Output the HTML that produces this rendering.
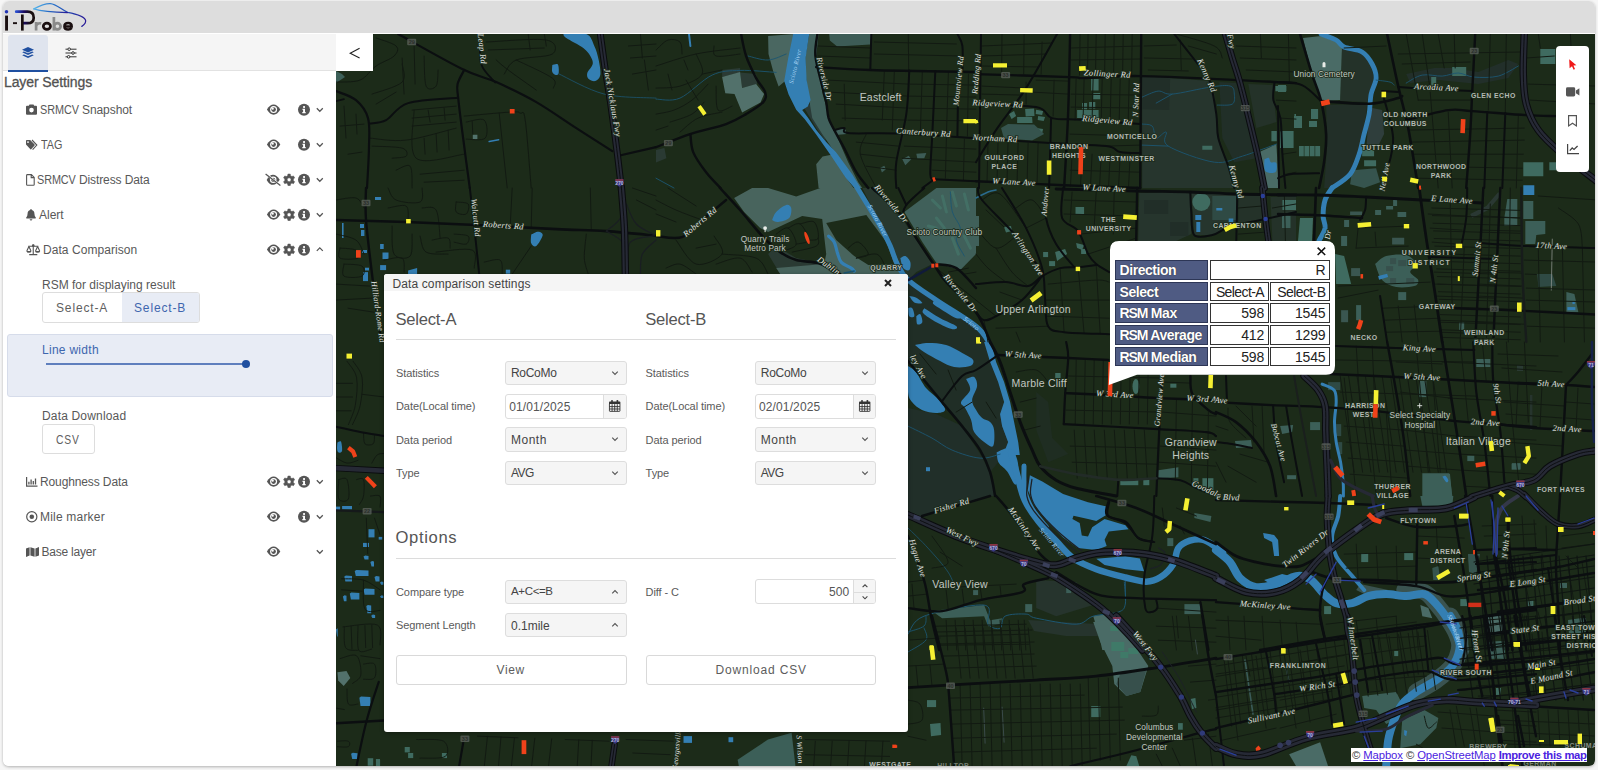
<!DOCTYPE html>
<html lang="en">
<head>
<meta charset="utf-8">
<title>i-Probe</title>
<style>
*{box-sizing:border-box;}
html,body{margin:0;padding:0;}
body{width:1598px;height:770px;overflow:hidden;background:#f6f6f6;font-family:"Liberation Sans",sans-serif;color:#555;position:relative;}
#card{position:absolute;left:3px;top:1px;width:1592px;height:765px;border-radius:6px;background:#fff;box-shadow:0 1px 3px rgba(0,0,0,.28);overflow:hidden;}
#in{position:absolute;left:-3px;top:-1px;width:1598px;height:770px;}
.abs{position:absolute;}
#hdr{left:0;top:0;width:1598px;height:33px;background:#dddddd;}
#tabs{left:3px;top:34px;width:333px;height:37px;background:#f5f5f5;border-bottom:1px solid #e2e2e2;}
#tabact{left:8px;top:35px;width:40px;height:37px;background:#dfe4ee;border-bottom:2px solid #1f4fa0;border-radius:3px 3px 0 0;}
#collapse{left:336px;top:34px;width:37px;height:37px;background:#fff;}
.t{position:absolute;white-space:nowrap;line-height:1;}
.row{font-size:12px;color:#585858;}
.cap{display:inline-block;transform:scaleX(.905);transform-origin:0 50%;}
svg{position:absolute;overflow:visible;}
.ic{fill:#555;}
</style>
</head>
<body>
<div id="card"><div id="in">

<!-- MAP -->
<div class="abs" id="map" style="left:336px;top:34px;width:1259px;height:733px;background:#1c2b19;overflow:hidden;">
<!--MAPSVG-START-->
<svg width="1259" height="733" viewBox="0 0 1259 733" style="left:0;top:0">
<g id="L-land">
<polygon points="386.1,36.0 404.1,34.0 404.1,38.4 386.1,43.1" fill="#2b3b35"/>
<polygon points="404.1,38.4 420.1,40.1 421.1,50.1 406.1,54.1" fill="#2b3b35"/>
<polygon points="320.0,116.1 328.4,114.1 330.4,124.2 320.0,128.6" fill="#2a3a33"/>
<polygon points="468.2,74.1 474.2,70.1 486.2,94.1 490.2,108.1 480.2,94.1" fill="#2a3b38"/>
<polygon points="806.2,42.1 874.3,47.1 878.3,60.1 882.3,104.1 892.3,132.2 898.3,154.0 806.2,154.0" fill="#26352d"/>
<polygon points="806.2,42.1 834.2,43.3 833.2,76.1 806.2,75.3" fill="#212e28"/>
<polygon points="883.3,48.1 900.3,49.1 912.3,90.1 920.4,124.2 898.3,128.2 886.3,104.1" fill="#212f28"/>
<polygon points="912.3,50.1 936.4,51.1 940.4,88.1 920.4,94.1" fill="#243229"/>
<polygon points="1006.1,12.0 1026.1,19.0 1035.1,30.0 1038.1,44.1 1033.1,60.1 1031.1,68.1 1004.1,67.1" fill="#243229"/>
<polygon points="990.1,71.1 1031.1,70.1 1028.1,100.1 1023.1,120.2 1014.1,140.2 996.1,154.0 988.1,154.0 991.1,112.1" fill="#222f28"/>
<polygon points="1036.1,74.1 1046.1,76.1 1048.1,100.1 1042.1,112.1 1030.1,116.1 1033.1,80.1" fill="#2f3e3c"/>
<polygon points="1070.2,40.1 1098.2,34.0 1116.2,34.0 1142.3,38.0 1172.3,26.0 1182.3,30.0 1172.3,44.1 1142.3,50.1 1102.2,46.1 1074.2,49.1" fill="#222f2a"/>
<polygon points="440.2,212.1 460.2,224.1 488.2,230.1 444.2,240.1 432.1,220.1" fill="#2a3a33"/>
<polygon points="526.3,154.0 538.3,154.0 568.3,188.0 596.3,230.1 580.3,238.1 572.3,246.1 562.3,230.1 552.3,206.1 540.3,182.0" fill="#28382f"/>
<polygon points="572.3,248.1 600.4,266.1 640.0,294.2 652.4,308.0 572.3,308.0" fill="#202e26"/>
<polygon points="803.2,159.0 854.3,158.0 855.3,200.1 840.3,207.1 802.2,207.1" fill="#26352d"/>
<polygon points="855.3,159.0 900.3,160.0 900.3,191.0 888.3,195.1 876.3,201.1 858.3,201.1" fill="#26352d"/>
<polygon points="902.3,161.0 924.4,161.6 928.4,186.0 902.3,191.0" fill="#243229"/>
<polygon points="934.4,163.0 960.0,162.0 960.0,207.1 936.4,207.1" fill="#243229"/>
<polygon points="808.2,166.0 832.2,166.0 832.2,180.0 808.2,180.0" fill="#212e28"/>
<polygon points="834.2,188.0 852.3,188.0 852.3,202.1 834.2,202.1" fill="#212e28"/>
<polygon points="1134.2,180.0 1150.3,172.0 1162.3,158.0 1164.3,162.0 1152.3,176.0 1136.2,184.0" fill="#2a3833"/>
<polygon points="572.0,374.1 600.1,380.1 626.1,392.1 644.1,420.1 654.1,438.2 660.1,462.0 572.0,462.0" fill="#212f29"/>
<polygon points="572.0,308.0 648.1,308.0 654.1,328.0 662.1,348.1 668.1,368.1 664.1,380.1 666.1,392.1 672.1,408.1 668.1,420.1 662.1,428.2 654.1,438.2 644.1,416.1 626.1,392.1 606.1,368.1 588.0,346.0 572.0,327.0" fill="#202e26"/>
<polygon points="664.1,380.1 669.1,377.1 672.1,392.1 675.1,408.1 672.1,408.1 666.1,392.1" fill="#2a4a60"/>
<polygon points="700.2,358.1 712.2,368.1 716.2,404.1 732.2,420.1 712.2,428.2 700.2,396.1" fill="#1f2d22"/>
<polygon points="1194.0,361.0 1196.4,361.0 1196.4,396.0 1194.0,396.0" fill="#26342d"/>
<polygon points="700.2,546.1 740.2,548.1 760.3,570.1 720.2,582.2 700.2,574.1" fill="#26342d"/>
<polygon points="572.0,462.0 654.1,462.0 620.1,472.0 586.0,482.0 572.0,481.0" fill="#212f29"/>
<polygon points="789.4,528.6 803.9,526.5 806.0,530.6 793.6,531.7" fill="#1f2f22"/>
<polygon points="692.2,586.0 760.3,590.0 762.3,602.0 730.2,602.0 698.2,597.0" fill="#26342d"/>
</g>
<g id="L-park">
<polygon points="136.8,100.7 141.4,100.7 141.4,105.3 136.8,105.3" fill="#52736c"/>
<polygon points="0.0,37.0 6.0,40.1 9.0,43.1 0.0,49.1" fill="#3c5f58"/>
<polygon points="473.2,0.0 482.6,0.0 480.2,22.0 486.6,60.1 494.6,88.1 512.2,128.2 522.3,148.2 526.3,154.0 518.2,154.0 500.2,120.2 486.2,100.1 476.2,84.1 473.2,66.1 470.2,46.1 469.2,24.0" fill="#41615c"/>
<polygon points="432.1,2.0 458.2,0.0 453.2,24.0 449.2,47.1 442.6,52.5 437.1,37.0 432.5,20.0" fill="#4a6761"/>
<polygon points="493.2,0.0 535.3,0.0 534.3,10.4 501.2,12.4 493.8,6.4" fill="#3d5c56"/>
<polygon points="386.1,43.1 404.1,38.0 406.1,54.1 420.1,50.1 428.1,60.1 424.5,68.5 406.1,78.5 398.5,60.1 389.3,59.3" fill="#52716b"/>
<polygon points="482.6,154.0 480.2,130.2 486.6,122.6 496.6,120.6 510.6,144.6 517.6,154.0" fill="#48645d"/>
<polygon points="566.3,125.2 572.7,121.8 575.3,125.2 569.3,131.2" fill="#3d5c56"/>
<polygon points="580.3,119.7 590.3,119.1 588.3,124.2 581.3,124.6" fill="#3d5c56"/>
<polygon points="544.3,133.8 548.3,131.8 549.9,135.2 545.9,138.6" fill="#3d5c56"/>
<polygon points="499.2,96.1 509.2,94.5 510.6,100.1 500.2,101.1" fill="#41615c"/>
<polygon points="755.1,45.1 762.6,45.1 762.6,56.5 755.1,56.5" fill="#3f6b60"/>
<polygon points="757.1,59.1 764.2,59.1 764.2,65.3 757.1,65.3" fill="#3f6b60"/>
<polygon points="746.1,69.1 751.1,69.1 751.1,75.3 746.1,75.3" fill="#3f6b60"/>
<polygon points="753.1,68.1 759.3,68.1 759.3,74.5 753.1,74.5" fill="#3f6b60"/>
<polygon points="741.1,76.1 762.6,76.1 762.6,84.1 741.1,84.1" fill="#3f6b60"/>
<polygon points="939.4,52.1 950.4,52.1 950.4,57.3 939.4,57.3" fill="#3f6b60"/>
<polygon points="935.4,97.1 940.8,97.1 940.8,107.3 935.4,107.3" fill="#3f6b60"/>
<polygon points="944.4,97.1 957.6,97.1 957.6,114.1 944.4,114.1" fill="#3f6b60"/>
<polygon points="866.3,111.7 876.3,111.7 876.3,115.7 866.3,115.7" fill="#3f6b60"/>
<polygon points="958.4,80.1 960.0,80.1 960.0,94.1 958.4,94.1" fill="#3f6b60"/>
<polygon points="673.0,80.1 678.0,77.1 680.1,82.1 675.6,85.1" fill="#3f6b60"/>
<polygon points="681.1,83.1 696.1,83.1 696.5,89.1 681.1,89.1" fill="#3f6b60"/>
<polygon points="689.1,75.1 698.1,74.5 698.5,82.1 689.7,82.5" fill="#3f6b60"/>
<polygon points="700.1,75.7 707.1,77.1 706.1,81.1 699.7,80.1" fill="#3f6b60"/>
<polygon points="702.1,82.1 709.1,83.1 707.7,87.1 701.7,86.1" fill="#3f6b60"/>
<polygon points="700.1,94.1 707.1,95.1 706.1,99.1 701.1,98.5" fill="#3f6b60"/>
<polygon points="665.0,94.1 672.0,90.1 698.1,90.5 708.1,100.1 696.1,106.5 668.0,104.5" fill="#36544e"/>
<polygon points="923.4,118.1 940.4,110.1 942.8,154.0 928.8,154.0" fill="#4a6b66"/>
<polygon points="967.0,4.0 985.1,2.0 1006.1,10.0 1004.1,66.1 985.1,67.1 976.0,40.1" fill="#4a6b66"/>
<polygon points="1016.1,136.2 1040.1,134.2 1044.1,148.2 1028.1,154.0 1014.1,150.2" fill="#36544e"/>
<polygon points="1116.2,33.0 1130.2,33.0 1130.2,42.1 1116.2,42.1" fill="#3f6b60"/>
<polygon points="1095.2,43.1 1100.2,43.1 1100.2,53.1 1095.2,53.1" fill="#3f6b60"/>
<polygon points="1204.3,15.0 1219.3,15.0 1219.3,30.0 1204.3,30.0" fill="#3f6b60"/>
<polygon points="1187.3,128.2 1207.3,128.2 1207.3,142.2 1187.3,142.2" fill="#3f6b60"/>
<polygon points="1213.3,128.2 1220.3,128.2 1220.3,136.2 1213.3,136.2" fill="#3f6b60"/>
<polygon points="958.0,82.1 966.0,82.1 966.0,94.1 958.0,94.1" fill="#3f6b60"/>
<polygon points="975.0,75.1 982.1,75.1 982.1,85.1 975.0,85.1" fill="#3f6b60"/>
<polygon points="973.0,87.1 981.0,87.1 981.0,93.1 973.0,93.1" fill="#3f6b60"/>
<polygon points="944.0,98.1 957.0,98.1 957.0,114.1 944.0,114.1" fill="#3f6b60"/>
<polygon points="942.0,51.1 950.0,51.1 950.0,58.1 942.0,58.1" fill="#3f6b60"/>
<polygon points="1026.1,116.1 1038.1,116.1 1038.1,122.2 1026.1,122.2" fill="#3f6b60"/>
<polygon points="1028.1,126.2 1040.1,126.2 1040.1,132.2 1028.1,132.2" fill="#3f6b60"/>
<polygon points="963.0,112.1 967.8,112.1 967.8,122.2 963.0,122.2" fill="#3f6b60"/>
<polygon points="968.4,112.1 973.2,112.1 973.2,122.2 968.4,122.2" fill="#3f6b60"/>
<polygon points="973.8,112.1 978.6,112.1 978.6,122.2 973.8,122.2" fill="#3f6b60"/>
<polygon points="979.2,112.1 984.1,112.1 984.1,122.2 979.2,122.2" fill="#3f6b60"/>
<polygon points="1.4,638.3 10.5,637.0 14.3,643.9 7.7,652.1 2.2,646.6" fill="#52716b"/>
<polygon points="31.7,724.2 37.2,724.2 37.2,731.7 31.7,731.7" fill="#3f6b60"/>
<polygon points="39.9,725.0 44.0,725.0 44.0,731.7 39.9,731.7" fill="#3f6b60"/>
<polygon points="401.6,725.8 432.0,705.5 455.6,698.8 459.7,734.2 403.3,734.2" fill="#3c5f58"/>
<polygon points="68.7,713.0 73.8,713.0 73.8,718.4 68.7,718.4" fill="#3f6b60"/>
<polygon points="72.1,719.0 77.2,719.0 77.2,724.1 72.1,724.1" fill="#3f6b60"/>
<polygon points="105.9,719.0 111.0,719.0 111.0,724.1 105.9,724.1" fill="#3f6b60"/>
<polygon points="40.0,725.8 44.1,725.8 44.1,731.9 40.0,731.9" fill="#3f6b60"/>
<polygon points="398.1,164.0 416.1,154.0 520.3,154.0 532.3,176.0 550.3,206.1 560.3,222.1 567.3,240.1 444.2,240.1 440.2,234.1 488.2,230.1 490.2,220.1 486.2,185.0 466.2,182.0 432.1,198.1 424.1,194.1 408.1,178.0" fill="#48645d"/>
<polygon points="568.3,178.0 600.4,154.0 640.0,154.0 640.0,220.1 624.4,236.1 600.4,229.1 586.3,208.1" fill="#40605a"/>
<path d="M596.3 166.0 L604.4 174.0" fill="none" stroke="#44766a" stroke-width="3" stroke-linecap="round" stroke-linejoin="round" opacity="0.7"/>
<path d="M606.4 162.0 L610.4 178.0" fill="none" stroke="#44766a" stroke-width="3" stroke-linecap="round" stroke-linejoin="round" opacity="0.7"/>
<path d="M616.4 158.0 L620.4 172.0" fill="none" stroke="#44766a" stroke-width="3" stroke-linecap="round" stroke-linejoin="round" opacity="0.7"/>
<path d="M628.4 160.0 L632.4 176.0" fill="none" stroke="#44766a" stroke-width="3" stroke-linecap="round" stroke-linejoin="round" opacity="0.7"/>
<path d="M600.4 184.0 L608.4 194.1" fill="none" stroke="#44766a" stroke-width="3" stroke-linecap="round" stroke-linejoin="round" opacity="0.7"/>
<path d="M616.4 204.1 L622.4 220.1" fill="none" stroke="#44766a" stroke-width="3" stroke-linecap="round" stroke-linejoin="round" opacity="0.7"/>
<path d="M628.4 202.1 L634.4 214.1" fill="none" stroke="#44766a" stroke-width="3" stroke-linecap="round" stroke-linejoin="round" opacity="0.7"/>
<path d="M592.3 192.0 L600.4 194.1" fill="none" stroke="#44766a" stroke-width="3" stroke-linecap="round" stroke-linejoin="round" opacity="0.7"/>
<circle cx="865.3" cy="168.0" r="9" fill="#3f6b60"/>
<polygon points="876.3,162.0 900.3,162.0 900.3,186.0 876.3,186.0" fill="#2f4a44"/>
<polygon points="949.4,182.0 954.4,182.0 954.4,194.1 949.4,194.1" fill="#3f6b60"/>
<polygon points="739.5,173.0 748.1,173.0 748.1,180.0 739.5,180.0" fill="#3f6b60"/>
<polygon points="745.1,215.1 750.1,215.1 750.1,220.1 745.1,220.1" fill="#3f6b60"/>
<polygon points="707.1,218.1 712.1,218.1 712.1,223.1 707.1,223.1" fill="#3f6b60"/>
<polygon points="713.1,227.1 719.1,227.1 719.1,232.1 713.1,232.1" fill="#3f6b60"/>
<polygon points="946.4,166.0 960.0,166.0 960.0,176.0 946.4,176.0" fill="#3f6b60"/>
<polygon points="740.1,209.1 748.1,211.1 746.1,216.1 741.1,214.1" fill="#3f6b60"/>
<polygon points="719.1,218.1 729.1,215.1 731.1,220.1 721.1,227.1" fill="#3f6b60"/>
<polygon points="668.0,193.0 675.0,192.0 676.0,197.1 670.0,198.5" fill="#3f6b60"/>
<polygon points="640.0,182.0 643.0,182.0 643.0,212.1 640.0,212.1" fill="#40605a"/>
<path d="M1039.1 230.1 C1041.0 228.8 1045.0 223.6 1050.1 222.1 C1055.3 220.6 1065.2 219.7 1070.2 221.1 C1075.2 222.4 1079.5 227.3 1080.2 230.1 C1080.8 232.9 1073.8 235.4 1074.2 238.1 C1074.5 240.8 1081.5 243.8 1082.2 246.1 C1082.8 248.5 1081.8 251.0 1078.2 252.1 C1074.5 253.3 1065.5 254.1 1060.1 253.1 C1054.8 252.1 1049.6 250.0 1046.1 246.1 C1042.6 242.3 1040.3 232.8 1039.1 230.1Z" fill="#3c5f58"/>
<polygon points="1054.1,224.1 1060.1,224.1 1060.1,230.1 1054.1,230.1" fill="#37504c"/>
<polygon points="1050.1,232.1 1057.1,232.1 1057.1,237.1 1050.1,237.1" fill="#37504c"/>
<polygon points="1062.2,226.1 1070.2,226.1 1070.2,232.1 1062.2,232.1" fill="#37504c"/>
<polygon points="1070.2,244.1 1078.2,244.1 1078.2,250.1 1070.2,250.1" fill="#37504c"/>
<polygon points="1054.1,244.1 1060.1,244.1 1060.1,249.1 1054.1,249.1" fill="#37504c"/>
<polygon points="999.1,220.1 1008.1,222.1 1015.1,250.1 1000.1,250.1" fill="#3f6b60"/>
<polygon points="1015.1,234.1 1024.1,234.1 1024.1,242.1 1015.1,242.1" fill="#3a5650"/>
<polygon points="1056.1,203.7 1068.2,203.7 1068.2,210.5 1056.1,210.5" fill="#3a5650"/>
<polygon points="1014.1,177.6 1026.1,177.6 1026.1,181.0 1014.1,181.0" fill="#3a5650"/>
<polygon points="1005.1,276.2 1012.1,276.2 1012.1,288.2 1005.1,288.2" fill="#3a5650"/>
<polygon points="1005.1,202.1 1011.1,202.1 1011.1,212.1 1005.1,212.1" fill="#3c5f58"/>
<polygon points="1039.1,176.0 1045.1,176.0 1045.1,181.0 1039.1,181.0" fill="#3c5f58"/>
<polygon points="1050.1,172.0 1057.1,172.0 1057.1,175.6 1050.1,175.6" fill="#3c5f58"/>
<polygon points="1057.1,166.0 1061.1,166.0 1061.1,172.0 1057.1,172.0" fill="#3c5f58"/>
<polygon points="1061.5,178.0 1070.2,178.0 1070.2,183.0 1061.5,183.0" fill="#3c5f58"/>
<polygon points="1008.1,186.0 1013.1,186.0 1013.1,193.0 1008.1,193.0" fill="#3c5f58"/>
<polygon points="946.0,182.0 954.0,182.0 954.0,194.1 946.0,194.1" fill="#3c5f58"/>
<polygon points="1123.2,288.2 1128.2,288.2 1128.2,296.2 1123.2,296.2" fill="#3c5f58"/>
<polygon points="1020.1,271.1 1025.1,271.1 1025.1,286.2 1020.1,286.2" fill="#3c5f58"/>
<polygon points="1062.2,258.1 1070.2,258.1 1070.2,266.1 1062.2,266.1" fill="#3c5f58"/>
<polygon points="964.0,184.0 977.0,184.0 976.0,207.1 962.0,207.1" fill="#3f6b60"/>
<polygon points="1171.3,165.0 1181.3,165.0 1181.3,192.0 1168.3,192.0 1168.3,184.0" fill="#3c5f58"/>
<polygon points="1187.3,167.0 1197.3,167.0 1197.3,185.0 1187.3,185.0" fill="#3c5f58"/>
<polygon points="1189.3,187.0 1209.3,187.0 1209.3,200.1 1200.3,201.1 1199.3,210.1 1189.3,210.1" fill="#3c5f58"/>
<polygon points="1201.3,240.1 1216.3,240.1 1220.3,252.1 1202.3,253.1" fill="#2f4a44"/>
<polygon points="1230.4,258.1 1238.4,260.1 1242.4,278.2 1230.4,278.2" fill="#3c5f58"/>
<polygon points="719.2,339.0 724.6,339.0 724.6,344.0 719.2,344.0" fill="#3f6b60"/>
<polygon points="834.3,349.7 840.4,349.7 840.4,353.7 834.3,353.7" fill="#3f6b60"/>
<polygon points="784.3,445.2 802.3,445.2 802.3,451.2 784.3,451.2" fill="#3f6b60"/>
<polygon points="807.3,445.2 813.3,445.2 813.3,451.2 807.3,451.2" fill="#3f6b60"/>
<polygon points="857.4,444.2 862.4,444.2 862.4,452.2 857.4,452.2" fill="#3f6b60"/>
<polygon points="866.4,444.2 877.4,444.2 877.4,456.2 866.4,456.2" fill="#3f6b60"/>
<ellipse cx="799.9" cy="352.5" rx="3.4" ry="7.4" fill="#3f6b60"/>
<polygon points="822.3,436.2 842.4,433.2 842.4,443.2 822.3,444.2" fill="#3c5f58"/>
<polygon points="974.1,388.1 984.1,388.1 984.1,396.1 974.1,396.1" fill="#3c5f58"/>
<polygon points="1083.3,347.0 1090.3,347.0 1090.3,363.1 1083.3,363.1" fill="#3c5f58"/>
<polygon points="1140.3,325.0 1154.3,325.0 1154.3,333.0 1140.3,333.0" fill="#3c5f58"/>
<polygon points="1131.3,421.7 1138.3,421.7 1138.3,427.1 1131.3,427.1" fill="#3c5f58"/>
<polygon points="1176.0,429.2 1184.4,429.2 1184.4,435.2 1176.0,435.2" fill="#3c5f58"/>
<polygon points="951.1,441.2 960.1,441.2 960.1,445.2 951.1,445.2" fill="#3c5f58"/>
<polygon points="1000.2,390.1 1005.2,390.1 1005.2,402.1 1000.2,402.1" fill="#2f4a44"/>
<polygon points="1002.2,408.1 1006.2,408.1 1006.2,420.1 1002.2,420.1" fill="#2f4a44"/>
<polygon points="992.1,348.1 1004.2,348.1 1004.2,356.1 992.1,356.1" fill="#2f4a44"/>
<polygon points="944.1,392.1 957.1,391.1 956.1,398.1 946.1,400.1" fill="#3c5f58"/>
<polygon points="899.0,407.1 915.0,406.1 916.0,413.1 900.0,414.1" fill="#3c5f58"/>
<polygon points="1086.3,439.2 1113.3,439.2 1116.3,462.0 1086.3,462.0" fill="#3c5f58"/>
<polygon points="1175.6,429.6 1184.4,429.6 1184.4,435.6 1175.6,435.6" fill="#3c5f58"/>
<polygon points="1181.0,331.0 1187.0,331.0 1187.0,337.0 1181.0,337.0" fill="#2a3a33"/>
<polygon points="1102.0,440.0 1114.0,440.0 1116.0,461.8 1102.0,461.8" fill="#3c5f58"/>
<polygon points="596.0,577.1 648.1,571.1 654.1,586.2 666.1,584.2 664.1,590.2 652.1,592.2 648.1,582.2 606.1,584.2" fill="#3c5f58"/>
<polygon points="757.2,582.2 770.3,580.1 790.3,600.2 804.3,616.0 766.3,616.0 762.3,598.2" fill="#4a6b66"/>
<polygon points="774.3,590.2 782.3,590.2 782.3,598.2 774.3,598.2" fill="#3f7a68"/>
<polygon points="782.3,602.2 792.3,602.2 792.3,610.2 782.3,610.2" fill="#3f7a68"/>
<polygon points="689.2,570.1 696.2,570.1 696.2,578.1 689.2,578.1" fill="#3c5f58"/>
<polygon points="637.1,556.1 642.1,556.1 642.1,561.1 637.1,561.1" fill="#3c5f58"/>
<polygon points="730.2,553.1 735.2,553.1 735.2,559.1 730.2,559.1" fill="#3c5f58"/>
<polygon points="848.4,570.1 864.4,570.1 864.4,580.1 848.4,580.1" fill="#3c5f58"/>
<polygon points="831.3,504.1 837.3,504.1 837.3,512.1 831.3,512.1" fill="#3c5f58"/>
<polygon points="858.4,479.0 875.4,482.0 874.4,488.0 858.4,484.0" fill="#3c5f58"/>
<path d="M1068.2 556.1 C1071.6 556.5 1082.9 555.8 1088.3 558.1 C1093.6 560.5 1096.3 565.5 1100.3 570.1 C1104.3 574.8 1109.0 581.1 1112.3 586.2 C1115.6 591.2 1118.1 595.2 1120.3 600.2 C1122.5 605.1 1124.5 613.4 1125.3 616.0" fill="none" stroke="#3a5350" stroke-width="16" stroke-linecap="round" stroke-linejoin="round"/>
<polygon points="1024.2,550.1 1052.2,556.1 1032.2,562.1 1020.2,556.1" fill="#3a5350"/>
<polygon points="1025.2,519.1 1032.2,519.1 1032.2,528.1 1025.2,528.1" fill="#3f6b60"/>
<polygon points="988.1,572.1 995.1,572.1 995.1,580.1 988.1,580.1" fill="#3f6b60"/>
<polygon points="1124.3,565.1 1131.3,565.1 1131.3,572.1 1124.3,572.1" fill="#3f6b60"/>
<polygon points="1192.4,566.1 1197.4,566.1 1197.4,572.1 1192.4,572.1" fill="#3f6b60"/>
<polygon points="1156.3,608.2 1168.4,608.2 1168.4,616.0 1156.3,616.0" fill="#3f6b60"/>
<polygon points="1068.2,519.1 1077.2,519.1 1077.2,526.1 1068.2,526.1" fill="#3f6b60"/>
<polygon points="1084.3,462.0 1117.3,462.0 1116.3,472.0 1086.3,472.0" fill="#3c5f58"/>
<polygon points="1132.3,520.1 1142.3,520.1 1140.3,538.1 1133.3,536.1" fill="#36544e"/>
<polygon points="1096.3,534.1 1102.3,532.1 1104.3,546.1 1097.3,546.1" fill="#36544e"/>
<polygon points="1084.3,571.1 1092.3,574.1 1096.3,584.2 1086.3,582.2" fill="#4a6b66"/>
<polygon points="1149.3,584.2 1166.4,582.2 1168.4,598.2 1150.3,599.2" fill="#4a6b66"/>
<polygon points="757.2,588.0 772.3,586.0 796.3,608.0 812.3,632.1 804.3,658.1 790.3,662.1 778.3,650.1 776.3,632.1 764.3,608.0" fill="#4a6b66"/>
<polygon points="784.3,640.1 810.3,636.1 804.3,658.1 790.3,662.1 780.3,650.1" fill="#37504c"/>
<polygon points="774.3,592.0 782.3,592.0 782.3,597.0 774.3,597.0" fill="#3f7a68"/>
<polygon points="775.3,608.0 788.3,608.0 788.3,617.0 775.3,617.0" fill="#3f7a68"/>
<polygon points="784.3,618.0 792.3,618.0 792.3,624.1 784.3,624.1" fill="#3f7a68"/>
<polygon points="792.3,614.0 802.3,614.0 802.3,620.0 792.3,620.0" fill="#3f7a68"/>
<polygon points="591.0,666.1 600.1,666.1 600.1,673.1 591.0,673.1" fill="#3f6b60"/>
<polygon points="755.2,672.1 764.3,672.1 764.3,683.1 755.2,683.1" fill="#3f6b60"/>
<polygon points="842.0,689.1 846.8,689.1 846.8,695.7 842.0,695.7" fill="#3f6b60"/>
<polygon points="594.0,690.1 604.5,689.1 605.1,701.1 595.0,702.2" fill="#3f6b60"/>
<polygon points="854.4,665.1 859.4,664.1 860.4,674.1 856.0,675.1" fill="#3f6b60"/>
<polygon points="790.3,732.2 795.3,721.2 800.3,722.2 803.3,732.2" fill="#3f6b60"/>
<path d="M1114.3 582.0 C1115.6 584.7 1120.8 592.3 1122.3 598.0 C1123.8 603.7 1124.3 610.4 1123.3 616.0 C1122.3 621.7 1120.1 627.1 1116.3 632.1 C1112.5 637.1 1106.3 641.7 1100.3 646.1 C1094.3 650.4 1083.6 656.1 1080.3 658.1" fill="none" stroke="#3a5350" stroke-width="17" stroke-linecap="round" stroke-linejoin="round"/>
<polygon points="1026.2,662.1 1060.2,658.1 1066.2,670.1 1058.2,686.1 1050.2,690.1 1040.2,676.1 1028.2,674.1" fill="#3c5f58"/>
<polygon points="1066.2,686.1 1088.3,676.1 1102.3,684.1 1100.3,694.1 1084.3,710.2 1064.2,714.2" fill="#3c5f58"/>
<polygon points="953.1,720.2 984.1,708.2 992.1,732.2 960.1,732.2" fill="#4a6b66"/>
<polygon points="1153.3,608.0 1168.4,607.0 1169.4,625.1 1154.3,624.1" fill="#3c5f58"/>
<polygon points="1150.3,584.0 1166.4,584.0 1166.4,600.0 1150.3,600.0" fill="#4a6b66"/>
<polygon points="1058.2,617.0 1062.2,617.0 1062.2,622.1 1058.2,622.1" fill="#3f6b60"/>
<polygon points="1160.4,654.1 1164.4,654.1 1164.4,662.1 1160.4,662.1" fill="#3f6b60"/>
<polygon points="1191.6,566.0 1196.0,566.0 1196.0,572.0 1191.6,572.0" fill="#3c5f58"/>
<polygon points="1224.0,549.0 1231.0,549.0 1231.0,554.0 1224.0,554.0" fill="#3c5f58"/>
<polygon points="1153.0,608.0 1168.0,608.0 1168.0,615.8 1153.0,615.8" fill="#3c5f58"/>
<polygon points="1150.0,582.0 1166.0,581.0 1168.0,600.0 1152.0,601.0" fill="#4a6b66"/>
<polygon points="1232.0,586.0 1248.0,584.0 1250.0,600.0 1233.0,600.0" fill="#3c5f58"/>
<polygon points="1132.0,520.0 1144.0,520.0 1140.0,540.0 1133.0,538.0" fill="#36544e"/>
<polygon points="1150.0,583.0 1166.0,582.0 1168.0,598.0 1151.0,599.0" fill="#4a6b66"/>
<polygon points="1153.0,608.0 1167.0,607.0 1168.0,624.0 1154.4,625.0" fill="#3c5f58"/>
<polygon points="1238.0,585.0 1250.0,584.0 1251.0,597.0 1239.0,598.0" fill="#3c5f58"/>
<polygon points="1160.0,654.0 1165.0,654.0 1165.0,661.0 1160.0,661.0" fill="#3f6b60"/>
</g>
<g id="L-land2">
<polygon points="432.1,154.0 460.2,162.4 484.2,154.0" fill="#1c2b19"/>
<polygon points="490.2,189.0 530.3,181.0 550.3,208.1 558.3,230.1 532.3,231.1 518.2,222.1 500.2,206.1" fill="#1c2b19"/>
</g>
<g id="L-water">
<path d="M227.3 0.0 C231.1 0.0 245.1 -2.0 250.3 0.0 C255.5 2.0 256.3 7.7 258.3 12.0 C260.4 16.4 261.7 21.2 262.7 26.0 C263.7 30.9 264.9 37.5 264.3 41.1 C263.8 44.6 261.3 46.4 259.3 47.1 C257.4 47.7 254.1 46.4 252.7 45.1 C251.4 43.7 250.6 41.6 251.3 39.0 C252.0 36.5 256.2 32.9 256.7 30.0 C257.2 27.2 255.9 24.7 254.3 22.0 C252.7 19.4 251.3 17.0 247.3 14.0 C243.3 11.0 233.6 6.3 230.3 4.0 C227.0 1.7 227.8 0.7 227.3 0.0Z" fill="#347fb3"/>
<path d="M216.3 31.0 C217.2 30.9 220.8 29.1 221.9 30.4 C222.9 31.8 223.0 37.3 222.7 39.0 C222.3 40.8 220.9 41.2 219.9 41.1 C218.8 40.9 216.9 39.7 216.3 38.0 C215.7 36.4 216.3 32.2 216.3 31.0Z" fill="#347fb3"/>
<path d="M153.2 107.5 L162.6 105.7" fill="none" stroke="#347fb3" stroke-width="1.6" stroke-linecap="round" stroke-linejoin="round"/>
<polygon points="457.2,0.0 473.2,0.0 469.6,24.0 470.6,46.1 474.6,66.1 471.8,72.5 466.2,76.1 472.2,84.1 480.2,96.1 490.2,108.1 500.2,118.5 516.2,140.2 524.7,154.0 518.6,154.0 510.2,144.6 494.2,120.6 480.2,100.5 468.6,85.1 460.2,75.7 452.6,60.5 448.2,47.1 452.2,24.0" fill="#347fb3"/>
<path d="M353.0 0.0 L354.4 12.0" fill="none" stroke="#347fb3" stroke-width="2" stroke-linecap="round" stroke-linejoin="round"/>
<path d="M928.4 125.2 C929.1 124.9 931.7 123.3 932.8 123.8 C933.8 124.3 933.5 127.3 934.8 128.2 C936.0 129.1 939.6 127.5 940.4 129.2 C941.1 130.8 941.2 136.8 939.4 138.2 C937.5 139.5 931.2 139.3 929.4 137.2 C927.5 135.0 928.5 127.2 928.4 125.2Z" fill="#347fb3"/>
<polygon points="1187.3,151.2 1198.3,151.2 1198.3,154.0 1187.3,154.0" fill="#347fb3"/>
<path d="M985.1 0.0 C987.6 1.0 996.2 3.8 1000.1 6.0 C1003.9 8.2 1003.7 11.0 1008.1 13.0 C1012.4 15.0 1021.4 15.2 1026.1 18.0 C1030.8 20.9 1033.8 25.7 1036.1 30.0 C1038.5 34.4 1040.3 39.0 1040.1 44.1 C1040.0 49.1 1036.3 54.1 1035.1 60.1 C1033.9 66.1 1034.3 73.4 1033.1 80.1 C1031.9 86.8 1029.8 93.5 1028.1 100.1 C1026.4 106.8 1025.4 113.5 1023.1 120.2 C1020.8 126.8 1018.6 134.5 1014.1 140.2 C1009.6 145.8 999.1 151.7 996.1 154.0" fill="none" stroke="#347fb3" stroke-width="4.8" stroke-linecap="round" stroke-linejoin="round"/>
<path d="M195.2 200.5 C196.4 200.0 200.4 197.5 202.3 197.7 C204.2 197.8 207.0 198.9 206.7 201.3 C206.3 203.7 202.2 210.7 200.3 212.1 C198.3 213.4 196.1 211.2 195.2 209.3 C194.4 207.3 195.2 201.9 195.2 200.5Z" fill="#347fb3"/>
<polygon points="39.0,163.0 45.1,163.0 45.1,166.0 39.0,166.0" fill="#347fb3"/>
<polygon points="6.0,189.0 7.6,189.0 7.6,204.1 6.0,204.1" fill="#347fb3"/>
<polygon points="24.0,190.0 28.0,190.0 28.0,194.1 24.0,194.1" fill="#347fb3"/>
<polygon points="25.0,196.1 28.4,196.1 28.4,202.1 25.0,202.1" fill="#347fb3"/>
<polygon points="44.1,210.1 47.7,210.1 47.7,215.1 44.1,215.1" fill="#347fb3"/>
<polygon points="46.5,218.5 52.5,218.5 52.5,225.1 46.5,225.1" fill="#347fb3"/>
<polygon points="44.1,231.1 50.1,231.1 50.1,236.1 44.1,236.1" fill="#347fb3"/>
<polygon points="26.0,216.1 31.0,216.1 31.0,219.1 26.0,219.1" fill="#347fb3"/>
<polygon points="27.0,238.1 32.0,238.1 32.0,247.1 27.0,247.1" fill="#347fb3"/>
<polygon points="29.0,233.7 33.0,233.7 33.0,236.5 29.0,236.5" fill="#347fb3"/>
<polygon points="169.8,235.7 174.2,235.7 174.2,239.7 169.8,239.7" fill="#347fb3"/>
<polygon points="72.1,236.5 81.1,234.1 81.1,240.1 72.1,240.1" fill="#347fb3"/>
<path d="M1.4 408.5 C2.0 408.3 4.2 406.3 5.0 407.6 C5.7 409.0 6.4 414.9 6.1 416.7 C5.7 418.6 3.6 418.9 2.8 418.6 C1.9 418.4 1.3 417.0 1.1 415.3 C0.9 413.6 1.3 409.6 1.4 408.5Z" fill="#347fb3"/>
<polygon points="0.0,472.6 4.1,472.6 4.1,476.4 0.0,476.4" fill="#347fb3"/>
<polygon points="6.1,472.0 16.0,472.0 16.0,475.3 6.1,475.3" fill="#347fb3"/>
<polygon points="32.5,495.2 38.5,495.2 38.5,503.4 32.5,503.4" fill="#347fb3"/>
<polygon points="27.0,508.9 33.0,508.9 33.0,513.0 27.0,513.0" fill="#347fb3"/>
<polygon points="42.7,502.9 46.2,502.9 46.2,505.6 42.7,505.6" fill="#347fb3"/>
<polygon points="18.7,537.1 20.4,536.0 32.5,536.5 32.5,542.0 19.8,542.0" fill="#347fb3"/>
<polygon points="8.3,542.6 9.9,541.5 16.0,542.0 16.0,547.5 9.4,547.5" fill="#347fb3"/>
<polygon points="27.5,555.5 29.2,554.4 38.5,555.0 38.5,560.7 28.6,560.7" fill="#347fb3"/>
<polygon points="13.8,559.6 15.4,558.5 23.4,559.1 23.4,565.4 14.9,565.4" fill="#347fb3"/>
<polygon points="6.9,562.4 8.5,561.3 10.5,561.8 10.5,567.3 8.0,567.3" fill="#347fb3"/>
<polygon points="30.3,572.0 31.9,570.9 35.2,571.5 35.2,579.2 31.4,579.2" fill="#347fb3"/>
<polygon points="35.2,581.7 36.9,580.6 39.1,581.1 39.1,583.9 36.3,583.9" fill="#347fb3"/>
<polygon points="38.5,543.1 40.2,542.0 43.5,542.6 43.5,547.5 39.6,547.5" fill="#347fb3"/>
<polygon points="27.5,522.5 29.2,521.4 32.5,521.9 32.5,525.5 28.6,525.5" fill="#347fb3"/>
<polygon points="34.4,528.0 36.1,526.9 38.0,527.4 38.0,532.4 35.5,532.4" fill="#347fb3"/>
<polygon points="23.4,663.7 25.0,662.6 34.4,663.1 34.4,671.9 24.5,671.9" fill="#347fb3"/>
<polygon points="15.1,719.8 16.8,718.7 21.5,719.3 21.5,725.0 16.2,725.0" fill="#347fb3"/>
<polygon points="0.0,595.4 1.7,594.3 1.7,594.9 1.7,602.6 1.1,602.6" fill="#347fb3"/>
<polygon points="44.0,548.6 45.7,547.5 47.3,548.1 47.3,550.8 45.1,550.8" fill="#347fb3"/>
<polygon points="44.0,562.4 45.7,561.3 47.3,561.8 47.3,564.0 45.1,564.0" fill="#347fb3"/>
<polygon points="347.5,702.1 356.0,702.1 356.0,708.9 347.5,708.9" fill="#347fb3"/>
<polygon points="392.5,703.2 397.2,703.2 397.2,708.2 392.5,708.2" fill="#347fb3"/>
<path d="M436.1 186.0 C436.8 184.7 437.8 180.5 440.2 178.0 C442.5 175.5 447.7 171.7 450.2 171.0 C452.7 170.4 454.7 171.9 455.2 174.0 C455.7 176.2 455.3 181.7 453.2 184.0 C451.0 186.4 445.0 187.7 442.2 188.0 C439.3 188.4 437.1 186.4 436.1 186.0Z" fill="#347fb3"/>
<path d="M492.6 202.1 C493.6 203.1 496.8 205.4 498.2 208.1 C499.7 210.7 500.1 214.7 501.2 218.1 C502.4 221.4 502.9 225.4 505.2 228.1 C507.6 230.8 513.1 232.6 515.2 234.1 C517.4 235.6 517.7 236.6 518.2 237.1" fill="none" stroke="#347fb3" stroke-width="3.2" stroke-linecap="round" stroke-linejoin="round"/>
<path d="M564.3 224.1 C565.1 223.8 567.6 221.4 569.3 222.1 C571.0 222.8 573.7 225.8 574.3 228.1 C575.0 230.4 574.5 235.1 573.3 236.1 C572.1 237.1 568.8 236.1 567.3 234.1 C565.8 232.1 564.8 225.8 564.3 224.1Z" fill="#347fb3"/>
<path d="M521.3 154.0 C523.1 157.0 528.4 165.7 532.3 172.0 C536.1 178.4 540.6 185.4 544.3 192.0 C548.0 198.7 551.5 205.7 554.3 212.1 C557.1 218.4 558.3 224.4 561.3 230.1 C564.3 235.8 565.8 240.1 572.3 246.1 C578.8 252.1 589.1 258.5 600.4 266.1 C611.6 273.8 631.2 285.0 640.0 292.2 C648.8 299.3 651.2 306.4 653.4 309.2" fill="none" stroke="#347fb3" stroke-width="5" stroke-linecap="round" stroke-linejoin="round"/>
<path d="M573.3 262.1 C574.5 262.4 578.2 262.6 580.3 263.7 C582.5 264.9 586.7 268.3 586.3 269.1 C586.0 269.9 580.5 269.7 578.3 268.5 C576.2 267.4 574.2 263.2 573.3 262.1Z" fill="#347fb3"/>
<path d="M580.3 282.2 C581.0 281.8 583.3 279.2 584.3 280.2 C585.3 281.2 586.8 286.5 586.3 288.2 C585.8 289.8 582.3 291.2 581.3 290.2 C580.3 289.2 580.5 283.5 580.3 282.2Z" fill="#347fb3"/>
<path d="M588.3 274.2 C591.0 275.8 599.0 281.2 604.4 284.2 C609.7 287.2 618.4 290.3 620.4 292.2 C622.4 294.0 619.7 295.8 616.4 295.2 C613.0 294.5 605.2 290.8 600.4 288.2 C595.5 285.5 589.3 281.5 587.3 279.2 C585.3 276.8 588.2 275.0 588.3 274.2Z" fill="#347fb3"/>
<path d="M572.3 274.2 C573.0 274.2 575.3 272.8 576.3 274.2 C577.3 275.5 578.8 280.8 578.3 282.2 C577.8 283.5 574.3 283.5 573.3 282.2 C572.3 280.8 572.5 275.5 572.3 274.2Z" fill="#347fb3"/>
<path d="M598.3 266.1 C600.4 267.1 606.0 269.5 610.4 272.1 C614.7 274.8 622.7 280.2 624.4 282.2 C626.0 284.2 623.4 285.2 620.4 284.2 C617.4 283.2 610.2 278.5 606.4 276.2 C602.5 273.8 598.7 271.8 597.3 270.1 C596.0 268.5 598.2 266.8 598.3 266.1Z" fill="#347fb3"/>
<polygon points="859.3,181.0 865.3,181.0 865.3,186.0 859.3,186.0" fill="#347fb3"/>
<polygon points="860.3,188.0 864.3,188.0 864.3,198.1 860.3,198.1" fill="#347fb3"/>
<polygon points="880.3,174.0 886.3,174.0 886.3,176.4 880.3,176.4" fill="#347fb3"/>
<polygon points="892.7,184.4 897.3,184.4 897.3,188.0 892.7,188.0" fill="#347fb3"/>
<path d="M640.0 164.0 C642.0 163.0 648.7 159.3 652.0 158.0 C655.4 156.7 658.7 156.3 660.0 156.0" fill="none" stroke="#2a6a8c" stroke-width="1.6" stroke-linecap="round" stroke-linejoin="round"/>
<polygon points="1042.1,242.1 1051.1,239.7 1052.1,243.1 1043.1,245.7" fill="#347fb3"/>
<polygon points="1231.4,273.1 1239.4,273.1 1239.4,276.2 1231.4,276.2" fill="#347fb3"/>
<polygon points="1236.4,267.1 1238.8,267.1 1238.8,270.1 1236.4,270.1" fill="#347fb3"/>
<polygon points="1187.3,154.0 1198.3,154.0 1198.3,161.0 1187.3,161.0" fill="#347fb3"/>
<path d="M996.1 154.0 C994.9 156.0 990.6 161.3 989.1 166.0 C987.6 170.7 987.1 177.4 987.1 182.0 C987.1 186.7 989.7 190.0 989.1 194.1 C988.4 198.1 984.1 204.4 983.1 206.5" fill="none" stroke="#347fb3" stroke-width="5" stroke-linecap="round" stroke-linejoin="round"/>
<path d="M579.0 311.0 C581.2 310.7 586.9 309.0 592.0 309.0 C597.2 309.0 604.1 309.2 610.1 311.0 C616.1 312.8 623.6 317.5 628.1 320.0 C632.6 322.5 636.1 324.0 637.1 326.0 C638.1 328.0 637.3 330.9 634.1 332.0 C630.9 333.2 623.1 333.9 618.1 333.0 C613.1 332.2 609.1 329.5 604.1 327.0 C599.0 324.5 592.2 320.7 588.0 318.0 C583.9 315.3 580.5 312.2 579.0 311.0Z" fill="#347fb3"/>
<path d="M572.0 332.0 C573.4 333.0 577.0 334.4 580.0 338.0 C583.0 341.7 586.2 349.4 590.0 354.1 C593.9 358.7 599.9 362.4 603.1 366.1 C606.2 369.7 609.6 373.9 609.1 376.1 C608.6 378.3 603.9 379.1 600.1 379.1 C596.2 379.1 590.0 377.9 586.0 376.1 C582.0 374.2 578.4 371.1 576.0 368.1 C573.7 365.1 572.7 364.1 572.0 358.1 C571.3 352.1 572.0 336.4 572.0 332.0Z" fill="#347fb3"/>
<path d="M630.1 345.0 C631.4 344.7 636.3 341.9 638.1 343.0 C639.9 344.2 641.4 348.2 641.1 352.1 C640.8 355.9 636.3 362.1 636.1 366.1 C635.9 370.1 638.4 373.1 640.1 376.1 C641.8 379.1 643.8 382.1 646.1 384.1 C648.4 386.1 652.1 386.1 654.1 388.1 C656.1 390.1 657.6 392.1 658.1 396.1 C658.6 400.1 658.8 410.1 657.1 412.1 C655.5 414.1 651.3 410.5 648.1 408.1 C644.9 405.8 640.3 401.8 638.1 398.1 C635.9 394.4 636.6 390.1 635.1 386.1 C633.6 382.1 630.8 377.1 629.1 374.1 C627.4 371.1 624.2 371.1 625.1 368.1 C625.9 365.1 633.3 359.9 634.1 356.1 C634.9 352.2 630.8 346.9 630.1 345.0Z" fill="#347fb3"/>
<polygon points="648.1,308.0 655.1,308.0 660.1,328.0 668.1,348.1 674.1,368.1 678.1,388.1 682.2,408.1 683.8,421.1 667.1,421.1 672.1,408.1 666.1,392.1 664.1,380.1 668.1,368.1 662.1,348.1 654.1,328.0" fill="#347fb3"/>
<polygon points="590.0,433.2 594.0,433.2 594.0,437.2 590.0,437.2" fill="#347fb3"/>
<path d="M986.1 350.1 C988.1 351.1 995.8 353.1 998.1 356.1 C1000.5 359.1 1000.1 362.7 1000.2 368.1 C1000.2 373.4 998.5 381.4 998.5 388.1 C998.5 394.8 999.1 401.5 1000.2 408.1 C1001.2 414.8 1003.4 421.5 1004.6 428.2 C1005.7 434.8 1006.7 442.5 1007.2 448.2 C1007.6 453.8 1007.3 459.7 1007.4 462.0" fill="none" stroke="#347fb3" stroke-width="3" stroke-linecap="round" stroke-linejoin="round"/>
<path d="M1106.3 442.6 C1106.8 442.4 1108.3 441.2 1109.3 441.8 C1110.3 442.4 1112.1 445.1 1112.3 446.2 C1112.5 447.2 1111.3 448.8 1110.3 448.2 C1109.3 447.6 1107.0 443.5 1106.3 442.6Z" fill="#347fb3"/>
<path d="M660.6 418.5 C662.3 417.8 668.1 414.3 671.0 414.3 C673.9 414.3 676.4 415.3 678.3 418.5 C680.2 421.6 682.2 427.6 682.4 433.0 C682.7 438.4 681.6 450.0 679.7 450.7 C677.8 451.4 673.8 440.8 671.0 437.2 C668.2 433.5 664.4 432.0 662.7 428.8 C661.0 425.7 661.0 420.2 660.6 418.5Z" fill="#347fb3"/>
<path d="M675.2 418.5 C676.3 422.6 679.6 435.4 681.8 443.4 C684.1 451.4 685.3 459.0 688.7 466.2 C692.1 473.5 696.8 480.1 702.2 487.0 C707.5 493.9 715.0 501.5 720.9 507.8 C726.7 514.0 730.9 519.8 737.5 524.4 C744.0 529.0 751.7 532.0 760.3 535.2 C769.0 538.4 781.1 541.4 789.4 543.5 C797.7 545.6 804.3 547.7 810.2 547.7 C816.1 547.6 820.2 546.0 824.7 543.1 C829.2 540.2 834.2 535.1 837.2 530.2 C840.1 525.4 839.6 517.9 842.4 514.0 C845.1 510.1 849.5 508.1 853.8 506.7 C858.1 505.4 862.8 504.2 868.3 506.1 C873.9 508.0 883.9 516.2 887.0 518.2" fill="none" stroke="#347fb3" stroke-width="6.5" stroke-linecap="round" stroke-linejoin="round"/>
<path d="M688.0 432.0 C688.1 435.9 687.3 448.8 688.7 455.9 C690.0 462.9 692.3 468.3 695.9 474.5 C699.6 480.8 708.0 490.1 710.5 493.2" fill="none" stroke="#347fb3" stroke-width="5" stroke-linecap="round" stroke-linejoin="round"/>
<polygon points="693.9,441.3 706.3,447.5 727.1,460.0 752.0,468.3 770.7,472.5 770.7,480.8 760.3,487.0 752.0,484.9 737.5,481.8 736.4,484.9 743.7,489.1 745.8,501.5 752.0,502.6 756.2,493.2 768.6,484.9 789.4,491.2 792.5,495.3 772.8,497.4 768.6,505.7 770.7,511.9 760.3,516.1 741.6,514.0 727.1,503.6 712.5,489.1 698.0,470.4 691.8,455.9" fill="#347fb3"/>
<polygon points="760.3,524.8 789.4,522.3 803.9,524.4 808.1,537.3 789.4,535.2 768.6,531.0" fill="#347fb3"/>
<path d="M880.0 516.1 C882.3 518.1 890.0 523.4 894.0 528.1 C898.0 532.8 899.7 539.9 904.0 544.1 C908.4 548.3 914.0 552.1 920.1 553.1 C926.1 554.1 933.4 551.9 940.1 550.1 C946.8 548.3 954.4 542.9 960.1 542.1 C965.8 541.3 969.4 542.1 974.1 545.1 C978.8 548.1 983.8 556.1 988.1 560.1 C992.5 564.1 995.5 567.6 1000.2 569.1 C1004.8 570.6 1010.8 570.3 1016.2 569.1 C1021.5 568.0 1026.5 563.6 1032.2 562.1 C1037.9 560.6 1043.9 560.1 1050.2 560.1 C1056.6 560.1 1063.9 562.1 1070.2 562.1 C1076.6 562.1 1083.3 558.8 1088.3 560.1 C1093.3 561.5 1096.3 565.8 1100.3 570.1 C1104.3 574.5 1109.0 581.1 1112.3 586.2 C1115.6 591.2 1118.1 595.2 1120.3 600.2 C1122.5 605.1 1124.5 613.4 1125.3 616.0" fill="none" stroke="#347fb3" stroke-width="8" stroke-linecap="round" stroke-linejoin="round"/>
<polygon points="928.1,546.1 946.1,540.1 954.1,542.1 946.1,546.1 936.1,551.1" fill="#347fb3"/>
<path d="M1004.2 462.0 C1003.8 465.3 1003.5 475.4 1002.2 482.0 C1000.8 488.7 996.5 495.4 996.1 502.1 C995.8 508.7 996.8 515.4 1000.2 522.1 C1003.5 528.8 1011.5 536.4 1016.2 542.1 C1020.8 547.8 1026.2 553.8 1028.2 556.1" fill="none" stroke="#347fb3" stroke-width="4" stroke-linecap="round" stroke-linejoin="round"/>
<polygon points="927.1,499.0 938.1,501.0 942.1,506.1 943.1,522.1 938.1,522.1 936.1,508.1 928.1,504.1" fill="#347fb3"/>
<path d="M1114.3 582.0 C1115.6 584.7 1120.8 592.3 1122.3 598.0 C1123.8 603.7 1124.3 610.4 1123.3 616.0 C1122.3 621.7 1120.1 627.1 1116.3 632.1 C1112.5 637.1 1106.3 641.7 1100.3 646.1 C1094.3 650.4 1085.9 654.1 1080.3 658.1 C1074.6 662.1 1069.9 665.4 1066.2 670.1 C1062.6 674.8 1060.6 680.1 1058.2 686.1 C1055.9 692.1 1053.6 698.5 1052.2 706.2 C1050.9 713.8 1050.5 727.8 1050.2 732.2" fill="none" stroke="#347fb3" stroke-width="8" stroke-linecap="round" stroke-linejoin="round"/>
<polygon points="1068.2,696.1 1071.2,697.1 1070.2,702.2 1068.2,701.1" fill="#347fb3"/>
<polygon points="919.6,714.2 922.5,711.4 924.9,714.6 922.9,717.4 920.1,717.4" fill="#f0421a"/>
</g>
<g id="L-stream">
<path d="M222.3 39.6 C230.0 43.1 252.0 56.0 268.3 60.1 C284.6 64.1 311.4 63.4 320.0 64.1" fill="none" stroke="#1c5672" stroke-width="0.8" stroke-linecap="round" stroke-linejoin="round"/>
<path d="M320.0 65.1 C324.0 64.9 334.7 68.1 344.0 64.1 C353.4 60.1 366.1 45.7 376.1 41.1 C386.1 36.4 393.4 36.9 404.1 36.4 C414.8 36.0 434.1 38.1 440.2 38.4" fill="none" stroke="#1c5672" stroke-width="0.9" stroke-linecap="round" stroke-linejoin="round"/>
<path d="M412.1 22.0 C415.5 22.7 425.8 26.4 432.1 26.0 C438.5 25.7 447.2 21.0 450.2 20.0" fill="none" stroke="#1c5672" stroke-width="0.9" stroke-linecap="round" stroke-linejoin="round"/>
<path d="M320.0 144.2 L338.0 154.0" fill="none" stroke="#1c5672" stroke-width="0.9" stroke-linecap="round" stroke-linejoin="round"/>
<path d="M806.2 63.1 C808.9 62.1 817.2 57.6 822.2 57.1 C827.2 56.6 827.6 60.7 836.2 60.1 C844.9 59.4 864.6 54.4 874.3 53.1 C884.0 51.7 890.3 50.9 894.3 52.1 C898.3 53.2 898.0 57.1 898.3 60.1 C898.7 63.1 899.2 68.3 896.3 70.1 C893.5 71.9 883.8 70.9 881.3 71.1" fill="none" stroke="#1c5672" stroke-width="0.9" stroke-linecap="round" stroke-linejoin="round"/>
<path d="M820.2 69.1 L836.2 60.1" fill="none" stroke="#1c5672" stroke-width="0.9" stroke-linecap="round" stroke-linejoin="round"/>
<path d="M806.2 90.1 C807.9 90.4 813.9 89.8 816.2 92.1 C818.6 94.5 817.9 103.1 820.2 104.1 C822.6 105.1 828.2 96.8 830.2 98.1 C832.2 99.5 824.2 107.1 832.2 112.1 C840.3 117.1 865.9 126.5 878.3 128.2 C890.6 129.8 896.0 125.2 906.3 122.2 C916.7 119.1 934.7 112.1 940.4 110.1" fill="none" stroke="#1c5672" stroke-width="0.9" stroke-linecap="round" stroke-linejoin="round"/>
<path d="M806.2 111.1 L832.2 112.1" fill="none" stroke="#1c5672" stroke-width="0.9" stroke-linecap="round" stroke-linejoin="round"/>
<path d="M1070.2 49.1 C1072.8 47.7 1080.2 42.2 1086.2 41.1 C1092.2 39.9 1100.2 42.4 1106.2 42.1 C1112.2 41.7 1116.9 38.9 1122.2 39.0 C1127.6 39.2 1131.6 42.6 1138.2 43.1 C1144.9 43.6 1154.9 43.9 1162.3 42.1 C1169.6 40.2 1179.0 33.7 1182.3 32.0" fill="none" stroke="#1c5672" stroke-width="0.9" stroke-linecap="round" stroke-linejoin="round"/>
<path d="M1040.1 46.1 C1042.5 46.4 1051.1 47.2 1054.1 48.1 C1057.1 48.9 1057.5 50.6 1058.1 51.1" fill="none" stroke="#1c5672" stroke-width="0.9" stroke-linecap="round" stroke-linejoin="round"/>
<path d="M614.4 158.0 C614.7 161.3 614.7 172.0 616.4 178.0 C618.0 184.0 623.7 189.4 624.4 194.1 C625.0 198.7 619.7 201.4 620.4 206.1 C621.0 210.7 627.1 219.4 628.4 222.1" fill="none" stroke="#1c5672" stroke-width="0.9" stroke-linecap="round" stroke-linejoin="round"/>
<path d="M518.2 237.1 L508.2 239.1" fill="none" stroke="#1c5672" stroke-width="1.5" stroke-linecap="round" stroke-linejoin="round"/>
<path d="M572.0 392.1 C576.0 394.1 588.7 400.1 596.0 404.1 C603.4 408.1 608.1 412.8 616.1 416.1 C624.1 419.5 636.1 423.5 644.1 424.1 C652.1 424.8 660.8 420.8 664.1 420.1" fill="none" stroke="#1c5672" stroke-width="0.9" stroke-linecap="round" stroke-linejoin="round"/>
<path d="M572.0 600.2 C574.7 597.2 575.4 587.0 588.0 582.2 C600.7 577.3 637.4 569.8 648.1 571.1 C658.8 572.5 649.4 586.3 652.1 590.2 C654.8 594.0 661.3 595.5 664.1 594.2 C667.0 592.8 664.8 584.5 669.1 582.2 C673.5 579.8 685.0 579.8 690.2 580.1 C695.3 580.5 691.8 582.5 700.2 584.2 C708.5 585.8 730.7 590.5 740.2 590.2 C749.7 589.8 750.2 584.2 757.2 582.2 C764.3 580.1 776.9 580.1 782.3 578.1 C787.6 576.1 788.3 575.1 789.3 570.1 C790.3 565.1 788.5 551.8 788.3 548.1" fill="none" stroke="#1c5672" stroke-width="1" stroke-linecap="round" stroke-linejoin="round"/>
<path d="M572.0 494.0 C575.4 497.4 585.4 506.7 592.0 514.1 C598.7 521.4 607.4 531.1 612.1 538.1 C616.7 545.1 618.7 553.1 620.1 556.1" fill="none" stroke="#1c5672" stroke-width="0.8" stroke-linecap="round" stroke-linejoin="round"/>
<path d="M789.4 547.2 L789.4 565.7" fill="none" stroke="#1c5672" stroke-width="0.9" stroke-linecap="round" stroke-linejoin="round"/>
<path d="M572.0 598.0 C574.7 597.0 585.0 594.7 588.0 592.0 C591.0 589.3 589.7 583.7 590.0 582.0" fill="none" stroke="#1c5672" stroke-width="0.9" stroke-linecap="round" stroke-linejoin="round"/>
<path d="M572.0 618.0 C575.0 616.0 587.4 610.0 590.0 606.0 C592.7 602.0 588.4 596.0 588.0 594.0" fill="none" stroke="#1c5672" stroke-width="0.9" stroke-linecap="round" stroke-linejoin="round"/>
</g>
<g id="L-minor">
<path d="M40.1 4.0 C43.4 5.3 57.1 9.0 60.1 12.0 C63.1 15.0 61.4 18.7 58.1 22.0 C54.7 25.4 45.7 28.0 40.1 32.0 C34.4 36.0 30.7 43.4 24.0 46.1 C17.4 48.7 4.0 47.7 0.0 48.1" fill="none" stroke="#121a12" stroke-width="1" stroke-linecap="round" stroke-linejoin="round"/>
<path d="M66.1 24.0 L68.1 60.1" fill="none" stroke="#121a12" stroke-width="1" stroke-linecap="round" stroke-linejoin="round"/>
<path d="M78.1 12.0 L79.1 50.1" fill="none" stroke="#121a12" stroke-width="1" stroke-linecap="round" stroke-linejoin="round"/>
<path d="M88.1 22.0 C88.4 27.0 88.1 47.1 90.1 52.1 C92.1 57.1 98.1 54.7 100.1 52.1 C102.1 49.4 101.8 38.7 102.1 36.0" fill="none" stroke="#121a12" stroke-width="1" stroke-linecap="round" stroke-linejoin="round"/>
<path d="M36.0 60.1 C41.1 58.1 61.1 53.1 66.1 48.1 C71.1 43.1 66.1 33.0 66.1 30.0" fill="none" stroke="#121a12" stroke-width="1" stroke-linecap="round" stroke-linejoin="round"/>
<path d="M40.1 70.1 L60.1 58.1" fill="none" stroke="#121a12" stroke-width="1" stroke-linecap="round" stroke-linejoin="round"/>
<path d="M34.0 104.1 C40.1 104.5 55.7 107.8 70.1 106.1 C84.4 104.5 111.8 96.1 120.2 94.1" fill="none" stroke="#121a12" stroke-width="1" stroke-linecap="round" stroke-linejoin="round"/>
<path d="M76.1 76.1 L120.2 72.1" fill="none" stroke="#121a12" stroke-width="1" stroke-linecap="round" stroke-linejoin="round"/>
<path d="M76.1 84.1 L120.2 80.1" fill="none" stroke="#121a12" stroke-width="1" stroke-linecap="round" stroke-linejoin="round"/>
<path d="M76.1 92.1 L120.2 88.1" fill="none" stroke="#121a12" stroke-width="1" stroke-linecap="round" stroke-linejoin="round"/>
<path d="M78.1 76.1 C78.4 84.1 71.8 116.8 80.1 124.2 C88.4 131.5 120.2 120.8 128.2 120.2" fill="none" stroke="#121a12" stroke-width="1" stroke-linecap="round" stroke-linejoin="round"/>
<path d="M92.1 76.1 L94.1 88.1" fill="none" stroke="#121a12" stroke-width="1" stroke-linecap="round" stroke-linejoin="round"/>
<path d="M108.1 74.1 L109.1 86.1" fill="none" stroke="#121a12" stroke-width="1" stroke-linecap="round" stroke-linejoin="round"/>
<path d="M36.0 112.1 C41.1 112.5 60.4 112.5 66.1 114.1 C71.8 115.8 71.8 120.5 70.1 122.2 C68.4 123.8 58.4 123.8 56.1 124.2" fill="none" stroke="#121a12" stroke-width="1" stroke-linecap="round" stroke-linejoin="round"/>
<path d="M88.1 104.1 L89.1 120.2" fill="none" stroke="#121a12" stroke-width="1" stroke-linecap="round" stroke-linejoin="round"/>
<path d="M100.1 100.1 L101.1 118.1" fill="none" stroke="#121a12" stroke-width="1" stroke-linecap="round" stroke-linejoin="round"/>
<path d="M112.1 96.1 L113.1 116.1" fill="none" stroke="#121a12" stroke-width="1" stroke-linecap="round" stroke-linejoin="round"/>
<path d="M12.0 120.2 L26.0 118.1" fill="none" stroke="#121a12" stroke-width="1" stroke-linecap="round" stroke-linejoin="round"/>
<path d="M4.0 92.1 L28.0 90.1" fill="none" stroke="#121a12" stroke-width="1" stroke-linecap="round" stroke-linejoin="round"/>
<path d="M8.0 72.1 L10.0 104.1" fill="none" stroke="#121a12" stroke-width="1" stroke-linecap="round" stroke-linejoin="round"/>
<path d="M20.0 80.1 L21.0 100.1" fill="none" stroke="#121a12" stroke-width="1" stroke-linecap="round" stroke-linejoin="round"/>
<path d="M60.1 136.2 C62.4 135.5 71.4 129.2 74.1 132.2 C76.8 135.1 75.8 150.4 76.1 154.0" fill="none" stroke="#121a12" stroke-width="1" stroke-linecap="round" stroke-linejoin="round"/>
<path d="M84.1 140.2 L128.2 136.2" fill="none" stroke="#121a12" stroke-width="1" stroke-linecap="round" stroke-linejoin="round"/>
<path d="M88.1 148.2 L128.2 146.2" fill="none" stroke="#121a12" stroke-width="1" stroke-linecap="round" stroke-linejoin="round"/>
<path d="M150.2 8.0 C160.2 7.7 199.2 4.0 210.3 6.0 C221.3 8.0 221.3 16.7 216.3 20.0 C211.3 23.4 188.2 22.7 180.2 26.0 C172.2 29.4 170.2 37.7 168.2 40.1" fill="none" stroke="#121a12" stroke-width="1" stroke-linecap="round" stroke-linejoin="round"/>
<path d="M152.2 16.0 L208.3 14.0" fill="none" stroke="#121a12" stroke-width="1" stroke-linecap="round" stroke-linejoin="round"/>
<path d="M160.2 26.0 C162.2 27.7 165.5 31.0 172.2 36.0 C178.9 41.1 195.6 52.7 200.3 56.1" fill="none" stroke="#121a12" stroke-width="1" stroke-linecap="round" stroke-linejoin="round"/>
<path d="M180.2 26.0 C186.2 29.0 210.1 39.4 216.3 44.1 C222.4 48.7 217.1 52.4 217.3 54.1" fill="none" stroke="#121a12" stroke-width="1" stroke-linecap="round" stroke-linejoin="round"/>
<path d="M192.2 0.0 L194.2 16.0" fill="none" stroke="#121a12" stroke-width="1" stroke-linecap="round" stroke-linejoin="round"/>
<path d="M208.3 0.0 L210.3 12.0" fill="none" stroke="#121a12" stroke-width="1" stroke-linecap="round" stroke-linejoin="round"/>
<path d="M128.2 82.1 C135.8 81.4 164.9 78.6 174.2 78.1 C183.6 77.6 181.7 77.8 184.2 79.1 C186.7 80.4 187.4 73.6 189.2 86.1 C191.1 98.6 194.2 142.7 195.2 154.0" fill="none" stroke="#121a12" stroke-width="1" stroke-linecap="round" stroke-linejoin="round"/>
<path d="M163.2 79.1 L171.2 154.0" fill="none" stroke="#121a12" stroke-width="1" stroke-linecap="round" stroke-linejoin="round"/>
<path d="M130.2 88.1 C133.2 87.8 145.0 83.4 148.2 86.1 C151.4 88.8 152.2 101.0 149.2 104.1 C146.2 107.3 133.3 105.0 130.2 105.1" fill="none" stroke="#121a12" stroke-width="1" stroke-linecap="round" stroke-linejoin="round"/>
<path d="M136.2 87.1 L136.8 100.1" fill="none" stroke="#121a12" stroke-width="1" stroke-linecap="round" stroke-linejoin="round"/>
<path d="M292.4 12.0 L320.0 10.0" fill="none" stroke="#121a12" stroke-width="1" stroke-linecap="round" stroke-linejoin="round"/>
<path d="M294.4 24.0 L320.0 22.0" fill="none" stroke="#121a12" stroke-width="1" stroke-linecap="round" stroke-linejoin="round"/>
<path d="M304.4 0.0 L306.4 24.0" fill="none" stroke="#121a12" stroke-width="1" stroke-linecap="round" stroke-linejoin="round"/>
<path d="M296.4 40.1 L320.0 36.0" fill="none" stroke="#121a12" stroke-width="1" stroke-linecap="round" stroke-linejoin="round"/>
<path d="M308.4 26.0 L312.4 56.1" fill="none" stroke="#121a12" stroke-width="1" stroke-linecap="round" stroke-linejoin="round"/>
<path d="M320.0 16.0 C322.0 14.4 328.0 7.3 332.0 6.0 C336.0 4.7 341.7 5.7 344.0 8.0 C346.4 10.3 345.7 18.0 346.0 20.0" fill="none" stroke="#121a12" stroke-width="1" stroke-linecap="round" stroke-linejoin="round"/>
<path d="M320.0 32.0 C326.7 30.0 346.0 23.0 360.1 20.0 C374.1 17.0 396.8 15.0 404.1 14.0" fill="none" stroke="#121a12" stroke-width="1" stroke-linecap="round" stroke-linejoin="round"/>
<path d="M360.1 20.0 C361.1 23.4 368.7 34.7 366.1 40.1 C363.4 45.4 351.7 49.7 344.0 52.1 C336.4 54.4 324.0 53.7 320.0 54.1" fill="none" stroke="#121a12" stroke-width="1" stroke-linecap="round" stroke-linejoin="round"/>
<path d="M366.1 40.1 L386.1 36.0" fill="none" stroke="#121a12" stroke-width="1" stroke-linecap="round" stroke-linejoin="round"/>
<path d="M332.0 40.1 L336.0 56.1" fill="none" stroke="#121a12" stroke-width="1" stroke-linecap="round" stroke-linejoin="round"/>
<path d="M348.0 26.0 L352.0 36.0" fill="none" stroke="#121a12" stroke-width="1" stroke-linecap="round" stroke-linejoin="round"/>
<path d="M378.1 12.0 C378.4 13.7 375.7 20.7 380.1 22.0 C384.4 23.4 400.1 20.4 404.1 20.0" fill="none" stroke="#121a12" stroke-width="1" stroke-linecap="round" stroke-linejoin="round"/>
<path d="M320.0 80.1 C323.0 79.4 332.0 78.4 338.0 76.1 C344.0 73.8 350.4 70.4 356.0 66.1 C361.7 61.7 369.4 52.7 372.1 50.1" fill="none" stroke="#121a12" stroke-width="1" stroke-linecap="round" stroke-linejoin="round"/>
<path d="M334.0 88.1 C337.7 86.8 350.4 83.4 356.0 80.1 C361.7 76.8 366.1 70.1 368.1 68.1" fill="none" stroke="#121a12" stroke-width="1" stroke-linecap="round" stroke-linejoin="round"/>
<path d="M344.0 98.1 C347.0 95.8 355.0 87.4 362.1 84.1 C369.1 80.8 382.1 79.1 386.1 78.1" fill="none" stroke="#121a12" stroke-width="1" stroke-linecap="round" stroke-linejoin="round"/>
<path d="M380.1 52.1 C380.4 56.1 379.4 72.8 382.1 76.1 C384.7 79.4 393.8 72.8 396.1 72.1" fill="none" stroke="#121a12" stroke-width="1" stroke-linecap="round" stroke-linejoin="round"/>
<path d="M320.0 96.1 L332.0 92.1" fill="none" stroke="#121a12" stroke-width="1" stroke-linecap="round" stroke-linejoin="round"/>
<path d="M350.0 46.1 L362.1 66.1" fill="none" stroke="#121a12" stroke-width="1" stroke-linecap="round" stroke-linejoin="round"/>
<path d="M482.2 12.0 L534.3 14.0" fill="none" stroke="#121a12" stroke-width="1" stroke-linecap="round" stroke-linejoin="round"/>
<path d="M482.2 22.0 L534.3 24.0" fill="none" stroke="#121a12" stroke-width="1" stroke-linecap="round" stroke-linejoin="round"/>
<path d="M492.2 46.1 L572.3 50.1" fill="none" stroke="#121a12" stroke-width="1" stroke-linecap="round" stroke-linejoin="round"/>
<path d="M492.2 58.1 L571.9 62.1" fill="none" stroke="#121a12" stroke-width="1" stroke-linecap="round" stroke-linejoin="round"/>
<path d="M500.2 70.1 L571.3 74.1" fill="none" stroke="#121a12" stroke-width="1" stroke-linecap="round" stroke-linejoin="round"/>
<path d="M506.2 84.1 L570.3 86.1" fill="none" stroke="#121a12" stroke-width="1" stroke-linecap="round" stroke-linejoin="round"/>
<path d="M508.2 50.1 L509.2 86.1" fill="none" stroke="#121a12" stroke-width="1" stroke-linecap="round" stroke-linejoin="round"/>
<path d="M548.3 38.0 L546.3 86.1" fill="none" stroke="#121a12" stroke-width="1" stroke-linecap="round" stroke-linejoin="round"/>
<path d="M558.3 38.0 L556.3 96.1" fill="none" stroke="#121a12" stroke-width="1" stroke-linecap="round" stroke-linejoin="round"/>
<path d="M520.3 108.1 L562.3 112.1" fill="none" stroke="#121a12" stroke-width="1" stroke-linecap="round" stroke-linejoin="round"/>
<path d="M524.3 120.2 L561.3 124.2" fill="none" stroke="#121a12" stroke-width="1" stroke-linecap="round" stroke-linejoin="round"/>
<path d="M530.3 132.2 L560.3 136.2" fill="none" stroke="#121a12" stroke-width="1" stroke-linecap="round" stroke-linejoin="round"/>
<path d="M530.3 100.1 C529.3 103.5 522.6 111.2 524.3 120.2 C525.9 129.1 537.6 148.4 540.3 154.0" fill="none" stroke="#121a12" stroke-width="1" stroke-linecap="round" stroke-linejoin="round"/>
<path d="M538.3 8.0 L620.4 10.0" fill="none" stroke="#121a12" stroke-width="1" stroke-linecap="round" stroke-linejoin="round"/>
<path d="M538.3 20.0 L624.4 22.0" fill="none" stroke="#121a12" stroke-width="1" stroke-linecap="round" stroke-linejoin="round"/>
<path d="M572.3 0.0 L572.7 36.0" fill="none" stroke="#121a12" stroke-width="1" stroke-linecap="round" stroke-linejoin="round"/>
<path d="M586.3 38.0 L584.3 100.1" fill="none" stroke="#121a12" stroke-width="1" stroke-linecap="round" stroke-linejoin="round"/>
<path d="M612.4 38.0 L610.4 102.1" fill="none" stroke="#121a12" stroke-width="1" stroke-linecap="round" stroke-linejoin="round"/>
<path d="M632.4 40.1 L631.4 102.1" fill="none" stroke="#121a12" stroke-width="1" stroke-linecap="round" stroke-linejoin="round"/>
<path d="M574.3 50.1 L640.0 51.1" fill="none" stroke="#121a12" stroke-width="1" stroke-linecap="round" stroke-linejoin="round"/>
<path d="M573.3 62.1 L640.0 63.1" fill="none" stroke="#121a12" stroke-width="1" stroke-linecap="round" stroke-linejoin="round"/>
<path d="M572.7 74.1 L640.0 75.1" fill="none" stroke="#121a12" stroke-width="1" stroke-linecap="round" stroke-linejoin="round"/>
<path d="M571.9 86.1 L626.4 86.7" fill="none" stroke="#121a12" stroke-width="1" stroke-linecap="round" stroke-linejoin="round"/>
<path d="M568.3 112.1 L640.0 115.1" fill="none" stroke="#121a12" stroke-width="1" stroke-linecap="round" stroke-linejoin="round"/>
<path d="M566.3 124.2 L640.0 128.2" fill="none" stroke="#121a12" stroke-width="1" stroke-linecap="round" stroke-linejoin="round"/>
<path d="M596.3 136.2 L640.0 138.2" fill="none" stroke="#121a12" stroke-width="1" stroke-linecap="round" stroke-linejoin="round"/>
<path d="M610.4 104.1 L609.4 144.2" fill="none" stroke="#121a12" stroke-width="1" stroke-linecap="round" stroke-linejoin="round"/>
<path d="M628.4 105.1 L627.4 146.2" fill="none" stroke="#121a12" stroke-width="1" stroke-linecap="round" stroke-linejoin="round"/>
<path d="M744.1 0.0 L743.5 41.1" fill="none" stroke="#121a12" stroke-width="1" stroke-linecap="round" stroke-linejoin="round"/>
<path d="M752.1 0.0 L751.5 41.1" fill="none" stroke="#121a12" stroke-width="1" stroke-linecap="round" stroke-linejoin="round"/>
<path d="M760.2 0.0 L759.5 41.1" fill="none" stroke="#121a12" stroke-width="1" stroke-linecap="round" stroke-linejoin="round"/>
<path d="M769.2 0.0 L768.6 41.1" fill="none" stroke="#121a12" stroke-width="1" stroke-linecap="round" stroke-linejoin="round"/>
<path d="M778.2 0.0 L777.6 41.1" fill="none" stroke="#121a12" stroke-width="1" stroke-linecap="round" stroke-linejoin="round"/>
<path d="M787.2 0.0 L786.6 41.1" fill="none" stroke="#121a12" stroke-width="1" stroke-linecap="round" stroke-linejoin="round"/>
<path d="M796.2 0.0 L795.6 41.1" fill="none" stroke="#121a12" stroke-width="1" stroke-linecap="round" stroke-linejoin="round"/>
<path d="M740.1 45.1 L739.1 86.1" fill="none" stroke="#121a12" stroke-width="1" stroke-linecap="round" stroke-linejoin="round"/>
<path d="M748.1 45.1 L747.1 86.1" fill="none" stroke="#121a12" stroke-width="1" stroke-linecap="round" stroke-linejoin="round"/>
<path d="M757.1 45.1 L756.1 86.1" fill="none" stroke="#121a12" stroke-width="1" stroke-linecap="round" stroke-linejoin="round"/>
<path d="M766.2 45.1 L765.2 86.1" fill="none" stroke="#121a12" stroke-width="1" stroke-linecap="round" stroke-linejoin="round"/>
<path d="M775.2 45.1 L774.2 86.1" fill="none" stroke="#121a12" stroke-width="1" stroke-linecap="round" stroke-linejoin="round"/>
<path d="M784.2 45.1 L783.2 86.1" fill="none" stroke="#121a12" stroke-width="1" stroke-linecap="round" stroke-linejoin="round"/>
<path d="M793.2 45.1 L792.2 86.1" fill="none" stroke="#121a12" stroke-width="1" stroke-linecap="round" stroke-linejoin="round"/>
<path d="M736.1 120.2 L734.5 152.2" fill="none" stroke="#121a12" stroke-width="1" stroke-linecap="round" stroke-linejoin="round"/>
<path d="M746.1 120.2 L744.5 152.2" fill="none" stroke="#121a12" stroke-width="1" stroke-linecap="round" stroke-linejoin="round"/>
<path d="M756.1 120.2 L754.5 152.2" fill="none" stroke="#121a12" stroke-width="1" stroke-linecap="round" stroke-linejoin="round"/>
<path d="M765.2 120.2 L763.6 152.2" fill="none" stroke="#121a12" stroke-width="1" stroke-linecap="round" stroke-linejoin="round"/>
<path d="M774.2 120.2 L772.6 152.2" fill="none" stroke="#121a12" stroke-width="1" stroke-linecap="round" stroke-linejoin="round"/>
<path d="M784.2 120.2 L782.6 152.2" fill="none" stroke="#121a12" stroke-width="1" stroke-linecap="round" stroke-linejoin="round"/>
<path d="M794.2 120.2 L792.6 152.2" fill="none" stroke="#121a12" stroke-width="1" stroke-linecap="round" stroke-linejoin="round"/>
<path d="M652.0 109.1 L651.0 148.2" fill="none" stroke="#121a12" stroke-width="1" stroke-linecap="round" stroke-linejoin="round"/>
<path d="M662.0 109.1 L661.0 148.2" fill="none" stroke="#121a12" stroke-width="1" stroke-linecap="round" stroke-linejoin="round"/>
<path d="M672.0 109.1 L671.0 148.2" fill="none" stroke="#121a12" stroke-width="1" stroke-linecap="round" stroke-linejoin="round"/>
<path d="M682.1 109.1 L681.1 148.2" fill="none" stroke="#121a12" stroke-width="1" stroke-linecap="round" stroke-linejoin="round"/>
<path d="M692.1 109.1 L691.1 148.2" fill="none" stroke="#121a12" stroke-width="1" stroke-linecap="round" stroke-linejoin="round"/>
<path d="M702.1 109.1 L701.1 148.2" fill="none" stroke="#121a12" stroke-width="1" stroke-linecap="round" stroke-linejoin="round"/>
<path d="M646.0 12.0 L716.1 9.0" fill="none" stroke="#121a12" stroke-width="1" stroke-linecap="round" stroke-linejoin="round"/>
<path d="M646.0 22.0 L710.1 20.0" fill="none" stroke="#121a12" stroke-width="1" stroke-linecap="round" stroke-linejoin="round"/>
<path d="M646.0 32.0 L702.1 33.0" fill="none" stroke="#121a12" stroke-width="1" stroke-linecap="round" stroke-linejoin="round"/>
<path d="M646.0 52.1 L690.1 54.1" fill="none" stroke="#121a12" stroke-width="1" stroke-linecap="round" stroke-linejoin="round"/>
<path d="M646.0 60.1 L686.1 61.1" fill="none" stroke="#121a12" stroke-width="1" stroke-linecap="round" stroke-linejoin="round"/>
<path d="M666.0 0.0 L665.6 40.1" fill="none" stroke="#121a12" stroke-width="1" stroke-linecap="round" stroke-linejoin="round"/>
<path d="M688.1 0.0 L687.7 40.1" fill="none" stroke="#121a12" stroke-width="1" stroke-linecap="round" stroke-linejoin="round"/>
<path d="M706.1 8.0 L705.1 40.1" fill="none" stroke="#121a12" stroke-width="1" stroke-linecap="round" stroke-linejoin="round"/>
<path d="M700.1 46.1 L732.1 47.1" fill="none" stroke="#121a12" stroke-width="1" stroke-linecap="round" stroke-linejoin="round"/>
<path d="M696.1 58.1 L732.1 60.1" fill="none" stroke="#121a12" stroke-width="1" stroke-linecap="round" stroke-linejoin="round"/>
<path d="M690.1 48.1 L690.1 70.1" fill="none" stroke="#121a12" stroke-width="1" stroke-linecap="round" stroke-linejoin="round"/>
<path d="M718.1 46.1 L717.1 82.1" fill="none" stroke="#121a12" stroke-width="1" stroke-linecap="round" stroke-linejoin="round"/>
<path d="M735.1 14.0 L804.2 12.0" fill="none" stroke="#121a12" stroke-width="1" stroke-linecap="round" stroke-linejoin="round"/>
<path d="M735.1 26.0 L804.2 25.0" fill="none" stroke="#121a12" stroke-width="1" stroke-linecap="round" stroke-linejoin="round"/>
<path d="M735.1 60.1 L804.2 61.1" fill="none" stroke="#121a12" stroke-width="1" stroke-linecap="round" stroke-linejoin="round"/>
<path d="M735.1 73.1 L804.2 74.1" fill="none" stroke="#121a12" stroke-width="1" stroke-linecap="round" stroke-linejoin="round"/>
<path d="M734.1 100.1 L804.2 102.1" fill="none" stroke="#121a12" stroke-width="1" stroke-linecap="round" stroke-linejoin="round"/>
<path d="M770.2 112.1 L804.2 111.1" fill="none" stroke="#121a12" stroke-width="1" stroke-linecap="round" stroke-linejoin="round"/>
<path d="M734.1 136.2 L804.2 138.2" fill="none" stroke="#121a12" stroke-width="1" stroke-linecap="round" stroke-linejoin="round"/>
<path d="M808.2 12.0 L840.3 11.0" fill="none" stroke="#121a12" stroke-width="1" stroke-linecap="round" stroke-linejoin="round"/>
<path d="M808.2 24.0 L856.3 25.0" fill="none" stroke="#121a12" stroke-width="1" stroke-linecap="round" stroke-linejoin="round"/>
<path d="M812.2 36.0 L852.3 37.0" fill="none" stroke="#121a12" stroke-width="1" stroke-linecap="round" stroke-linejoin="round"/>
<path d="M844.3 6.0 L845.3 36.0" fill="none" stroke="#121a12" stroke-width="1" stroke-linecap="round" stroke-linejoin="round"/>
<path d="M840.3 0.0 C846.6 2.0 870.6 8.0 878.3 12.0 C886.0 16.0 885.0 22.0 886.3 24.0" fill="none" stroke="#121a12" stroke-width="1" stroke-linecap="round" stroke-linejoin="round"/>
<path d="M852.3 12.0 L880.3 20.0" fill="none" stroke="#121a12" stroke-width="1" stroke-linecap="round" stroke-linejoin="round"/>
<path d="M900.3 12.0 L960.0 14.0" fill="none" stroke="#121a12" stroke-width="1" stroke-linecap="round" stroke-linejoin="round"/>
<path d="M904.3 24.0 L960.0 26.0" fill="none" stroke="#121a12" stroke-width="1" stroke-linecap="round" stroke-linejoin="round"/>
<path d="M924.4 0.0 L925.4 24.0" fill="none" stroke="#121a12" stroke-width="1" stroke-linecap="round" stroke-linejoin="round"/>
<path d="M952.4 0.0 L953.4 48.1" fill="none" stroke="#121a12" stroke-width="1" stroke-linecap="round" stroke-linejoin="round"/>
<path d="M910.3 36.0 L960.0 38.0" fill="none" stroke="#121a12" stroke-width="1" stroke-linecap="round" stroke-linejoin="round"/>
<path d="M940.4 66.1 L960.0 67.1" fill="none" stroke="#121a12" stroke-width="1" stroke-linecap="round" stroke-linejoin="round"/>
<path d="M944.4 84.1 L960.0 85.1" fill="none" stroke="#121a12" stroke-width="1" stroke-linecap="round" stroke-linejoin="round"/>
<path d="M946.4 120.2 L960.0 118.1" fill="none" stroke="#121a12" stroke-width="1" stroke-linecap="round" stroke-linejoin="round"/>
<path d="M949.4 140.2 L960.0 138.2" fill="none" stroke="#121a12" stroke-width="1" stroke-linecap="round" stroke-linejoin="round"/>
<path d="M1008.1 14.0 L1050.1 12.0" fill="none" stroke="#121a12" stroke-width="1" stroke-linecap="round" stroke-linejoin="round"/>
<path d="M1062.2 20.0 L1186.3 18.0" fill="none" stroke="#121a12" stroke-width="1" stroke-linecap="round" stroke-linejoin="round"/>
<path d="M1066.2 30.0 L1134.2 28.0" fill="none" stroke="#121a12" stroke-width="1" stroke-linecap="round" stroke-linejoin="round"/>
<path d="M1082.2 66.1 L1134.2 66.1" fill="none" stroke="#121a12" stroke-width="1" stroke-linecap="round" stroke-linejoin="round"/>
<path d="M1072.2 96.1 L1188.3 94.1" fill="none" stroke="#121a12" stroke-width="1" stroke-linecap="round" stroke-linejoin="round"/>
<path d="M1074.2 108.1 L1188.3 106.1" fill="none" stroke="#121a12" stroke-width="1" stroke-linecap="round" stroke-linejoin="round"/>
<path d="M1078.2 120.2 L1187.3 120.2" fill="none" stroke="#121a12" stroke-width="1" stroke-linecap="round" stroke-linejoin="round"/>
<path d="M1080.2 132.2 L1186.3 134.2" fill="none" stroke="#121a12" stroke-width="1" stroke-linecap="round" stroke-linejoin="round"/>
<path d="M1082.2 144.2 L1186.3 146.2" fill="none" stroke="#121a12" stroke-width="1" stroke-linecap="round" stroke-linejoin="round"/>
<path d="M1070.2 0.0 L1082.2 66.1" fill="none" stroke="#121a12" stroke-width="1" stroke-linecap="round" stroke-linejoin="round"/>
<path d="M1086.2 0.0 L1094.2 56.1" fill="none" stroke="#121a12" stroke-width="1" stroke-linecap="round" stroke-linejoin="round"/>
<path d="M1102.2 0.0 L1108.2 34.0" fill="none" stroke="#121a12" stroke-width="1" stroke-linecap="round" stroke-linejoin="round"/>
<path d="M1118.2 0.0 L1119.2 34.0" fill="none" stroke="#121a12" stroke-width="1" stroke-linecap="round" stroke-linejoin="round"/>
<path d="M1154.3 0.0 L1152.3 76.1" fill="none" stroke="#121a12" stroke-width="1" stroke-linecap="round" stroke-linejoin="round"/>
<path d="M1170.3 0.0 L1169.3 78.1" fill="none" stroke="#121a12" stroke-width="1" stroke-linecap="round" stroke-linejoin="round"/>
<path d="M1094.2 58.1 L1102.2 154.0" fill="none" stroke="#121a12" stroke-width="1" stroke-linecap="round" stroke-linejoin="round"/>
<path d="M1112.2 78.1 L1116.2 154.0" fill="none" stroke="#121a12" stroke-width="1" stroke-linecap="round" stroke-linejoin="round"/>
<path d="M1182.3 82.1 L1180.3 154.0" fill="none" stroke="#121a12" stroke-width="1" stroke-linecap="round" stroke-linejoin="round"/>
<path d="M1190.3 24.0 L1218.3 22.0" fill="none" stroke="#121a12" stroke-width="1" stroke-linecap="round" stroke-linejoin="round"/>
<path d="M1192.3 50.1 L1262.0 52.1" fill="none" stroke="#121a12" stroke-width="1" stroke-linecap="round" stroke-linejoin="round"/>
<path d="M1194.3 66.1 L1262.0 70.1" fill="none" stroke="#121a12" stroke-width="1" stroke-linecap="round" stroke-linejoin="round"/>
<path d="M1202.3 0.0 L1204.3 14.0" fill="none" stroke="#121a12" stroke-width="1" stroke-linecap="round" stroke-linejoin="round"/>
<path d="M1234.4 0.0 L1236.4 40.1" fill="none" stroke="#121a12" stroke-width="1" stroke-linecap="round" stroke-linejoin="round"/>
<path d="M0.0 166.0 C3.3 165.7 15.4 162.7 20.0 164.0 C24.7 165.3 26.7 172.4 28.0 174.0" fill="none" stroke="#121a12" stroke-width="1" stroke-linecap="round" stroke-linejoin="round"/>
<path d="M0.0 200.1 C3.3 201.1 15.4 202.7 20.0 206.1 C24.7 209.4 26.7 217.7 28.0 220.1" fill="none" stroke="#121a12" stroke-width="1" stroke-linecap="round" stroke-linejoin="round"/>
<path d="M4.0 214.1 C6.7 214.4 17.0 214.4 20.0 216.1 C23.0 217.7 24.7 222.8 22.0 224.1 C19.4 225.4 7.0 225.8 4.0 224.1 C1.0 222.4 4.0 215.7 4.0 214.1" fill="none" stroke="#121a12" stroke-width="1" stroke-linecap="round" stroke-linejoin="round"/>
<path d="M8.0 230.1 C11.0 230.4 23.0 230.1 26.0 232.1 C29.0 234.1 29.0 240.4 26.0 242.1 C23.0 243.8 11.0 244.1 8.0 242.1 C5.0 240.1 8.0 232.1 8.0 230.1" fill="none" stroke="#121a12" stroke-width="1" stroke-linecap="round" stroke-linejoin="round"/>
<path d="M0.0 250.1 L34.0 252.1" fill="none" stroke="#121a12" stroke-width="1" stroke-linecap="round" stroke-linejoin="round"/>
<path d="M0.0 266.1 L36.0 264.1" fill="none" stroke="#121a12" stroke-width="1" stroke-linecap="round" stroke-linejoin="round"/>
<path d="M12.0 274.2 L38.0 278.2" fill="none" stroke="#121a12" stroke-width="1" stroke-linecap="round" stroke-linejoin="round"/>
<path d="M52.1 154.0 C53.4 156.0 54.7 163.7 60.1 166.0 C65.4 168.4 79.8 170.0 84.1 168.0 C88.4 166.0 85.8 156.3 86.1 154.0" fill="none" stroke="#121a12" stroke-width="1" stroke-linecap="round" stroke-linejoin="round"/>
<path d="M52.1 174.0 C55.1 173.7 66.8 170.0 70.1 172.0 C73.4 174.0 71.8 183.7 72.1 186.0" fill="none" stroke="#121a12" stroke-width="1" stroke-linecap="round" stroke-linejoin="round"/>
<path d="M86.1 174.0 C88.4 174.4 97.1 171.0 100.1 176.0 C103.1 181.0 103.5 199.4 104.1 204.1" fill="none" stroke="#121a12" stroke-width="1" stroke-linecap="round" stroke-linejoin="round"/>
<path d="M56.1 192.0 C56.4 196.7 55.1 215.1 58.1 220.1 C61.1 225.1 71.1 225.4 74.1 222.1 C77.1 218.7 75.8 203.7 76.1 200.1" fill="none" stroke="#121a12" stroke-width="1" stroke-linecap="round" stroke-linejoin="round"/>
<path d="M84.1 202.1 C85.1 204.7 85.4 215.1 90.1 218.1 C94.8 221.1 108.5 219.7 112.1 220.1" fill="none" stroke="#121a12" stroke-width="1" stroke-linecap="round" stroke-linejoin="round"/>
<path d="M96.1 206.1 C98.8 205.7 109.1 202.7 112.1 204.1 C115.1 205.4 113.8 212.4 114.1 214.1" fill="none" stroke="#121a12" stroke-width="1" stroke-linecap="round" stroke-linejoin="round"/>
<path d="M118.1 200.1 C120.5 200.4 130.2 200.4 132.2 202.1 C134.2 203.7 132.5 209.1 130.2 210.1 C127.8 211.1 120.2 208.4 118.1 208.1" fill="none" stroke="#121a12" stroke-width="1" stroke-linecap="round" stroke-linejoin="round"/>
<path d="M120.2 168.0 C122.2 168.4 130.5 168.0 132.2 170.0 C133.8 172.0 132.2 178.7 130.2 180.0 C128.2 181.4 121.8 180.0 120.2 178.0 C118.5 176.0 120.2 169.7 120.2 168.0" fill="none" stroke="#121a12" stroke-width="1" stroke-linecap="round" stroke-linejoin="round"/>
<path d="M100.1 218.1 C106.1 217.7 129.8 213.4 136.2 216.1 C142.5 218.7 137.8 231.1 138.2 234.1" fill="none" stroke="#121a12" stroke-width="1" stroke-linecap="round" stroke-linejoin="round"/>
<path d="M48.1 226.1 C51.1 225.8 62.7 222.1 66.1 224.1 C69.4 226.1 67.8 235.8 68.1 238.1" fill="none" stroke="#121a12" stroke-width="1" stroke-linecap="round" stroke-linejoin="round"/>
<path d="M148.2 228.1 C150.9 227.8 161.2 224.1 164.2 226.1 C167.2 228.1 165.9 237.8 166.2 240.1" fill="none" stroke="#121a12" stroke-width="1" stroke-linecap="round" stroke-linejoin="round"/>
<path d="M176.2 154.0 L174.2 192.0" fill="none" stroke="#121a12" stroke-width="1" stroke-linecap="round" stroke-linejoin="round"/>
<path d="M196.2 154.0 L195.2 194.1" fill="none" stroke="#121a12" stroke-width="1" stroke-linecap="round" stroke-linejoin="round"/>
<path d="M254.3 154.0 L255.3 196.1" fill="none" stroke="#121a12" stroke-width="1" stroke-linecap="round" stroke-linejoin="round"/>
<path d="M195.2 212.1 L176.2 240.1" fill="none" stroke="#121a12" stroke-width="1" stroke-linecap="round" stroke-linejoin="round"/>
<path d="M250.3 200.1 C250.0 204.1 248.0 217.4 248.3 224.1 C248.6 230.8 251.6 237.4 252.3 240.1" fill="none" stroke="#121a12" stroke-width="1" stroke-linecap="round" stroke-linejoin="round"/>
<path d="M296.4 154.0 L320.0 162.0" fill="none" stroke="#121a12" stroke-width="1" stroke-linecap="round" stroke-linejoin="round"/>
<path d="M300.4 166.0 L320.0 176.0" fill="none" stroke="#121a12" stroke-width="1" stroke-linecap="round" stroke-linejoin="round"/>
<path d="M11.0 327.3 C12.6 330.0 19.3 336.4 20.6 343.8 C22.0 351.1 20.6 363.5 19.3 371.3 C17.9 379.1 13.5 387.4 12.4 390.6" fill="none" stroke="#121a12" stroke-width="1" stroke-linecap="round" stroke-linejoin="round"/>
<path d="M17.1 327.3 C18.6 330.0 25.0 336.4 26.1 343.8 C27.3 351.1 25.8 363.5 24.2 371.3 C22.6 379.1 17.8 387.4 16.5 390.6" fill="none" stroke="#121a12" stroke-width="1" stroke-linecap="round" stroke-linejoin="round"/>
<path d="M0.0 349.3 L16.5 349.3" fill="none" stroke="#121a12" stroke-width="1" stroke-linecap="round" stroke-linejoin="round"/>
<path d="M0.0 363.0 L16.5 363.0" fill="none" stroke="#121a12" stroke-width="1" stroke-linecap="round" stroke-linejoin="round"/>
<path d="M0.0 376.8 L15.1 376.8" fill="none" stroke="#121a12" stroke-width="1" stroke-linecap="round" stroke-linejoin="round"/>
<path d="M26.1 360.3 L48.2 363.0" fill="none" stroke="#121a12" stroke-width="1" stroke-linecap="round" stroke-linejoin="round"/>
<path d="M27.5 398.8 C27.8 400.7 27.3 408.0 28.9 409.8 C30.5 411.7 35.6 411.2 37.2 409.8 C38.8 408.5 38.3 403.0 38.5 401.6" fill="none" stroke="#121a12" stroke-width="1" stroke-linecap="round" stroke-linejoin="round"/>
<path d="M0.0 423.6 C1.8 424.5 7.3 428.6 11.0 429.1 C14.7 429.6 20.2 426.8 22.0 426.3" fill="none" stroke="#121a12" stroke-width="1" stroke-linecap="round" stroke-linejoin="round"/>
<path d="M35.8 429.1 C36.7 427.7 39.2 422.4 41.3 420.8 C43.3 419.2 47.0 419.7 48.2 419.5" fill="none" stroke="#121a12" stroke-width="1" stroke-linecap="round" stroke-linejoin="round"/>
<path d="M2.8 445.6 C4.1 445.6 9.4 442.4 11.0 445.6 C12.6 448.8 13.8 461.7 12.4 464.9 C11.0 468.1 4.4 468.1 2.8 464.9 C1.1 461.7 2.8 448.8 2.8 445.6" fill="none" stroke="#121a12" stroke-width="1" stroke-linecap="round" stroke-linejoin="round"/>
<path d="M20.6 445.6 C21.8 445.6 26.4 442.9 27.5 445.6 C28.7 448.4 28.2 458.0 27.5 462.1 C26.8 466.3 24.1 469.0 23.4 470.4" fill="none" stroke="#121a12" stroke-width="1" stroke-linecap="round" stroke-linejoin="round"/>
<path d="M34.4 462.1 C36.0 462.1 42.4 460.3 44.0 462.1 C45.6 464.0 44.0 471.3 44.0 473.1" fill="none" stroke="#121a12" stroke-width="1" stroke-linecap="round" stroke-linejoin="round"/>
<path d="M30.3 484.1 L31.7 519.7" fill="none" stroke="#121a12" stroke-width="1" stroke-linecap="round" stroke-linejoin="round"/>
<path d="M38.5 484.1 L44.0 500.7" fill="none" stroke="#121a12" stroke-width="1" stroke-linecap="round" stroke-linejoin="round"/>
<path d="M5.5 544.8 C9.2 545.0 21.1 544.3 27.5 546.1 C33.9 548.0 41.3 554.2 44.0 555.8" fill="none" stroke="#121a12" stroke-width="1" stroke-linecap="round" stroke-linejoin="round"/>
<path d="M5.5 555.8 L26.1 557.2" fill="none" stroke="#121a12" stroke-width="1" stroke-linecap="round" stroke-linejoin="round"/>
<path d="M27.5 546.1 C27.8 551.0 26.1 570.0 28.9 575.0 C31.7 580.1 41.5 576.2 44.0 576.4" fill="none" stroke="#121a12" stroke-width="1" stroke-linecap="round" stroke-linejoin="round"/>
<path d="M6.9 592.9 C12.6 592.6 35.1 588.0 41.3 591.0 C47.5 594.0 43.6 607.5 44.0 610.8" fill="none" stroke="#121a12" stroke-width="1" stroke-linecap="round" stroke-linejoin="round"/>
<path d="M8.3 592.9 C8.5 596.4 7.3 609.7 9.6 613.6 C11.9 617.5 20.0 615.9 22.0 616.3" fill="none" stroke="#121a12" stroke-width="1" stroke-linecap="round" stroke-linejoin="round"/>
<path d="M15.1 592.1 L16.0 615.0" fill="none" stroke="#121a12" stroke-width="1" stroke-linecap="round" stroke-linejoin="round"/>
<path d="M22.0 591.6 C22.2 595.7 20.6 612.4 22.8 616.3 C25.1 620.2 33.6 615.2 35.8 615.0" fill="none" stroke="#121a12" stroke-width="1" stroke-linecap="round" stroke-linejoin="round"/>
<path d="M28.9 591.6 L29.7 613.6" fill="none" stroke="#121a12" stroke-width="1" stroke-linecap="round" stroke-linejoin="round"/>
<path d="M35.8 591.0 L36.6 613.6" fill="none" stroke="#121a12" stroke-width="1" stroke-linecap="round" stroke-linejoin="round"/>
<path d="M4.1 624.6 C6.9 624.1 17.2 619.1 20.6 621.8 C24.1 624.6 25.5 636.5 24.8 641.1 C24.1 645.7 17.9 648.0 16.5 649.4" fill="none" stroke="#121a12" stroke-width="1" stroke-linecap="round" stroke-linejoin="round"/>
<path d="M24.8 621.8 L44.0 624.6" fill="none" stroke="#121a12" stroke-width="1" stroke-linecap="round" stroke-linejoin="round"/>
<path d="M27.5 630.1 C29.4 630.1 36.7 627.8 38.5 630.1 C40.4 632.4 40.4 641.3 38.5 643.9 C36.7 646.4 29.4 645.0 27.5 645.2" fill="none" stroke="#121a12" stroke-width="1" stroke-linecap="round" stroke-linejoin="round"/>
<path d="M11.0 654.9 C11.2 657.4 10.6 667.5 12.4 670.0 C14.2 672.5 20.4 670.0 22.0 670.0" fill="none" stroke="#121a12" stroke-width="1" stroke-linecap="round" stroke-linejoin="round"/>
<path d="M0.0 674.1 L8.3 675.5" fill="none" stroke="#121a12" stroke-width="1" stroke-linecap="round" stroke-linejoin="round"/>
<path d="M1.4 707.2 C3.2 707.2 10.6 706.2 12.4 707.2 C14.2 708.1 14.2 711.7 12.4 712.7 C10.6 713.6 3.2 712.7 1.4 712.7" fill="none" stroke="#121a12" stroke-width="1" stroke-linecap="round" stroke-linejoin="round"/>
<path d="M80.6 705.5 C85.1 705.8 102.8 704.4 107.6 707.2 C112.4 710.0 113.2 719.6 109.3 722.4 C105.3 725.2 88.2 723.8 83.9 724.1" fill="none" stroke="#121a12" stroke-width="1" stroke-linecap="round" stroke-linejoin="round"/>
<path d="M141.4 702.1 L181.9 703.8" fill="none" stroke="#121a12" stroke-width="1" stroke-linecap="round" stroke-linejoin="round"/>
<path d="M151.5 702.1 L148.1 734.2" fill="none" stroke="#121a12" stroke-width="1" stroke-linecap="round" stroke-linejoin="round"/>
<path d="M165.0 702.8 L162.3 734.2" fill="none" stroke="#121a12" stroke-width="1" stroke-linecap="round" stroke-linejoin="round"/>
<path d="M178.5 703.5 L175.2 734.2" fill="none" stroke="#121a12" stroke-width="1" stroke-linecap="round" stroke-linejoin="round"/>
<path d="M198.8 704.2 L195.4 734.2" fill="none" stroke="#121a12" stroke-width="1" stroke-linecap="round" stroke-linejoin="round"/>
<path d="M215.7 704.8 L212.3 734.2" fill="none" stroke="#121a12" stroke-width="1" stroke-linecap="round" stroke-linejoin="round"/>
<path d="M229.2 705.5 L273.2 707.2" fill="none" stroke="#121a12" stroke-width="1" stroke-linecap="round" stroke-linejoin="round"/>
<path d="M242.8 705.5 L241.1 734.2" fill="none" stroke="#121a12" stroke-width="1" stroke-linecap="round" stroke-linejoin="round"/>
<path d="M256.3 706.2 L254.9 734.2" fill="none" stroke="#121a12" stroke-width="1" stroke-linecap="round" stroke-linejoin="round"/>
<path d="M290.1 705.5 L337.4 707.2" fill="none" stroke="#121a12" stroke-width="1" stroke-linecap="round" stroke-linejoin="round"/>
<path d="M296.8 719.0 L334.0 720.7" fill="none" stroke="#121a12" stroke-width="1" stroke-linecap="round" stroke-linejoin="round"/>
<path d="M469.2 705.5 L553.6 707.2" fill="none" stroke="#121a12" stroke-width="1" stroke-linecap="round" stroke-linejoin="round"/>
<path d="M479.3 707.2 L477.6 734.2" fill="none" stroke="#121a12" stroke-width="1" stroke-linecap="round" stroke-linejoin="round"/>
<path d="M496.2 707.2 L494.5 734.2" fill="none" stroke="#121a12" stroke-width="1" stroke-linecap="round" stroke-linejoin="round"/>
<path d="M513.1 707.2 L511.4 734.2" fill="none" stroke="#121a12" stroke-width="1" stroke-linecap="round" stroke-linejoin="round"/>
<path d="M530.0 707.2 L528.3 734.2" fill="none" stroke="#121a12" stroke-width="1" stroke-linecap="round" stroke-linejoin="round"/>
<path d="M546.9 707.2 L545.2 734.2" fill="none" stroke="#121a12" stroke-width="1" stroke-linecap="round" stroke-linejoin="round"/>
<path d="M469.2 720.7 L553.6 722.4" fill="none" stroke="#121a12" stroke-width="1" stroke-linecap="round" stroke-linejoin="round"/>
<path d="M320.0 166.0 C323.3 167.7 332.3 172.7 340.0 176.0 C347.7 179.4 361.7 184.4 366.1 186.0" fill="none" stroke="#121a12" stroke-width="1" stroke-linecap="round" stroke-linejoin="round"/>
<path d="M332.0 154.0 L360.1 172.0" fill="none" stroke="#121a12" stroke-width="1" stroke-linecap="round" stroke-linejoin="round"/>
<path d="M320.0 180.0 L340.0 188.0" fill="none" stroke="#121a12" stroke-width="1" stroke-linecap="round" stroke-linejoin="round"/>
<path d="M340.0 206.1 C343.4 210.1 352.4 227.8 360.1 230.1 C367.7 232.4 383.1 224.8 386.1 220.1 C389.1 215.4 379.4 205.1 378.1 202.1" fill="none" stroke="#121a12" stroke-width="1" stroke-linecap="round" stroke-linejoin="round"/>
<path d="M386.1 220.1 C391.8 220.8 412.4 220.8 420.1 224.1 C427.8 227.4 430.1 237.4 432.1 240.1" fill="none" stroke="#121a12" stroke-width="1" stroke-linecap="round" stroke-linejoin="round"/>
<path d="M360.1 214.1 L380.1 210.1" fill="none" stroke="#121a12" stroke-width="1" stroke-linecap="round" stroke-linejoin="round"/>
<path d="M330.0 234.1 C332.3 233.4 339.0 229.1 344.0 230.1 C349.0 231.1 357.4 238.4 360.1 240.1" fill="none" stroke="#121a12" stroke-width="1" stroke-linecap="round" stroke-linejoin="round"/>
<path d="M380.1 230.1 C384.1 229.1 398.1 222.8 404.1 224.1 C410.1 225.4 414.1 235.8 416.1 238.1" fill="none" stroke="#121a12" stroke-width="1" stroke-linecap="round" stroke-linejoin="round"/>
<path d="M440.2 200.1 C442.2 199.1 448.8 192.4 452.2 194.1 C455.5 195.7 460.5 206.4 460.2 210.1 C459.8 213.7 451.8 215.1 450.2 216.1" fill="none" stroke="#121a12" stroke-width="1" stroke-linecap="round" stroke-linejoin="round"/>
<path d="M452.2 194.1 C454.2 193.4 460.8 188.0 464.2 190.0 C467.5 192.0 472.9 202.7 472.2 206.1 C471.5 209.4 462.2 209.4 460.2 210.1" fill="none" stroke="#121a12" stroke-width="1" stroke-linecap="round" stroke-linejoin="round"/>
<path d="M464.2 190.0 C466.5 189.7 475.2 185.7 478.2 188.0 C481.2 190.4 483.2 201.1 482.2 204.1 C481.2 207.1 473.9 205.7 472.2 206.1" fill="none" stroke="#121a12" stroke-width="1" stroke-linecap="round" stroke-linejoin="round"/>
<path d="M456.2 218.1 C460.2 217.1 475.9 214.4 480.2 212.1 C484.5 209.7 481.9 205.4 482.2 204.1" fill="none" stroke="#121a12" stroke-width="1" stroke-linecap="round" stroke-linejoin="round"/>
<path d="M512.2 214.1 C513.9 213.1 518.9 207.1 522.3 208.1 C525.6 209.1 532.6 217.4 532.3 220.1 C531.9 222.8 522.3 223.4 520.3 224.1" fill="none" stroke="#121a12" stroke-width="1" stroke-linecap="round" stroke-linejoin="round"/>
<path d="M520.3 224.1 C523.6 223.4 535.6 219.1 540.3 220.1 C544.9 221.1 547.0 228.4 548.3 230.1" fill="none" stroke="#121a12" stroke-width="1" stroke-linecap="round" stroke-linejoin="round"/>
<path d="M600.4 234.1 L640.0 266.1" fill="none" stroke="#121a12" stroke-width="1" stroke-linecap="round" stroke-linejoin="round"/>
<path d="M612.4 238.1 L632.4 234.1" fill="none" stroke="#121a12" stroke-width="1" stroke-linecap="round" stroke-linejoin="round"/>
<path d="M628.4 240.1 L640.0 238.1" fill="none" stroke="#121a12" stroke-width="1" stroke-linecap="round" stroke-linejoin="round"/>
<path d="M646.0 166.0 C649.0 165.0 656.7 155.3 664.0 160.0 C671.4 164.7 685.7 188.4 690.1 194.1" fill="none" stroke="#121a12" stroke-width="1" stroke-linecap="round" stroke-linejoin="round"/>
<path d="M640.0 194.1 C643.3 197.4 653.4 212.7 660.0 214.1 C666.7 215.4 676.7 204.1 680.1 202.1" fill="none" stroke="#121a12" stroke-width="1" stroke-linecap="round" stroke-linejoin="round"/>
<path d="M660.0 214.1 C662.7 218.1 670.7 231.8 676.0 238.1 C681.4 244.4 689.4 249.8 692.1 252.1" fill="none" stroke="#121a12" stroke-width="1" stroke-linecap="round" stroke-linejoin="round"/>
<path d="M640.0 220.1 C642.0 222.4 647.0 229.4 652.0 234.1 C657.0 238.8 667.0 245.8 670.0 248.1" fill="none" stroke="#121a12" stroke-width="1" stroke-linecap="round" stroke-linejoin="round"/>
<path d="M650.0 176.0 L668.0 193.0" fill="none" stroke="#121a12" stroke-width="1" stroke-linecap="round" stroke-linejoin="round"/>
<path d="M680.1 174.0 C682.7 172.7 691.1 164.3 696.1 166.0 C701.1 167.7 707.8 181.0 710.1 184.0" fill="none" stroke="#121a12" stroke-width="1" stroke-linecap="round" stroke-linejoin="round"/>
<path d="M690.1 194.1 L710.1 184.0" fill="none" stroke="#121a12" stroke-width="1" stroke-linecap="round" stroke-linejoin="round"/>
<path d="M728.1 166.0 L800.2 168.0" fill="none" stroke="#121a12" stroke-width="1" stroke-linecap="round" stroke-linejoin="round"/>
<path d="M728.1 180.0 L800.2 182.0" fill="none" stroke="#121a12" stroke-width="1" stroke-linecap="round" stroke-linejoin="round"/>
<path d="M744.1 200.1 L800.2 194.1" fill="none" stroke="#121a12" stroke-width="1" stroke-linecap="round" stroke-linejoin="round"/>
<path d="M752.1 220.1 L800.2 204.1" fill="none" stroke="#121a12" stroke-width="1" stroke-linecap="round" stroke-linejoin="round"/>
<path d="M760.2 158.0 L758.1 194.1" fill="none" stroke="#121a12" stroke-width="1" stroke-linecap="round" stroke-linejoin="round"/>
<path d="M778.2 158.0 L777.2 200.1" fill="none" stroke="#121a12" stroke-width="1" stroke-linecap="round" stroke-linejoin="round"/>
<path d="M736.1 158.0 L734.1 188.0" fill="none" stroke="#121a12" stroke-width="1" stroke-linecap="round" stroke-linejoin="round"/>
<path d="M640.0 266.1 L660.0 282.2" fill="none" stroke="#121a12" stroke-width="1" stroke-linecap="round" stroke-linejoin="round"/>
<path d="M664.0 258.1 L686.1 266.1" fill="none" stroke="#121a12" stroke-width="1" stroke-linecap="round" stroke-linejoin="round"/>
<path d="M712.1 250.1 C720.1 249.5 750.0 246.4 760.2 246.1 C770.3 245.8 771.0 247.8 773.2 248.1" fill="none" stroke="#121a12" stroke-width="1" stroke-linecap="round" stroke-linejoin="round"/>
<path d="M710.1 266.1 L773.2 266.1" fill="none" stroke="#121a12" stroke-width="1" stroke-linecap="round" stroke-linejoin="round"/>
<path d="M711.1 282.2 L773.2 284.2" fill="none" stroke="#121a12" stroke-width="1" stroke-linecap="round" stroke-linejoin="round"/>
<path d="M724.1 234.1 L728.1 298.2" fill="none" stroke="#121a12" stroke-width="1" stroke-linecap="round" stroke-linejoin="round"/>
<path d="M742.1 233.1 L748.1 299.2" fill="none" stroke="#121a12" stroke-width="1" stroke-linecap="round" stroke-linejoin="round"/>
<path d="M760.2 231.1 L764.2 299.8" fill="none" stroke="#121a12" stroke-width="1" stroke-linecap="round" stroke-linejoin="round"/>
<path d="M660.0 294.2 L712.1 292.2" fill="none" stroke="#121a12" stroke-width="1" stroke-linecap="round" stroke-linejoin="round"/>
<path d="M648.0 286.2 L652.0 308.0" fill="none" stroke="#121a12" stroke-width="1" stroke-linecap="round" stroke-linejoin="round"/>
<path d="M680.1 298.2 L684.1 308.0" fill="none" stroke="#121a12" stroke-width="1" stroke-linecap="round" stroke-linejoin="round"/>
<path d="M902.3 174.0 L926.4 172.0" fill="none" stroke="#121a12" stroke-width="1" stroke-linecap="round" stroke-linejoin="round"/>
<path d="M936.4 174.0 L960.0 170.0" fill="none" stroke="#121a12" stroke-width="1" stroke-linecap="round" stroke-linejoin="round"/>
<path d="M948.4 162.0 L949.4 207.1" fill="none" stroke="#121a12" stroke-width="1" stroke-linecap="round" stroke-linejoin="round"/>
<path d="M902.3 200.1 L930.4 198.1" fill="none" stroke="#121a12" stroke-width="1" stroke-linecap="round" stroke-linejoin="round"/>
<path d="M1216.3 205.1 L1215.3 256.1" fill="none" stroke="#8a908a" stroke-width="0.8" stroke-linecap="round" stroke-linejoin="round"/>
<path d="M1022.1 194.1 L1074.2 192.0" fill="none" stroke="#121a12" stroke-width="1" stroke-linecap="round" stroke-linejoin="round"/>
<path d="M1020.1 214.1 L1072.2 212.1" fill="none" stroke="#121a12" stroke-width="1" stroke-linecap="round" stroke-linejoin="round"/>
<path d="M1022.1 194.1 L1020.1 214.1" fill="none" stroke="#121a12" stroke-width="1" stroke-linecap="round" stroke-linejoin="round"/>
<path d="M1039.1 198.1 L1040.1 212.1" fill="none" stroke="#121a12" stroke-width="1" stroke-linecap="round" stroke-linejoin="round"/>
<path d="M1002.1 264.1 L1042.1 256.1" fill="none" stroke="#121a12" stroke-width="1" stroke-linecap="round" stroke-linejoin="round"/>
<path d="M1002.1 252.1 L1094.2 248.1" fill="none" stroke="#121a12" stroke-width="1" stroke-linecap="round" stroke-linejoin="round"/>
<path d="M1046.1 274.2 L1102.2 272.1" fill="none" stroke="#121a12" stroke-width="1" stroke-linecap="round" stroke-linejoin="round"/>
<path d="M1048.1 286.2 L1104.2 284.2" fill="none" stroke="#121a12" stroke-width="1" stroke-linecap="round" stroke-linejoin="round"/>
<path d="M1050.1 298.2 L1105.2 297.2" fill="none" stroke="#121a12" stroke-width="1" stroke-linecap="round" stroke-linejoin="round"/>
<path d="M1062.2 272.1 L1066.2 308.0" fill="none" stroke="#121a12" stroke-width="1" stroke-linecap="round" stroke-linejoin="round"/>
<path d="M1078.2 271.1 L1082.2 308.0" fill="none" stroke="#121a12" stroke-width="1" stroke-linecap="round" stroke-linejoin="round"/>
<path d="M1092.2 180.0 L1130.2 182.0" fill="none" stroke="#121a12" stroke-width="1" stroke-linecap="round" stroke-linejoin="round"/>
<path d="M1094.2 194.1 L1126.2 196.1" fill="none" stroke="#121a12" stroke-width="1" stroke-linecap="round" stroke-linejoin="round"/>
<path d="M1096.2 208.1 L1122.2 210.1" fill="none" stroke="#121a12" stroke-width="1" stroke-linecap="round" stroke-linejoin="round"/>
<path d="M1098.2 238.1 L1160.3 240.1" fill="none" stroke="#121a12" stroke-width="1" stroke-linecap="round" stroke-linejoin="round"/>
<path d="M1099.2 250.1 L1159.3 252.1" fill="none" stroke="#121a12" stroke-width="1" stroke-linecap="round" stroke-linejoin="round"/>
<path d="M1100.2 262.1 L1158.3 264.1" fill="none" stroke="#121a12" stroke-width="1" stroke-linecap="round" stroke-linejoin="round"/>
<path d="M1102.2 286.2 L1157.3 288.2" fill="none" stroke="#121a12" stroke-width="1" stroke-linecap="round" stroke-linejoin="round"/>
<path d="M1104.2 298.2 L1156.3 300.2" fill="none" stroke="#121a12" stroke-width="1" stroke-linecap="round" stroke-linejoin="round"/>
<path d="M1114.2 166.0 L1116.2 274.2" fill="none" stroke="#121a12" stroke-width="1" stroke-linecap="round" stroke-linejoin="round"/>
<path d="M1128.2 214.1 L1124.2 308.0" fill="none" stroke="#121a12" stroke-width="1" stroke-linecap="round" stroke-linejoin="round"/>
<path d="M1146.3 182.0 L1184.3 184.0" fill="none" stroke="#121a12" stroke-width="1" stroke-linecap="round" stroke-linejoin="round"/>
<path d="M1145.3 196.1 L1185.3 197.1" fill="none" stroke="#121a12" stroke-width="1" stroke-linecap="round" stroke-linejoin="round"/>
<path d="M1144.3 238.1 L1186.3 239.1" fill="none" stroke="#121a12" stroke-width="1" stroke-linecap="round" stroke-linejoin="round"/>
<path d="M1143.3 250.1 L1186.3 252.1" fill="none" stroke="#121a12" stroke-width="1" stroke-linecap="round" stroke-linejoin="round"/>
<path d="M1142.3 262.1 L1187.3 264.1" fill="none" stroke="#121a12" stroke-width="1" stroke-linecap="round" stroke-linejoin="round"/>
<path d="M1141.2 288.2 L1188.3 290.2" fill="none" stroke="#121a12" stroke-width="1" stroke-linecap="round" stroke-linejoin="round"/>
<path d="M1174.3 154.0 L1172.3 308.0" fill="none" stroke="#121a12" stroke-width="1" stroke-linecap="round" stroke-linejoin="round"/>
<path d="M1154.3 170.0 L1150.3 308.0" fill="none" stroke="#121a12" stroke-width="1" stroke-linecap="round" stroke-linejoin="round"/>
<path d="M1188.3 226.1 L1262.0 228.1" fill="none" stroke="#121a12" stroke-width="1" stroke-linecap="round" stroke-linejoin="round"/>
<path d="M1189.3 240.1 L1200.3 240.5" fill="none" stroke="#121a12" stroke-width="1" stroke-linecap="round" stroke-linejoin="round"/>
<path d="M1190.3 254.1 L1262.0 256.1" fill="none" stroke="#121a12" stroke-width="1" stroke-linecap="round" stroke-linejoin="round"/>
<path d="M1190.3 266.1 L1262.0 268.1" fill="none" stroke="#121a12" stroke-width="1" stroke-linecap="round" stroke-linejoin="round"/>
<path d="M1191.3 292.2 L1262.0 294.2" fill="none" stroke="#121a12" stroke-width="1" stroke-linecap="round" stroke-linejoin="round"/>
<path d="M1202.3 214.1 L1204.3 308.0" fill="none" stroke="#121a12" stroke-width="1" stroke-linecap="round" stroke-linejoin="round"/>
<path d="M1226.4 214.1 L1228.4 308.0" fill="none" stroke="#121a12" stroke-width="1" stroke-linecap="round" stroke-linejoin="round"/>
<path d="M1246.4 214.1 L1248.4 308.0" fill="none" stroke="#121a12" stroke-width="1" stroke-linecap="round" stroke-linejoin="round"/>
<path d="M1222.4 174.0 C1225.7 176.7 1238.4 183.4 1242.4 190.0 C1246.4 196.7 1245.7 210.1 1246.4 214.1" fill="none" stroke="#121a12" stroke-width="1" stroke-linecap="round" stroke-linejoin="round"/>
<path d="M1202.3 162.0 L1262.0 166.0" fill="none" stroke="#121a12" stroke-width="1" stroke-linecap="round" stroke-linejoin="round"/>
<path d="M740.2 326.0 L739.2 390.1" fill="none" stroke="#121a12" stroke-width="1" stroke-linecap="round" stroke-linejoin="round"/>
<path d="M749.2 326.0 L748.2 390.1" fill="none" stroke="#121a12" stroke-width="1" stroke-linecap="round" stroke-linejoin="round"/>
<path d="M758.2 326.0 L757.2 390.1" fill="none" stroke="#121a12" stroke-width="1" stroke-linecap="round" stroke-linejoin="round"/>
<path d="M767.3 326.0 L766.3 390.1" fill="none" stroke="#121a12" stroke-width="1" stroke-linecap="round" stroke-linejoin="round"/>
<path d="M776.3 326.0 L775.3 390.1" fill="none" stroke="#121a12" stroke-width="1" stroke-linecap="round" stroke-linejoin="round"/>
<path d="M785.3 326.0 L784.3 390.1" fill="none" stroke="#121a12" stroke-width="1" stroke-linecap="round" stroke-linejoin="round"/>
<path d="M794.3 326.0 L793.3 390.1" fill="none" stroke="#121a12" stroke-width="1" stroke-linecap="round" stroke-linejoin="round"/>
<path d="M803.3 326.0 L802.3 390.1" fill="none" stroke="#121a12" stroke-width="1" stroke-linecap="round" stroke-linejoin="round"/>
<path d="M812.3 326.0 L811.3 390.1" fill="none" stroke="#121a12" stroke-width="1" stroke-linecap="round" stroke-linejoin="round"/>
<path d="M738.2 396.1 L741.2 444.2" fill="none" stroke="#121a12" stroke-width="1" stroke-linecap="round" stroke-linejoin="round"/>
<path d="M748.2 396.1 L751.2 444.2" fill="none" stroke="#121a12" stroke-width="1" stroke-linecap="round" stroke-linejoin="round"/>
<path d="M758.2 396.1 L761.3 444.2" fill="none" stroke="#121a12" stroke-width="1" stroke-linecap="round" stroke-linejoin="round"/>
<path d="M768.3 396.1 L771.3 444.2" fill="none" stroke="#121a12" stroke-width="1" stroke-linecap="round" stroke-linejoin="round"/>
<path d="M778.3 396.1 L781.3 444.2" fill="none" stroke="#121a12" stroke-width="1" stroke-linecap="round" stroke-linejoin="round"/>
<path d="M788.3 396.1 L791.3 444.2" fill="none" stroke="#121a12" stroke-width="1" stroke-linecap="round" stroke-linejoin="round"/>
<path d="M798.3 396.1 L801.3 444.2" fill="none" stroke="#121a12" stroke-width="1" stroke-linecap="round" stroke-linejoin="round"/>
<path d="M808.3 396.1 L811.3 444.2" fill="none" stroke="#121a12" stroke-width="1" stroke-linecap="round" stroke-linejoin="round"/>
<path d="M732.2 342.0 L824.3 344.0" fill="none" stroke="#121a12" stroke-width="1" stroke-linecap="round" stroke-linejoin="round"/>
<path d="M730.2 376.1 L823.3 378.1" fill="none" stroke="#121a12" stroke-width="1" stroke-linecap="round" stroke-linejoin="round"/>
<path d="M734.2 412.1 L822.3 414.1" fill="none" stroke="#121a12" stroke-width="1" stroke-linecap="round" stroke-linejoin="round"/>
<path d="M736.2 428.2 L821.3 430.2" fill="none" stroke="#121a12" stroke-width="1" stroke-linecap="round" stroke-linejoin="round"/>
<path d="M828.3 348.1 L854.4 349.1" fill="none" stroke="#121a12" stroke-width="1" stroke-linecap="round" stroke-linejoin="round"/>
<path d="M826.3 378.1 L880.0 382.1" fill="none" stroke="#121a12" stroke-width="1" stroke-linecap="round" stroke-linejoin="round"/>
<path d="M824.3 412.1 L880.0 416.1" fill="none" stroke="#121a12" stroke-width="1" stroke-linecap="round" stroke-linejoin="round"/>
<path d="M823.3 428.2 L880.0 432.2" fill="none" stroke="#121a12" stroke-width="1" stroke-linecap="round" stroke-linejoin="round"/>
<path d="M840.4 366.1 L839.3 446.2" fill="none" stroke="#121a12" stroke-width="1" stroke-linecap="round" stroke-linejoin="round"/>
<path d="M856.4 368.1 L855.4 448.2" fill="none" stroke="#121a12" stroke-width="1" stroke-linecap="round" stroke-linejoin="round"/>
<path d="M872.4 378.1 L871.4 456.2" fill="none" stroke="#121a12" stroke-width="1" stroke-linecap="round" stroke-linejoin="round"/>
<path d="M680.2 338.0 C683.5 337.7 694.8 334.4 700.2 336.0 C705.5 337.7 710.2 346.0 712.2 348.1" fill="none" stroke="#121a12" stroke-width="1" stroke-linecap="round" stroke-linejoin="round"/>
<path d="M684.2 368.1 L700.2 364.1" fill="none" stroke="#121a12" stroke-width="1" stroke-linecap="round" stroke-linejoin="round"/>
<path d="M688.2 396.1 L704.2 392.1" fill="none" stroke="#121a12" stroke-width="1" stroke-linecap="round" stroke-linejoin="round"/>
<path d="M584.0 320.0 L600.1 340.0" fill="none" stroke="#121a12" stroke-width="1" stroke-linecap="round" stroke-linejoin="round"/>
<path d="M612.1 336.0 L620.1 356.1" fill="none" stroke="#121a12" stroke-width="1" stroke-linecap="round" stroke-linejoin="round"/>
<path d="M620.1 378.1 L636.1 368.1" fill="none" stroke="#121a12" stroke-width="1" stroke-linecap="round" stroke-linejoin="round"/>
<path d="M650.1 368.1 L660.1 384.1" fill="none" stroke="#121a12" stroke-width="1" stroke-linecap="round" stroke-linejoin="round"/>
<path d="M1000.2 326.0 L1138.3 328.0" fill="none" stroke="#121a12" stroke-width="1" stroke-linecap="round" stroke-linejoin="round"/>
<path d="M1004.2 358.1 L1140.3 362.1" fill="none" stroke="#121a12" stroke-width="1" stroke-linecap="round" stroke-linejoin="round"/>
<path d="M1008.2 392.1 L1068.2 396.1" fill="none" stroke="#121a12" stroke-width="1" stroke-linecap="round" stroke-linejoin="round"/>
<path d="M1010.2 408.1 L1068.2 412.1" fill="none" stroke="#121a12" stroke-width="1" stroke-linecap="round" stroke-linejoin="round"/>
<path d="M1012.2 424.1 L1072.2 428.2" fill="none" stroke="#121a12" stroke-width="1" stroke-linecap="round" stroke-linejoin="round"/>
<path d="M1014.2 440.2 L1073.2 444.2" fill="none" stroke="#121a12" stroke-width="1" stroke-linecap="round" stroke-linejoin="round"/>
<path d="M1020.2 312.0 L1024.2 374.1" fill="none" stroke="#121a12" stroke-width="1" stroke-linecap="round" stroke-linejoin="round"/>
<path d="M1036.2 312.0 L1038.2 356.1" fill="none" stroke="#121a12" stroke-width="1" stroke-linecap="round" stroke-linejoin="round"/>
<path d="M1008.2 344.0 L1020.2 462.0" fill="none" stroke="#121a12" stroke-width="1" stroke-linecap="round" stroke-linejoin="round"/>
<path d="M1032.2 378.1 L1040.2 462.0" fill="none" stroke="#121a12" stroke-width="1" stroke-linecap="round" stroke-linejoin="round"/>
<path d="M1050.2 378.1 L1056.2 462.0" fill="none" stroke="#121a12" stroke-width="1" stroke-linecap="round" stroke-linejoin="round"/>
<path d="M1060.2 328.0 L1106.3 330.0" fill="none" stroke="#121a12" stroke-width="1" stroke-linecap="round" stroke-linejoin="round"/>
<path d="M1064.2 358.1 L1114.3 364.1" fill="none" stroke="#121a12" stroke-width="1" stroke-linecap="round" stroke-linejoin="round"/>
<path d="M1068.2 396.1 L1120.3 402.1" fill="none" stroke="#121a12" stroke-width="1" stroke-linecap="round" stroke-linejoin="round"/>
<path d="M1070.2 416.1 L1123.3 420.1" fill="none" stroke="#121a12" stroke-width="1" stroke-linecap="round" stroke-linejoin="round"/>
<path d="M1072.2 432.2 L1125.3 436.2" fill="none" stroke="#121a12" stroke-width="1" stroke-linecap="round" stroke-linejoin="round"/>
<path d="M1080.3 314.0 L1092.3 438.2" fill="none" stroke="#121a12" stroke-width="1" stroke-linecap="round" stroke-linejoin="round"/>
<path d="M1094.3 314.0 L1104.3 438.2" fill="none" stroke="#121a12" stroke-width="1" stroke-linecap="round" stroke-linejoin="round"/>
<path d="M1106.3 328.0 L1200.0 332.0" fill="none" stroke="#121a12" stroke-width="1" stroke-linecap="round" stroke-linejoin="round"/>
<path d="M1112.3 364.1 L1200.0 368.1" fill="none" stroke="#121a12" stroke-width="1" stroke-linecap="round" stroke-linejoin="round"/>
<path d="M1120.3 402.1 L1200.0 406.1" fill="none" stroke="#121a12" stroke-width="1" stroke-linecap="round" stroke-linejoin="round"/>
<path d="M1123.3 420.1 L1200.0 424.1" fill="none" stroke="#121a12" stroke-width="1" stroke-linecap="round" stroke-linejoin="round"/>
<path d="M1126.3 436.2 L1200.0 440.2" fill="none" stroke="#121a12" stroke-width="1" stroke-linecap="round" stroke-linejoin="round"/>
<path d="M1128.3 452.2 L1168.4 454.2" fill="none" stroke="#121a12" stroke-width="1" stroke-linecap="round" stroke-linejoin="round"/>
<path d="M1124.3 308.0 L1132.3 388.1" fill="none" stroke="#121a12" stroke-width="1" stroke-linecap="round" stroke-linejoin="round"/>
<path d="M1146.3 308.0 L1150.3 348.1" fill="none" stroke="#121a12" stroke-width="1" stroke-linecap="round" stroke-linejoin="round"/>
<path d="M1170.4 308.0 C1171.4 321.4 1174.0 362.4 1176.4 388.1 C1178.7 413.8 1183.0 449.7 1184.4 462.0" fill="none" stroke="#121a12" stroke-width="1" stroke-linecap="round" stroke-linejoin="round"/>
<path d="M1188.4 308.0 L1192.4 388.1" fill="none" stroke="#121a12" stroke-width="1" stroke-linecap="round" stroke-linejoin="round"/>
<path d="M892.0 374.1 C892.3 376.4 891.0 383.1 894.0 388.1 C897.0 393.1 907.4 401.5 910.0 404.1" fill="none" stroke="#121a12" stroke-width="1" stroke-linecap="round" stroke-linejoin="round"/>
<path d="M900.0 372.1 L920.1 392.1" fill="none" stroke="#121a12" stroke-width="1" stroke-linecap="round" stroke-linejoin="round"/>
<path d="M916.0 372.1 L918.0 408.1" fill="none" stroke="#121a12" stroke-width="1" stroke-linecap="round" stroke-linejoin="round"/>
<path d="M926.1 372.1 L928.1 420.1" fill="none" stroke="#121a12" stroke-width="1" stroke-linecap="round" stroke-linejoin="round"/>
<path d="M880.0 392.1 L892.0 396.1" fill="none" stroke="#121a12" stroke-width="1" stroke-linecap="round" stroke-linejoin="round"/>
<path d="M904.0 420.1 L932.1 428.2" fill="none" stroke="#121a12" stroke-width="1" stroke-linecap="round" stroke-linejoin="round"/>
<path d="M892.0 432.2 L920.1 448.2" fill="none" stroke="#121a12" stroke-width="1" stroke-linecap="round" stroke-linejoin="round"/>
<path d="M880.0 428.2 L890.0 448.2" fill="none" stroke="#121a12" stroke-width="1" stroke-linecap="round" stroke-linejoin="round"/>
<path d="M1162.0 320.0 L1222.0 322.0" fill="none" stroke="#121a12" stroke-width="1" stroke-linecap="round" stroke-linejoin="round"/>
<path d="M1166.0 334.0 L1226.0 338.0" fill="none" stroke="#121a12" stroke-width="1" stroke-linecap="round" stroke-linejoin="round"/>
<path d="M1168.0 368.0 L1228.0 372.0" fill="none" stroke="#121a12" stroke-width="1" stroke-linecap="round" stroke-linejoin="round"/>
<path d="M1170.0 380.0 L1226.0 384.0" fill="none" stroke="#121a12" stroke-width="1" stroke-linecap="round" stroke-linejoin="round"/>
<path d="M1168.0 408.0 L1226.0 412.0" fill="none" stroke="#121a12" stroke-width="1" stroke-linecap="round" stroke-linejoin="round"/>
<path d="M1182.0 350.0 L1180.0 392.0" fill="none" stroke="#121a12" stroke-width="1" stroke-linecap="round" stroke-linejoin="round"/>
<path d="M1206.0 351.0 L1204.0 394.0" fill="none" stroke="#121a12" stroke-width="1" stroke-linecap="round" stroke-linejoin="round"/>
<path d="M1242.0 354.0 L1240.0 396.0" fill="none" stroke="#121a12" stroke-width="1" stroke-linecap="round" stroke-linejoin="round"/>
<path d="M1230.0 368.0 L1258.0 370.0" fill="none" stroke="#121a12" stroke-width="1" stroke-linecap="round" stroke-linejoin="round"/>
<path d="M1230.0 384.0 L1258.0 386.0" fill="none" stroke="#121a12" stroke-width="1" stroke-linecap="round" stroke-linejoin="round"/>
<path d="M610.1 586.2 L611.7 616.0" fill="none" stroke="#121a12" stroke-width="1" stroke-linecap="round" stroke-linejoin="round"/>
<path d="M619.1 586.2 L620.7 616.0" fill="none" stroke="#121a12" stroke-width="1" stroke-linecap="round" stroke-linejoin="round"/>
<path d="M628.1 586.2 L629.7 616.0" fill="none" stroke="#121a12" stroke-width="1" stroke-linecap="round" stroke-linejoin="round"/>
<path d="M637.1 586.2 L638.7 616.0" fill="none" stroke="#121a12" stroke-width="1" stroke-linecap="round" stroke-linejoin="round"/>
<path d="M646.1 586.2 L647.7 616.0" fill="none" stroke="#121a12" stroke-width="1" stroke-linecap="round" stroke-linejoin="round"/>
<path d="M655.1 586.2 L656.7 616.0" fill="none" stroke="#121a12" stroke-width="1" stroke-linecap="round" stroke-linejoin="round"/>
<path d="M664.1 586.2 L665.7 616.0" fill="none" stroke="#121a12" stroke-width="1" stroke-linecap="round" stroke-linejoin="round"/>
<path d="M673.1 586.2 L674.7 616.0" fill="none" stroke="#121a12" stroke-width="1" stroke-linecap="round" stroke-linejoin="round"/>
<path d="M682.2 586.2 L683.8 616.0" fill="none" stroke="#121a12" stroke-width="1" stroke-linecap="round" stroke-linejoin="round"/>
<path d="M688.2 586.2 L689.8 616.0" fill="none" stroke="#121a12" stroke-width="1" stroke-linecap="round" stroke-linejoin="round"/>
<path d="M600.1 592.2 L690.2 590.2" fill="none" stroke="#121a12" stroke-width="1" stroke-linecap="round" stroke-linejoin="round"/>
<path d="M601.1 602.2 L692.2 600.2" fill="none" stroke="#121a12" stroke-width="1" stroke-linecap="round" stroke-linejoin="round"/>
<path d="M602.1 611.2 L693.2 610.2" fill="none" stroke="#121a12" stroke-width="1" stroke-linecap="round" stroke-linejoin="round"/>
<path d="M572.0 548.1 L588.0 546.1" fill="none" stroke="#121a12" stroke-width="1" stroke-linecap="round" stroke-linejoin="round"/>
<path d="M572.0 562.1 L591.0 560.1" fill="none" stroke="#121a12" stroke-width="1" stroke-linecap="round" stroke-linejoin="round"/>
<path d="M576.0 550.1 L578.0 574.1" fill="none" stroke="#121a12" stroke-width="1" stroke-linecap="round" stroke-linejoin="round"/>
<path d="M596.0 502.1 C598.7 506.4 612.1 522.7 612.1 528.1 C612.1 533.4 598.7 533.1 596.0 534.1" fill="none" stroke="#121a12" stroke-width="1" stroke-linecap="round" stroke-linejoin="round"/>
<path d="M604.1 518.1 L626.1 532.1" fill="none" stroke="#121a12" stroke-width="1" stroke-linecap="round" stroke-linejoin="round"/>
<path d="M600.1 554.1 L680.2 550.1" fill="none" stroke="#121a12" stroke-width="1" stroke-linecap="round" stroke-linejoin="round"/>
<path d="M610.1 556.1 L612.1 574.1" fill="none" stroke="#121a12" stroke-width="1" stroke-linecap="round" stroke-linejoin="round"/>
<path d="M626.1 555.1 L628.1 570.1" fill="none" stroke="#121a12" stroke-width="1" stroke-linecap="round" stroke-linejoin="round"/>
<path d="M644.1 553.1 L646.1 566.1" fill="none" stroke="#121a12" stroke-width="1" stroke-linecap="round" stroke-linejoin="round"/>
<path d="M664.1 552.1 L665.1 562.1" fill="none" stroke="#121a12" stroke-width="1" stroke-linecap="round" stroke-linejoin="round"/>
<path d="M826.3 474.0 L828.3 492.0" fill="none" stroke="#121a12" stroke-width="1" stroke-linecap="round" stroke-linejoin="round"/>
<path d="M840.4 474.0 L860.4 482.0" fill="none" stroke="#121a12" stroke-width="1" stroke-linecap="round" stroke-linejoin="round"/>
<path d="M844.4 492.0 L848.4 500.0" fill="none" stroke="#121a12" stroke-width="1" stroke-linecap="round" stroke-linejoin="round"/>
<path d="M820.3 574.1 L880.0 578.1" fill="none" stroke="#121a12" stroke-width="1" stroke-linecap="round" stroke-linejoin="round"/>
<path d="M836.3 582.2 L840.4 616.0" fill="none" stroke="#121a12" stroke-width="1" stroke-linecap="round" stroke-linejoin="round"/>
<path d="M852.4 582.2 L856.4 616.0" fill="none" stroke="#121a12" stroke-width="1" stroke-linecap="round" stroke-linejoin="round"/>
<path d="M820.3 592.2 L880.0 594.2" fill="none" stroke="#121a12" stroke-width="1" stroke-linecap="round" stroke-linejoin="round"/>
<path d="M822.3 606.2 L880.0 608.2" fill="none" stroke="#121a12" stroke-width="1" stroke-linecap="round" stroke-linejoin="round"/>
<path d="M1008.2 520.1 L1080.3 518.1" fill="none" stroke="#121a12" stroke-width="1" stroke-linecap="round" stroke-linejoin="round"/>
<path d="M1010.2 534.1 L1080.3 532.1" fill="none" stroke="#121a12" stroke-width="1" stroke-linecap="round" stroke-linejoin="round"/>
<path d="M1020.2 510.1 L1022.2 546.1" fill="none" stroke="#121a12" stroke-width="1" stroke-linecap="round" stroke-linejoin="round"/>
<path d="M1040.2 512.1 L1042.2 546.1" fill="none" stroke="#121a12" stroke-width="1" stroke-linecap="round" stroke-linejoin="round"/>
<path d="M1060.2 512.1 L1061.2 548.1" fill="none" stroke="#121a12" stroke-width="1" stroke-linecap="round" stroke-linejoin="round"/>
<path d="M1082.3 502.1 L1128.3 504.1" fill="none" stroke="#121a12" stroke-width="1" stroke-linecap="round" stroke-linejoin="round"/>
<path d="M1082.3 524.1 L1130.3 526.1" fill="none" stroke="#121a12" stroke-width="1" stroke-linecap="round" stroke-linejoin="round"/>
<path d="M1100.3 492.0 L1102.3 532.1" fill="none" stroke="#121a12" stroke-width="1" stroke-linecap="round" stroke-linejoin="round"/>
<path d="M880.0 586.2 L984.1 590.2" fill="none" stroke="#121a12" stroke-width="1" stroke-linecap="round" stroke-linejoin="round"/>
<path d="M880.0 602.2 L925.1 606.2" fill="none" stroke="#121a12" stroke-width="1" stroke-linecap="round" stroke-linejoin="round"/>
<path d="M892.0 582.2 L894.0 616.0" fill="none" stroke="#121a12" stroke-width="1" stroke-linecap="round" stroke-linejoin="round"/>
<path d="M908.0 582.2 L910.0 616.0" fill="none" stroke="#121a12" stroke-width="1" stroke-linecap="round" stroke-linejoin="round"/>
<path d="M926.1 582.2 L928.1 614.2" fill="none" stroke="#121a12" stroke-width="1" stroke-linecap="round" stroke-linejoin="round"/>
<path d="M944.1 586.2 L946.1 611.2" fill="none" stroke="#121a12" stroke-width="1" stroke-linecap="round" stroke-linejoin="round"/>
<path d="M960.1 588.2 L962.1 609.2" fill="none" stroke="#121a12" stroke-width="1" stroke-linecap="round" stroke-linejoin="round"/>
<path d="M990.1 590.2 L1060.2 582.2" fill="none" stroke="#121a12" stroke-width="1" stroke-linecap="round" stroke-linejoin="round"/>
<path d="M1020.2 586.2 L1024.2 616.0" fill="none" stroke="#121a12" stroke-width="1" stroke-linecap="round" stroke-linejoin="round"/>
<path d="M1040.2 584.2 L1043.2 616.0" fill="none" stroke="#121a12" stroke-width="1" stroke-linecap="round" stroke-linejoin="round"/>
<path d="M1060.2 582.2 L1062.2 616.0" fill="none" stroke="#121a12" stroke-width="1" stroke-linecap="round" stroke-linejoin="round"/>
<path d="M1080.3 590.2 L1082.3 616.0" fill="none" stroke="#121a12" stroke-width="1" stroke-linecap="round" stroke-linejoin="round"/>
<path d="M992.1 606.2 L1090.3 602.2" fill="none" stroke="#121a12" stroke-width="1" stroke-linecap="round" stroke-linejoin="round"/>
<path d="M1142.3 556.1 L1200.0 552.1" fill="none" stroke="#121a12" stroke-width="1" stroke-linecap="round" stroke-linejoin="round"/>
<path d="M1144.3 570.1 L1200.0 566.1" fill="none" stroke="#121a12" stroke-width="1" stroke-linecap="round" stroke-linejoin="round"/>
<path d="M1148.3 586.2 L1200.0 582.2" fill="none" stroke="#121a12" stroke-width="1" stroke-linecap="round" stroke-linejoin="round"/>
<path d="M1146.3 492.0 L1200.0 490.0" fill="none" stroke="#121a12" stroke-width="1" stroke-linecap="round" stroke-linejoin="round"/>
<path d="M1148.3 502.1 L1200.0 500.0" fill="none" stroke="#121a12" stroke-width="1" stroke-linecap="round" stroke-linejoin="round"/>
<path d="M647.7 674.1 L649.1 709.2" fill="none" stroke="#3a4a4a" stroke-width="1" stroke-linecap="round" stroke-linejoin="round"/>
<path d="M666.1 673.1 L668.1 708.2" fill="none" stroke="#3a4a4a" stroke-width="1" stroke-linecap="round" stroke-linejoin="round"/>
<path d="M859.4 606.0 L861.4 620.0" fill="none" stroke="#3a4a4a" stroke-width="1" stroke-linecap="round" stroke-linejoin="round"/>
<path d="M620.1 594.0 L625.1 644.1" fill="none" stroke="#121a12" stroke-width="1" stroke-linecap="round" stroke-linejoin="round"/>
<path d="M629.1 594.0 L634.1 644.1" fill="none" stroke="#121a12" stroke-width="1" stroke-linecap="round" stroke-linejoin="round"/>
<path d="M638.1 594.0 L643.1 644.1" fill="none" stroke="#121a12" stroke-width="1" stroke-linecap="round" stroke-linejoin="round"/>
<path d="M647.1 594.0 L652.1 644.1" fill="none" stroke="#121a12" stroke-width="1" stroke-linecap="round" stroke-linejoin="round"/>
<path d="M656.1 594.0 L661.1 644.1" fill="none" stroke="#121a12" stroke-width="1" stroke-linecap="round" stroke-linejoin="round"/>
<path d="M665.1 594.0 L670.1 644.1" fill="none" stroke="#121a12" stroke-width="1" stroke-linecap="round" stroke-linejoin="round"/>
<path d="M674.1 594.0 L679.1 644.1" fill="none" stroke="#121a12" stroke-width="1" stroke-linecap="round" stroke-linejoin="round"/>
<path d="M683.2 594.0 L688.2 644.1" fill="none" stroke="#121a12" stroke-width="1" stroke-linecap="round" stroke-linejoin="round"/>
<path d="M692.2 594.0 L697.2 644.1" fill="none" stroke="#121a12" stroke-width="1" stroke-linecap="round" stroke-linejoin="round"/>
<path d="M624.1 650.1 L626.1 732.2" fill="none" stroke="#121a12" stroke-width="1" stroke-linecap="round" stroke-linejoin="round"/>
<path d="M634.1 650.1 L636.1 732.2" fill="none" stroke="#121a12" stroke-width="1" stroke-linecap="round" stroke-linejoin="round"/>
<path d="M644.1 650.1 L646.1 732.2" fill="none" stroke="#121a12" stroke-width="1" stroke-linecap="round" stroke-linejoin="round"/>
<path d="M654.1 650.1 L656.1 732.2" fill="none" stroke="#121a12" stroke-width="1" stroke-linecap="round" stroke-linejoin="round"/>
<path d="M664.1 650.1 L666.1 732.2" fill="none" stroke="#121a12" stroke-width="1" stroke-linecap="round" stroke-linejoin="round"/>
<path d="M674.1 650.1 L676.1 732.2" fill="none" stroke="#121a12" stroke-width="1" stroke-linecap="round" stroke-linejoin="round"/>
<path d="M684.2 650.1 L686.2 732.2" fill="none" stroke="#121a12" stroke-width="1" stroke-linecap="round" stroke-linejoin="round"/>
<path d="M694.2 650.1 L696.2 732.2" fill="none" stroke="#121a12" stroke-width="1" stroke-linecap="round" stroke-linejoin="round"/>
<path d="M704.2 650.1 L706.2 732.2" fill="none" stroke="#121a12" stroke-width="1" stroke-linecap="round" stroke-linejoin="round"/>
<path d="M714.2 650.1 L716.2 732.2" fill="none" stroke="#121a12" stroke-width="1" stroke-linecap="round" stroke-linejoin="round"/>
<path d="M724.2 650.1 L726.2 732.2" fill="none" stroke="#121a12" stroke-width="1" stroke-linecap="round" stroke-linejoin="round"/>
<path d="M734.2 650.1 L736.2 732.2" fill="none" stroke="#121a12" stroke-width="1" stroke-linecap="round" stroke-linejoin="round"/>
<path d="M744.2 650.1 L746.2 732.2" fill="none" stroke="#121a12" stroke-width="1" stroke-linecap="round" stroke-linejoin="round"/>
<path d="M752.2 644.1 L754.2 726.2" fill="none" stroke="#121a12" stroke-width="1" stroke-linecap="round" stroke-linejoin="round"/>
<path d="M762.3 644.1 L764.3 726.2" fill="none" stroke="#121a12" stroke-width="1" stroke-linecap="round" stroke-linejoin="round"/>
<path d="M772.3 644.1 L774.3 726.2" fill="none" stroke="#121a12" stroke-width="1" stroke-linecap="round" stroke-linejoin="round"/>
<path d="M782.3 644.1 L784.3 726.2" fill="none" stroke="#121a12" stroke-width="1" stroke-linecap="round" stroke-linejoin="round"/>
<path d="M600.1 598.0 L696.2 596.0" fill="none" stroke="#121a12" stroke-width="1" stroke-linecap="round" stroke-linejoin="round"/>
<path d="M603.1 610.0 L698.2 608.0" fill="none" stroke="#121a12" stroke-width="1" stroke-linecap="round" stroke-linejoin="round"/>
<path d="M606.1 622.1 L698.2 620.0" fill="none" stroke="#121a12" stroke-width="1" stroke-linecap="round" stroke-linejoin="round"/>
<path d="M609.1 634.1 L700.2 632.1" fill="none" stroke="#121a12" stroke-width="1" stroke-linecap="round" stroke-linejoin="round"/>
<path d="M614.1 664.1 L748.2 661.1" fill="none" stroke="#121a12" stroke-width="1" stroke-linecap="round" stroke-linejoin="round"/>
<path d="M615.1 676.1 L786.3 673.1" fill="none" stroke="#121a12" stroke-width="1" stroke-linecap="round" stroke-linejoin="round"/>
<path d="M616.1 690.1 L788.3 686.1" fill="none" stroke="#121a12" stroke-width="1" stroke-linecap="round" stroke-linejoin="round"/>
<path d="M617.1 704.2 L780.3 700.1" fill="none" stroke="#121a12" stroke-width="1" stroke-linecap="round" stroke-linejoin="round"/>
<path d="M618.1 718.2 L760.3 714.2" fill="none" stroke="#121a12" stroke-width="1" stroke-linecap="round" stroke-linejoin="round"/>
<path d="M572.0 666.1 C574.0 666.8 581.7 666.8 584.0 670.1 C586.4 673.4 588.0 682.8 586.0 686.1 C584.0 689.5 574.4 689.5 572.0 690.1" fill="none" stroke="#121a12" stroke-width="1" stroke-linecap="round" stroke-linejoin="round"/>
<path d="M572.0 702.2 L590.0 706.2" fill="none" stroke="#121a12" stroke-width="1" stroke-linecap="round" stroke-linejoin="round"/>
<path d="M572.0 632.1 L608.1 630.1" fill="none" stroke="#121a12" stroke-width="1" stroke-linecap="round" stroke-linejoin="round"/>
<path d="M574.0 606.0 L604.1 604.0" fill="none" stroke="#121a12" stroke-width="1" stroke-linecap="round" stroke-linejoin="round"/>
<path d="M580.0 632.1 L582.0 652.1" fill="none" stroke="#121a12" stroke-width="1" stroke-linecap="round" stroke-linejoin="round"/>
<path d="M594.0 631.1 L596.0 652.1" fill="none" stroke="#121a12" stroke-width="1" stroke-linecap="round" stroke-linejoin="round"/>
<path d="M806.3 682.1 C808.6 682.0 817.7 682.8 820.3 681.1 C823.0 679.5 822.0 673.6 822.3 672.1" fill="none" stroke="#121a12" stroke-width="1" stroke-linecap="round" stroke-linejoin="round"/>
<path d="M840.4 582.0 L842.4 604.0" fill="none" stroke="#121a12" stroke-width="1" stroke-linecap="round" stroke-linejoin="round"/>
<path d="M852.4 632.1 L880.0 630.1" fill="none" stroke="#121a12" stroke-width="1" stroke-linecap="round" stroke-linejoin="round"/>
<path d="M854.4 648.1 L880.0 646.1" fill="none" stroke="#121a12" stroke-width="1" stroke-linecap="round" stroke-linejoin="round"/>
<path d="M872.4 666.1 L880.0 665.1" fill="none" stroke="#121a12" stroke-width="1" stroke-linecap="round" stroke-linejoin="round"/>
<path d="M848.4 706.2 L880.0 702.2" fill="none" stroke="#121a12" stroke-width="1" stroke-linecap="round" stroke-linejoin="round"/>
<path d="M836.3 714.2 L844.4 732.2" fill="none" stroke="#121a12" stroke-width="1" stroke-linecap="round" stroke-linejoin="round"/>
<path d="M820.3 720.2 L826.3 732.2" fill="none" stroke="#121a12" stroke-width="1" stroke-linecap="round" stroke-linejoin="round"/>
<path d="M856.4 704.2 L860.4 732.2" fill="none" stroke="#121a12" stroke-width="1" stroke-linecap="round" stroke-linejoin="round"/>
<path d="M872.4 700.1 L876.4 732.2" fill="none" stroke="#121a12" stroke-width="1" stroke-linecap="round" stroke-linejoin="round"/>
<path d="M909.0 626.1 L917.0 680.1" fill="none" stroke="#3a5a58" stroke-width="1.6" stroke-linecap="round" stroke-linejoin="round"/>
<path d="M950.1 634.1 L953.1 648.1" fill="none" stroke="#3a5a58" stroke-width="1.4" stroke-linecap="round" stroke-linejoin="round"/>
<path d="M880.0 640.1 L930.1 633.1" fill="none" stroke="#121a12" stroke-width="1" stroke-linecap="round" stroke-linejoin="round"/>
<path d="M880.0 676.1 L938.1 666.1" fill="none" stroke="#121a12" stroke-width="1" stroke-linecap="round" stroke-linejoin="round"/>
<path d="M940.1 632.1 L984.1 625.1" fill="none" stroke="#121a12" stroke-width="1" stroke-linecap="round" stroke-linejoin="round"/>
<path d="M986.1 624.1 L1020.2 619.0" fill="none" stroke="#121a12" stroke-width="1" stroke-linecap="round" stroke-linejoin="round"/>
<path d="M944.1 666.1 L996.1 657.1" fill="none" stroke="#121a12" stroke-width="1" stroke-linecap="round" stroke-linejoin="round"/>
<path d="M944.1 694.1 L1000.2 680.1" fill="none" stroke="#121a12" stroke-width="1" stroke-linecap="round" stroke-linejoin="round"/>
<path d="M886.0 706.2 L940.1 694.1" fill="none" stroke="#121a12" stroke-width="1" stroke-linecap="round" stroke-linejoin="round"/>
<path d="M892.0 626.1 L902.0 706.2" fill="none" stroke="#121a12" stroke-width="1" stroke-linecap="round" stroke-linejoin="round"/>
<path d="M910.0 622.1 L914.0 642.1" fill="none" stroke="#121a12" stroke-width="1" stroke-linecap="round" stroke-linejoin="round"/>
<path d="M920.1 622.1 L930.1 694.1" fill="none" stroke="#121a12" stroke-width="1" stroke-linecap="round" stroke-linejoin="round"/>
<path d="M948.1 620.0 L960.1 694.1" fill="none" stroke="#121a12" stroke-width="1" stroke-linecap="round" stroke-linejoin="round"/>
<path d="M964.1 616.0 L974.1 688.1" fill="none" stroke="#121a12" stroke-width="1" stroke-linecap="round" stroke-linejoin="round"/>
<path d="M1028.2 620.0 L1088.3 612.0" fill="none" stroke="#121a12" stroke-width="1" stroke-linecap="round" stroke-linejoin="round"/>
<path d="M1032.2 646.1 L1090.3 642.1" fill="none" stroke="#121a12" stroke-width="1" stroke-linecap="round" stroke-linejoin="round"/>
<path d="M1034.2 658.1 L1044.2 657.1" fill="none" stroke="#121a12" stroke-width="1" stroke-linecap="round" stroke-linejoin="round"/>
<path d="M1050.2 600.0 L1060.2 654.1" fill="none" stroke="#121a12" stroke-width="1" stroke-linecap="round" stroke-linejoin="round"/>
<path d="M1064.2 598.0 L1072.2 642.1" fill="none" stroke="#121a12" stroke-width="1" stroke-linecap="round" stroke-linejoin="round"/>
<path d="M1076.2 596.0 L1082.3 640.1" fill="none" stroke="#121a12" stroke-width="1" stroke-linecap="round" stroke-linejoin="round"/>
<path d="M1020.2 596.0 L1080.3 588.0" fill="none" stroke="#121a12" stroke-width="1" stroke-linecap="round" stroke-linejoin="round"/>
<path d="M1080.3 710.2 L1100.3 722.2" fill="none" stroke="#121a12" stroke-width="1" stroke-linecap="round" stroke-linejoin="round"/>
<path d="M1088.3 682.1 C1088.9 684.1 1090.3 693.1 1092.3 694.1 C1094.3 695.1 1098.9 689.1 1100.3 688.1" fill="none" stroke="#121a12" stroke-width="1" stroke-linecap="round" stroke-linejoin="round"/>
<path d="M1128.3 602.0 L1200.0 594.0" fill="none" stroke="#121a12" stroke-width="1" stroke-linecap="round" stroke-linejoin="round"/>
<path d="M1130.3 616.0 L1200.0 610.0" fill="none" stroke="#121a12" stroke-width="1" stroke-linecap="round" stroke-linejoin="round"/>
<path d="M1140.3 652.1 L1200.0 648.1" fill="none" stroke="#121a12" stroke-width="1" stroke-linecap="round" stroke-linejoin="round"/>
<path d="M1142.3 662.1 L1200.0 660.1" fill="none" stroke="#121a12" stroke-width="1" stroke-linecap="round" stroke-linejoin="round"/>
<path d="M1160.4 676.1 L1200.0 678.1" fill="none" stroke="#121a12" stroke-width="1" stroke-linecap="round" stroke-linejoin="round"/>
<path d="M1162.4 690.1 L1200.0 692.1" fill="none" stroke="#121a12" stroke-width="1" stroke-linecap="round" stroke-linejoin="round"/>
<path d="M1164.4 706.2 L1200.0 708.2" fill="none" stroke="#121a12" stroke-width="1" stroke-linecap="round" stroke-linejoin="round"/>
<path d="M1156.3 582.0 L1164.4 662.1" fill="none" stroke="#121a12" stroke-width="1" stroke-linecap="round" stroke-linejoin="round"/>
<path d="M1188.4 582.0 L1198.4 662.1" fill="none" stroke="#121a12" stroke-width="1" stroke-linecap="round" stroke-linejoin="round"/>
<path d="M1140.3 674.1 L1148.3 732.2" fill="none" stroke="#121a12" stroke-width="1" stroke-linecap="round" stroke-linejoin="round"/>
<path d="M1176.4 674.1 L1180.4 732.2" fill="none" stroke="#121a12" stroke-width="1" stroke-linecap="round" stroke-linejoin="round"/>
<path d="M1120.3 672.1 L1128.3 712.2" fill="none" stroke="#121a12" stroke-width="1" stroke-linecap="round" stroke-linejoin="round"/>
<path d="M1186.0 482.0 L1188.0 514.0" fill="none" stroke="#121a12" stroke-width="1" stroke-linecap="round" stroke-linejoin="round"/>
<path d="M1198.0 486.0 L1200.0 516.0" fill="none" stroke="#121a12" stroke-width="1" stroke-linecap="round" stroke-linejoin="round"/>
<path d="M1210.0 492.0 L1211.0 516.0" fill="none" stroke="#121a12" stroke-width="1" stroke-linecap="round" stroke-linejoin="round"/>
<path d="M1226.0 502.0 L1258.0 498.0" fill="none" stroke="#121a12" stroke-width="1" stroke-linecap="round" stroke-linejoin="round"/>
<path d="M1226.0 514.0 L1258.0 510.0" fill="none" stroke="#121a12" stroke-width="1" stroke-linecap="round" stroke-linejoin="round"/>
<path d="M1230.0 522.0 L1242.0 534.0" fill="none" stroke="#121a12" stroke-width="1" stroke-linecap="round" stroke-linejoin="round"/>
<path d="M1182.0 522.0 L1184.0 540.0" fill="none" stroke="#121a12" stroke-width="1" stroke-linecap="round" stroke-linejoin="round"/>
<path d="M1194.0 520.0 L1196.0 538.0" fill="none" stroke="#121a12" stroke-width="1" stroke-linecap="round" stroke-linejoin="round"/>
<path d="M1206.0 520.0 L1208.0 536.0" fill="none" stroke="#121a12" stroke-width="1" stroke-linecap="round" stroke-linejoin="round"/>
<path d="M1190.0 552.0 L1194.0 572.0" fill="none" stroke="#121a12" stroke-width="1" stroke-linecap="round" stroke-linejoin="round"/>
<path d="M1202.0 550.0 L1206.0 571.0" fill="none" stroke="#121a12" stroke-width="1" stroke-linecap="round" stroke-linejoin="round"/>
<path d="M1232.0 532.0 L1238.0 568.0" fill="none" stroke="#121a12" stroke-width="1" stroke-linecap="round" stroke-linejoin="round"/>
<path d="M1246.0 528.0 L1252.0 566.0" fill="none" stroke="#121a12" stroke-width="1" stroke-linecap="round" stroke-linejoin="round"/>
<path d="M1186.0 580.0 L1190.0 596.0" fill="none" stroke="#121a12" stroke-width="1" stroke-linecap="round" stroke-linejoin="round"/>
<path d="M1202.0 578.0 L1206.0 594.0" fill="none" stroke="#121a12" stroke-width="1" stroke-linecap="round" stroke-linejoin="round"/>
<path d="M1226.0 574.0 L1230.0 615.8" fill="none" stroke="#121a12" stroke-width="1" stroke-linecap="round" stroke-linejoin="round"/>
<path d="M1242.0 570.0 L1248.0 615.8" fill="none" stroke="#121a12" stroke-width="1" stroke-linecap="round" stroke-linejoin="round"/>
<path d="M1222.0 582.0 L1258.0 578.0" fill="none" stroke="#121a12" stroke-width="1" stroke-linecap="round" stroke-linejoin="round"/>
<path d="M1224.0 602.0 L1258.0 598.0" fill="none" stroke="#121a12" stroke-width="1" stroke-linecap="round" stroke-linejoin="round"/>
<path d="M1192.0 676.0 L1194.0 712.0" fill="none" stroke="#121a12" stroke-width="1" stroke-linecap="round" stroke-linejoin="round"/>
<path d="M1202.0 676.0 L1204.0 712.0" fill="none" stroke="#121a12" stroke-width="1" stroke-linecap="round" stroke-linejoin="round"/>
<path d="M1212.0 676.0 L1214.0 712.0" fill="none" stroke="#121a12" stroke-width="1" stroke-linecap="round" stroke-linejoin="round"/>
<path d="M1222.0 676.0 L1224.0 712.0" fill="none" stroke="#121a12" stroke-width="1" stroke-linecap="round" stroke-linejoin="round"/>
<path d="M1232.0 676.0 L1234.0 712.0" fill="none" stroke="#121a12" stroke-width="1" stroke-linecap="round" stroke-linejoin="round"/>
<path d="M1242.0 676.0 L1244.0 712.0" fill="none" stroke="#121a12" stroke-width="1" stroke-linecap="round" stroke-linejoin="round"/>
<path d="M1252.0 676.0 L1254.0 712.0" fill="none" stroke="#121a12" stroke-width="1" stroke-linecap="round" stroke-linejoin="round"/>
<path d="M1162.0 686.0 L1258.0 690.0" fill="none" stroke="#121a12" stroke-width="1" stroke-linecap="round" stroke-linejoin="round"/>
<path d="M1163.0 698.0 L1258.0 702.0" fill="none" stroke="#121a12" stroke-width="1" stroke-linecap="round" stroke-linejoin="round"/>
<path d="M1166.0 710.0 L1258.0 712.0" fill="none" stroke="#121a12" stroke-width="1" stroke-linecap="round" stroke-linejoin="round"/>
<path d="M1102.0 678.0 L1158.0 682.0" fill="none" stroke="#121a12" stroke-width="1" stroke-linecap="round" stroke-linejoin="round"/>
<path d="M1106.0 694.0 L1160.0 698.0" fill="none" stroke="#121a12" stroke-width="1" stroke-linecap="round" stroke-linejoin="round"/>
<path d="M1114.0 676.0 L1120.0 712.0" fill="none" stroke="#121a12" stroke-width="1" stroke-linecap="round" stroke-linejoin="round"/>
<path d="M1134.0 674.0 L1140.0 712.0" fill="none" stroke="#121a12" stroke-width="1" stroke-linecap="round" stroke-linejoin="round"/>
<path d="M1196.0 600.0 L1198.0 622.0" fill="none" stroke="#121a12" stroke-width="1" stroke-linecap="round" stroke-linejoin="round"/>
<path d="M1206.0 598.0 L1210.0 648.0" fill="none" stroke="#121a12" stroke-width="1" stroke-linecap="round" stroke-linejoin="round"/>
<path d="M1238.0 600.0 L1242.0 642.0" fill="none" stroke="#121a12" stroke-width="1" stroke-linecap="round" stroke-linejoin="round"/>
<path d="M1190.0 618.0 L1258.0 612.0" fill="none" stroke="#121a12" stroke-width="1" stroke-linecap="round" stroke-linejoin="round"/>
<path d="M888.0 625.0 L895.6 692.1" fill="none" stroke="#121a12" stroke-width="1" stroke-linecap="round" stroke-linejoin="round"/>
<path d="M897.2 623.5 L904.8 689.8" fill="none" stroke="#121a12" stroke-width="1" stroke-linecap="round" stroke-linejoin="round"/>
<path d="M906.4 622.0 L914.0 687.5" fill="none" stroke="#121a12" stroke-width="1" stroke-linecap="round" stroke-linejoin="round"/>
<path d="M915.6 620.6 L923.3 685.2" fill="none" stroke="#121a12" stroke-width="1" stroke-linecap="round" stroke-linejoin="round"/>
<path d="M924.9 619.1 L932.5 682.9" fill="none" stroke="#121a12" stroke-width="1" stroke-linecap="round" stroke-linejoin="round"/>
<path d="M934.1 617.6 L941.7 680.6" fill="none" stroke="#121a12" stroke-width="1" stroke-linecap="round" stroke-linejoin="round"/>
<path d="M943.3 616.1 L950.9 678.3" fill="none" stroke="#121a12" stroke-width="1" stroke-linecap="round" stroke-linejoin="round"/>
<path d="M952.5 614.7 L960.1 676.0" fill="none" stroke="#121a12" stroke-width="1" stroke-linecap="round" stroke-linejoin="round"/>
<path d="M961.7 613.2 L969.3 673.7" fill="none" stroke="#121a12" stroke-width="1" stroke-linecap="round" stroke-linejoin="round"/>
<path d="M970.9 611.7 L978.5 671.4" fill="none" stroke="#121a12" stroke-width="1" stroke-linecap="round" stroke-linejoin="round"/>
<path d="M980.1 610.2 L987.7 669.1" fill="none" stroke="#121a12" stroke-width="1" stroke-linecap="round" stroke-linejoin="round"/>
<path d="M989.3 608.8 L996.9 666.8" fill="none" stroke="#121a12" stroke-width="1" stroke-linecap="round" stroke-linejoin="round"/>
<path d="M998.5 607.3 L1006.2 664.5" fill="none" stroke="#121a12" stroke-width="1" stroke-linecap="round" stroke-linejoin="round"/>
<path d="M1007.8 605.8 L1015.4 662.2" fill="none" stroke="#121a12" stroke-width="1" stroke-linecap="round" stroke-linejoin="round"/>
<path d="M880.0 632.1 L1008.2 611.0" fill="none" stroke="#121a12" stroke-width="1" stroke-linecap="round" stroke-linejoin="round"/>
<path d="M880.0 642.5 L1008.2 621.4" fill="none" stroke="#121a12" stroke-width="1" stroke-linecap="round" stroke-linejoin="round"/>
<path d="M880.0 652.9 L1008.2 631.9" fill="none" stroke="#121a12" stroke-width="1" stroke-linecap="round" stroke-linejoin="round"/>
<path d="M880.0 663.3 L1008.2 642.3" fill="none" stroke="#121a12" stroke-width="1" stroke-linecap="round" stroke-linejoin="round"/>
<path d="M880.0 673.7 L1008.2 652.7" fill="none" stroke="#121a12" stroke-width="1" stroke-linecap="round" stroke-linejoin="round"/>
<path d="M880.0 684.1 L1008.2 663.1" fill="none" stroke="#121a12" stroke-width="1" stroke-linecap="round" stroke-linejoin="round"/>
<path d="M1024.2 606.0 L1032.2 662.1" fill="none" stroke="#121a12" stroke-width="1" stroke-linecap="round" stroke-linejoin="round"/>
<path d="M1033.8 604.7 L1041.8 661.1" fill="none" stroke="#121a12" stroke-width="1" stroke-linecap="round" stroke-linejoin="round"/>
<path d="M1043.4 603.3 L1051.4 660.2" fill="none" stroke="#121a12" stroke-width="1" stroke-linecap="round" stroke-linejoin="round"/>
<path d="M1053.0 602.0 L1061.0 659.2" fill="none" stroke="#121a12" stroke-width="1" stroke-linecap="round" stroke-linejoin="round"/>
<path d="M1062.6 600.6 L1070.6 658.3" fill="none" stroke="#121a12" stroke-width="1" stroke-linecap="round" stroke-linejoin="round"/>
<path d="M1072.2 599.3 L1080.3 657.3" fill="none" stroke="#121a12" stroke-width="1" stroke-linecap="round" stroke-linejoin="round"/>
<path d="M1081.9 598.0 L1089.9 656.3" fill="none" stroke="#121a12" stroke-width="1" stroke-linecap="round" stroke-linejoin="round"/>
<path d="M1091.5 596.6 L1099.5 655.4" fill="none" stroke="#121a12" stroke-width="1" stroke-linecap="round" stroke-linejoin="round"/>
<path d="M1142.0 522.0 L1150.0 615.8" fill="none" stroke="#0f1512" stroke-width="1.2" stroke-linecap="round" stroke-linejoin="round"/>
<path d="M1151.0 522.0 L1159.0 615.8" fill="none" stroke="#0f1512" stroke-width="1.2" stroke-linecap="round" stroke-linejoin="round"/>
<path d="M1160.0 522.0 L1168.0 615.8" fill="none" stroke="#0f1512" stroke-width="1.2" stroke-linecap="round" stroke-linejoin="round"/>
<path d="M1169.0 522.0 L1177.0 615.8" fill="none" stroke="#0f1512" stroke-width="1.2" stroke-linecap="round" stroke-linejoin="round"/>
<path d="M1178.0 522.0 L1186.0 615.8" fill="none" stroke="#0f1512" stroke-width="1.2" stroke-linecap="round" stroke-linejoin="round"/>
<path d="M1187.0 522.0 L1195.0 615.8" fill="none" stroke="#0f1512" stroke-width="1.2" stroke-linecap="round" stroke-linejoin="round"/>
<path d="M1196.0 522.0 L1204.0 615.8" fill="none" stroke="#0f1512" stroke-width="1.2" stroke-linecap="round" stroke-linejoin="round"/>
<path d="M1205.0 522.0 L1213.0 615.8" fill="none" stroke="#0f1512" stroke-width="1.2" stroke-linecap="round" stroke-linejoin="round"/>
<path d="M1214.0 522.0 L1222.0 615.8" fill="none" stroke="#0f1512" stroke-width="1.2" stroke-linecap="round" stroke-linejoin="round"/>
<path d="M1223.0 522.0 L1231.0 615.8" fill="none" stroke="#0f1512" stroke-width="1.2" stroke-linecap="round" stroke-linejoin="round"/>
<path d="M1232.0 522.0 L1240.0 615.8" fill="none" stroke="#0f1512" stroke-width="1.2" stroke-linecap="round" stroke-linejoin="round"/>
<path d="M1241.0 522.0 L1249.0 615.8" fill="none" stroke="#0f1512" stroke-width="1.2" stroke-linecap="round" stroke-linejoin="round"/>
<path d="M1250.0 522.0 L1258.0 615.8" fill="none" stroke="#0f1512" stroke-width="1.2" stroke-linecap="round" stroke-linejoin="round"/>
<path d="M1138.0 528.0 L1258.0 510.0" fill="none" stroke="#0f1512" stroke-width="1.2" stroke-linecap="round" stroke-linejoin="round"/>
<path d="M1138.0 539.0 L1258.0 521.0" fill="none" stroke="#0f1512" stroke-width="1.2" stroke-linecap="round" stroke-linejoin="round"/>
<path d="M1138.0 550.0 L1258.0 532.0" fill="none" stroke="#0f1512" stroke-width="1.2" stroke-linecap="round" stroke-linejoin="round"/>
<path d="M1138.0 561.0 L1258.0 543.0" fill="none" stroke="#0f1512" stroke-width="1.2" stroke-linecap="round" stroke-linejoin="round"/>
<path d="M1138.0 572.0 L1258.0 554.0" fill="none" stroke="#0f1512" stroke-width="1.2" stroke-linecap="round" stroke-linejoin="round"/>
<path d="M1138.0 583.0 L1258.0 565.0" fill="none" stroke="#0f1512" stroke-width="1.2" stroke-linecap="round" stroke-linejoin="round"/>
<path d="M1138.0 594.0 L1258.0 576.0" fill="none" stroke="#0f1512" stroke-width="1.2" stroke-linecap="round" stroke-linejoin="round"/>
<path d="M1138.0 605.0 L1258.0 587.0" fill="none" stroke="#0f1512" stroke-width="1.2" stroke-linecap="round" stroke-linejoin="round"/>
<path d="M1138.0 616.0 L1258.0 598.0" fill="none" stroke="#0f1512" stroke-width="1.2" stroke-linecap="round" stroke-linejoin="round"/>
<path d="M1126.0 582.0 L1137.0 666.0" fill="none" stroke="#0f1512" stroke-width="1.2" stroke-linecap="round" stroke-linejoin="round"/>
<path d="M1135.2 582.0 L1146.2 666.0" fill="none" stroke="#0f1512" stroke-width="1.2" stroke-linecap="round" stroke-linejoin="round"/>
<path d="M1144.4 582.0 L1155.4 666.0" fill="none" stroke="#0f1512" stroke-width="1.2" stroke-linecap="round" stroke-linejoin="round"/>
<path d="M1153.6 582.0 L1164.6 666.0" fill="none" stroke="#0f1512" stroke-width="1.2" stroke-linecap="round" stroke-linejoin="round"/>
<path d="M1162.8 582.0 L1173.8 666.0" fill="none" stroke="#0f1512" stroke-width="1.2" stroke-linecap="round" stroke-linejoin="round"/>
<path d="M1172.0 582.0 L1183.0 666.0" fill="none" stroke="#0f1512" stroke-width="1.2" stroke-linecap="round" stroke-linejoin="round"/>
<path d="M1181.2 582.0 L1192.2 666.0" fill="none" stroke="#0f1512" stroke-width="1.2" stroke-linecap="round" stroke-linejoin="round"/>
<path d="M1190.4 582.0 L1201.4 666.0" fill="none" stroke="#0f1512" stroke-width="1.2" stroke-linecap="round" stroke-linejoin="round"/>
<path d="M1199.6 582.0 L1210.6 666.0" fill="none" stroke="#0f1512" stroke-width="1.2" stroke-linecap="round" stroke-linejoin="round"/>
<path d="M1208.8 582.0 L1219.8 666.0" fill="none" stroke="#0f1512" stroke-width="1.2" stroke-linecap="round" stroke-linejoin="round"/>
<path d="M1218.0 582.0 L1229.0 666.0" fill="none" stroke="#0f1512" stroke-width="1.2" stroke-linecap="round" stroke-linejoin="round"/>
<path d="M1227.2 582.0 L1238.2 666.0" fill="none" stroke="#0f1512" stroke-width="1.2" stroke-linecap="round" stroke-linejoin="round"/>
<path d="M1236.4 582.0 L1247.4 666.0" fill="none" stroke="#0f1512" stroke-width="1.2" stroke-linecap="round" stroke-linejoin="round"/>
<path d="M1245.6 582.0 L1256.6 666.0" fill="none" stroke="#0f1512" stroke-width="1.2" stroke-linecap="round" stroke-linejoin="round"/>
<path d="M1254.8 582.0 L1265.8 666.0" fill="none" stroke="#0f1512" stroke-width="1.2" stroke-linecap="round" stroke-linejoin="round"/>
<path d="M1124.0 594.0 L1258.0 577.0" fill="none" stroke="#0f1512" stroke-width="1.2" stroke-linecap="round" stroke-linejoin="round"/>
<path d="M1124.0 604.4 L1258.0 587.4" fill="none" stroke="#0f1512" stroke-width="1.2" stroke-linecap="round" stroke-linejoin="round"/>
<path d="M1124.0 614.8 L1258.0 597.8" fill="none" stroke="#0f1512" stroke-width="1.2" stroke-linecap="round" stroke-linejoin="round"/>
<path d="M1124.0 625.2 L1258.0 608.2" fill="none" stroke="#0f1512" stroke-width="1.2" stroke-linecap="round" stroke-linejoin="round"/>
<path d="M1124.0 635.6 L1258.0 618.6" fill="none" stroke="#0f1512" stroke-width="1.2" stroke-linecap="round" stroke-linejoin="round"/>
<path d="M1124.0 646.0 L1258.0 629.0" fill="none" stroke="#0f1512" stroke-width="1.2" stroke-linecap="round" stroke-linejoin="round"/>
<path d="M1124.0 656.4 L1258.0 639.4" fill="none" stroke="#0f1512" stroke-width="1.2" stroke-linecap="round" stroke-linejoin="round"/>
<path d="M1124.0 666.8 L1258.0 649.8" fill="none" stroke="#0f1512" stroke-width="1.2" stroke-linecap="round" stroke-linejoin="round"/>
<path d="M1004.2 342.0 L1018.2 438.2" fill="none" stroke="#121a12" stroke-width="1" stroke-linecap="round" stroke-linejoin="round"/>
<path d="M1012.6 342.0 L1026.6 438.2" fill="none" stroke="#121a12" stroke-width="1" stroke-linecap="round" stroke-linejoin="round"/>
<path d="M1021.0 342.0 L1035.0 438.2" fill="none" stroke="#121a12" stroke-width="1" stroke-linecap="round" stroke-linejoin="round"/>
<path d="M1029.4 342.0 L1043.4 438.2" fill="none" stroke="#121a12" stroke-width="1" stroke-linecap="round" stroke-linejoin="round"/>
<path d="M1037.8 342.0 L1051.8 438.2" fill="none" stroke="#121a12" stroke-width="1" stroke-linecap="round" stroke-linejoin="round"/>
<path d="M1046.2 342.0 L1060.2 438.2" fill="none" stroke="#121a12" stroke-width="1" stroke-linecap="round" stroke-linejoin="round"/>
<path d="M1054.6 342.0 L1068.6 438.2" fill="none" stroke="#121a12" stroke-width="1" stroke-linecap="round" stroke-linejoin="round"/>
<path d="M1063.0 342.0 L1077.0 438.2" fill="none" stroke="#121a12" stroke-width="1" stroke-linecap="round" stroke-linejoin="round"/>
<path d="M1071.4 342.0 L1085.5 438.2" fill="none" stroke="#121a12" stroke-width="1" stroke-linecap="round" stroke-linejoin="round"/>
<path d="M1079.8 342.0 L1093.9 438.2" fill="none" stroke="#121a12" stroke-width="1" stroke-linecap="round" stroke-linejoin="round"/>
<path d="M1088.3 342.0 L1102.3 438.2" fill="none" stroke="#121a12" stroke-width="1" stroke-linecap="round" stroke-linejoin="round"/>
<path d="M1096.7 342.0 L1110.7 438.2" fill="none" stroke="#121a12" stroke-width="1" stroke-linecap="round" stroke-linejoin="round"/>
<path d="M1095.8 174.0 L1184.3 176.4" fill="none" stroke="#121a12" stroke-width="1" stroke-linecap="round" stroke-linejoin="round"/>
<path d="M1096.4 181.6 L1184.3 184.0" fill="none" stroke="#121a12" stroke-width="1" stroke-linecap="round" stroke-linejoin="round"/>
<path d="M1097.0 189.2 L1184.3 191.6" fill="none" stroke="#121a12" stroke-width="1" stroke-linecap="round" stroke-linejoin="round"/>
<path d="M1097.6 196.9 L1184.3 199.3" fill="none" stroke="#121a12" stroke-width="1" stroke-linecap="round" stroke-linejoin="round"/>
<path d="M1098.2 204.5 L1184.3 206.9" fill="none" stroke="#121a12" stroke-width="1" stroke-linecap="round" stroke-linejoin="round"/>
<path d="M1098.8 212.1 L1184.3 214.5" fill="none" stroke="#121a12" stroke-width="1" stroke-linecap="round" stroke-linejoin="round"/>
<path d="M1099.4 219.7 L1184.3 222.1" fill="none" stroke="#121a12" stroke-width="1" stroke-linecap="round" stroke-linejoin="round"/>
<path d="M1100.1 227.3 L1184.3 229.7" fill="none" stroke="#121a12" stroke-width="1" stroke-linecap="round" stroke-linejoin="round"/>
<path d="M1100.7 234.9 L1184.3 237.3" fill="none" stroke="#121a12" stroke-width="1" stroke-linecap="round" stroke-linejoin="round"/>
<path d="M1101.3 242.5 L1184.3 244.9" fill="none" stroke="#121a12" stroke-width="1" stroke-linecap="round" stroke-linejoin="round"/>
<path d="M1101.9 250.1 L1184.3 252.5" fill="none" stroke="#121a12" stroke-width="1" stroke-linecap="round" stroke-linejoin="round"/>
<path d="M1102.5 257.7 L1184.3 260.1" fill="none" stroke="#121a12" stroke-width="1" stroke-linecap="round" stroke-linejoin="round"/>
<path d="M1103.1 265.3 L1184.3 267.7" fill="none" stroke="#121a12" stroke-width="1" stroke-linecap="round" stroke-linejoin="round"/>
<path d="M1103.7 272.9 L1184.3 275.4" fill="none" stroke="#121a12" stroke-width="1" stroke-linecap="round" stroke-linejoin="round"/>
<path d="M1104.3 280.6 L1184.3 283.0" fill="none" stroke="#121a12" stroke-width="1" stroke-linecap="round" stroke-linejoin="round"/>
<path d="M1104.9 288.2 L1184.3 290.6" fill="none" stroke="#121a12" stroke-width="1" stroke-linecap="round" stroke-linejoin="round"/>
<path d="M1105.5 295.8 L1184.3 298.2" fill="none" stroke="#121a12" stroke-width="1" stroke-linecap="round" stroke-linejoin="round"/>
<path d="M1106.1 303.4 L1184.3 305.8" fill="none" stroke="#121a12" stroke-width="1" stroke-linecap="round" stroke-linejoin="round"/>
</g>
<g id="L-road">
<path d="M62.1 0.0 C72.8 5.8 109.8 27.0 126.2 35.0 C142.5 43.1 147.9 42.6 160.2 48.1 C172.5 53.6 186.9 60.4 200.3 68.1 C213.6 75.8 227.6 85.9 240.3 94.1 C253.0 102.3 270.3 113.3 276.3 117.1" fill="none" stroke="#0b0e10" stroke-width="2.2" stroke-linecap="round" stroke-linejoin="round"/>
<path d="M280.4 122.2 L320.0 113.1" fill="none" stroke="#0b0e10" stroke-width="2.2" stroke-linecap="round" stroke-linejoin="round"/>
<path d="M128.2 36.0 C127.1 38.4 122.6 45.4 121.6 50.1 C120.6 54.7 121.1 53.7 122.2 64.1 C123.3 74.4 126.2 97.2 128.2 112.1 C130.1 127.1 132.8 147.0 133.8 154.0" fill="none" stroke="#0b0e10" stroke-width="2.2" stroke-linecap="round" stroke-linejoin="round"/>
<path d="M121.6 63.7 C113.3 64.6 84.0 65.3 72.1 69.1 C60.2 72.8 56.4 82.7 50.1 86.1 C43.7 89.5 36.7 88.9 34.0 89.5" fill="none" stroke="#0b0e10" stroke-width="2" stroke-linecap="round" stroke-linejoin="round"/>
<path d="M0.0 57.1 C3.3 58.6 14.7 61.6 20.0 66.1 C25.4 70.6 29.9 76.4 32.0 84.1 C34.2 91.8 33.2 100.5 33.0 112.1 C32.9 123.8 31.4 147.0 31.0 154.0" fill="none" stroke="#0b0e10" stroke-width="2.2" stroke-linecap="round" stroke-linejoin="round"/>
<path d="M0.0 67.1 L8.0 65.1" fill="none" stroke="#0b0e10" stroke-width="1.6" stroke-linecap="round" stroke-linejoin="round"/>
<path d="M144.6 0.0 C144.7 5.0 142.7 22.0 145.2 30.0 C147.6 38.1 156.9 45.4 159.2 48.5" fill="none" stroke="#0b0e10" stroke-width="1.8" stroke-linecap="round" stroke-linejoin="round"/>
<path d="M481.4 0.0 C481.1 3.7 478.6 13.4 479.4 22.0 C480.2 30.7 484.4 44.4 486.2 52.1 C488.0 59.7 489.1 62.7 490.2 68.1 C491.3 73.4 491.1 79.1 492.6 84.1 C494.2 89.1 496.8 93.1 499.4 98.1 C502.0 103.1 504.8 107.5 508.2 114.1 C511.7 120.8 516.2 131.5 520.3 138.2 C524.3 144.8 530.3 151.4 532.3 154.0" fill="none" stroke="#0b0e10" stroke-width="2.4" stroke-linecap="round" stroke-linejoin="round"/>
<path d="M405.1 0.0 C405.9 3.7 407.6 14.7 410.1 22.0 C412.6 29.4 417.0 38.0 420.1 44.1 C423.3 50.1 427.9 54.1 429.1 58.1 C430.3 62.1 430.5 64.4 427.3 68.1 C424.2 71.8 416.3 76.4 410.1 80.1 C403.9 83.8 399.4 86.8 390.1 90.1 C380.7 93.5 365.7 96.3 354.0 100.1 C342.4 104.0 325.7 111.0 320.0 113.1" fill="none" stroke="#0b0e10" stroke-width="2.4" stroke-linecap="round" stroke-linejoin="round"/>
<path d="M354.4 100.1 C354.9 103.1 354.6 111.8 357.2 118.1 C359.8 124.5 365.5 132.2 370.1 138.2 C374.6 144.1 382.1 151.4 384.5 154.0" fill="none" stroke="#0b0e10" stroke-width="2.4" stroke-linecap="round" stroke-linejoin="round"/>
<path d="M480.2 33.0 C489.2 33.5 507.6 35.2 534.3 36.0 C560.9 36.9 622.4 37.7 640.0 38.0" fill="none" stroke="#0b0e10" stroke-width="2.4" stroke-linecap="round" stroke-linejoin="round"/>
<path d="M535.3 0.0 L534.3 36.0" fill="none" stroke="#0b0e10" stroke-width="2" stroke-linecap="round" stroke-linejoin="round"/>
<path d="M573.3 36.4 C572.8 43.7 572.5 64.8 570.3 80.1 C568.1 95.4 562.0 115.8 560.3 128.2 C558.6 140.5 560.3 149.7 560.3 154.0" fill="none" stroke="#0b0e10" stroke-width="2" stroke-linecap="round" stroke-linejoin="round"/>
<path d="M599.3 37.2 C598.8 47.7 597.2 83.0 596.3 100.1 C595.5 117.3 594.0 132.7 594.3 140.2 C594.7 147.7 597.7 144.3 598.3 145.2" fill="none" stroke="#0b0e10" stroke-width="2" stroke-linecap="round" stroke-linejoin="round"/>
<path d="M621.4 0.0 C622.2 2.0 625.5 5.7 626.4 12.0 C627.2 18.4 626.4 33.7 626.4 38.0" fill="none" stroke="#0b0e10" stroke-width="2" stroke-linecap="round" stroke-linejoin="round"/>
<path d="M622.4 38.0 L621.4 102.1" fill="none" stroke="#0b0e10" stroke-width="2" stroke-linecap="round" stroke-linejoin="round"/>
<path d="M498.2 96.1 C499.9 95.8 505.9 93.6 508.2 94.1 C510.6 94.6 503.6 98.2 512.2 99.1 C520.9 100.0 539.0 98.7 560.3 99.5 C581.6 100.4 626.7 103.4 640.0 104.1" fill="none" stroke="#0b0e10" stroke-width="2" stroke-linecap="round" stroke-linejoin="round"/>
<path d="M598.3 145.2 L640.0 147.2" fill="none" stroke="#0b0e10" stroke-width="2" stroke-linecap="round" stroke-linejoin="round"/>
<path d="M598.3 145.2 L586.3 154.0" fill="none" stroke="#0b0e10" stroke-width="2" stroke-linecap="round" stroke-linejoin="round"/>
<path d="M645.0 0.0 L643.0 154.0" fill="none" stroke="#0b0e10" stroke-width="2" stroke-linecap="round" stroke-linejoin="round"/>
<path d="M734.1 0.0 C733.8 13.4 733.1 54.4 732.1 80.1 C731.1 105.8 728.8 141.7 728.1 154.0" fill="none" stroke="#0b0e10" stroke-width="2.4" stroke-linecap="round" stroke-linejoin="round"/>
<path d="M805.2 0.0 L804.2 154.0" fill="none" stroke="#0b0e10" stroke-width="2.4" stroke-linecap="round" stroke-linejoin="round"/>
<path d="M721.1 0.0 C715.9 9.0 700.2 38.0 690.1 54.1 C679.9 70.1 668.4 83.8 660.0 96.1 C651.7 108.5 643.3 122.8 640.0 128.2" fill="none" stroke="#0b0e10" stroke-width="2" stroke-linecap="round" stroke-linejoin="round"/>
<path d="M640.0 40.1 C655.7 40.6 716.1 42.4 734.1 43.1 C752.1 43.7 736.5 44.2 748.1 44.1 C759.8 43.9 778.8 41.7 804.2 42.1 C829.6 42.4 874.4 44.9 900.3 46.1 C926.3 47.2 950.1 48.6 960.0 49.1" fill="none" stroke="#0b0e10" stroke-width="2.4" stroke-linecap="round" stroke-linejoin="round"/>
<path d="M640.0 70.1 C650.0 70.6 687.4 70.8 700.1 73.1 C712.8 75.4 708.4 82.0 716.1 84.1 C723.8 86.2 731.4 84.7 746.1 85.7 C760.8 86.7 794.5 89.4 804.2 90.1" fill="none" stroke="#0b0e10" stroke-width="2" stroke-linecap="round" stroke-linejoin="round"/>
<path d="M640.0 104.1 C652.3 105.0 692.4 107.8 714.1 109.1 C735.8 110.5 758.5 110.6 770.2 112.1 C781.8 113.6 778.5 117.0 784.2 118.1 C789.9 119.3 800.9 119.0 804.2 119.1" fill="none" stroke="#0b0e10" stroke-width="2" stroke-linecap="round" stroke-linejoin="round"/>
<path d="M640.0 147.2 C654.7 147.9 700.7 150.1 728.1 151.2 C755.5 152.3 791.5 153.5 804.2 154.0" fill="none" stroke="#0b0e10" stroke-width="2.4" stroke-linecap="round" stroke-linejoin="round"/>
<path d="M715.1 84.1 L713.1 154.0" fill="none" stroke="#0b0e10" stroke-width="2" stroke-linecap="round" stroke-linejoin="round"/>
<path d="M838.2 0.0 C841.9 4.7 854.4 20.4 860.3 28.0 C866.1 35.7 870.0 37.4 873.3 46.1 C876.6 54.7 878.8 70.4 880.3 80.1 C881.8 89.8 880.3 95.5 882.3 104.1 C884.3 112.8 889.6 123.9 892.3 132.2 C895.0 140.5 897.3 150.4 898.3 154.0" fill="none" stroke="#0b0e10" stroke-width="2" stroke-linecap="round" stroke-linejoin="round"/>
<path d="M938.4 49.1 C938.2 51.9 936.4 60.2 937.4 66.1 C938.4 71.9 942.9 75.1 944.4 84.1 C945.9 93.1 945.5 108.5 946.4 120.2 C947.2 131.8 948.9 148.4 949.4 154.0" fill="none" stroke="#0b0e10" stroke-width="2" stroke-linecap="round" stroke-linejoin="round"/>
<path d="M1051.1 0.0 C1053.0 8.7 1058.6 36.4 1062.2 52.1 C1065.7 67.8 1068.8 77.1 1072.2 94.1 C1075.5 111.1 1080.5 144.0 1082.2 154.0" fill="none" stroke="#0b0e10" stroke-width="2.6" stroke-linecap="round" stroke-linejoin="round"/>
<path d="M942.0 48.1 C946.0 48.6 958.9 47.9 966.0 51.1 C973.2 54.2 981.9 64.4 985.1 67.1" fill="none" stroke="#0b0e10" stroke-width="2" stroke-linecap="round" stroke-linejoin="round"/>
<path d="M985.1 67.1 C993.1 67.5 1020.3 70.2 1033.1 69.7 C1046.0 69.2 1056.6 65.3 1062.2 64.1 C1067.7 62.8 1065.5 62.4 1066.2 62.1" fill="none" stroke="#0b0e10" stroke-width="2.6" stroke-linecap="round" stroke-linejoin="round"/>
<path d="M1046.1 57.1 L1062.2 58.1" fill="none" stroke="#0b0e10" stroke-width="2" stroke-linecap="round" stroke-linejoin="round"/>
<path d="M1062.2 53.1 C1067.5 53.4 1081.8 54.4 1094.2 55.1 C1106.5 55.7 1129.2 56.7 1136.2 57.1" fill="none" stroke="#0b0e10" stroke-width="2" stroke-linecap="round" stroke-linejoin="round"/>
<path d="M1070.2 86.1 C1077.2 84.4 1101.2 77.6 1112.2 76.1 C1123.2 74.6 1123.2 76.3 1136.2 77.1 C1149.3 77.9 1176.3 80.3 1190.3 81.1 C1204.3 81.9 1215.3 81.9 1220.3 82.1" fill="none" stroke="#0b0e10" stroke-width="2.4" stroke-linecap="round" stroke-linejoin="round"/>
<path d="M964.0 0.0 C966.0 6.7 972.5 28.9 976.0 40.1 C979.5 51.2 982.7 57.1 985.1 67.1 C987.4 77.1 989.6 89.9 990.1 100.1 C990.6 110.3 989.2 119.2 988.1 128.2 C986.9 137.1 983.9 149.7 983.1 154.0" fill="none" stroke="#0b0e10" stroke-width="2.6" stroke-linecap="round" stroke-linejoin="round"/>
<path d="M1139.2 0.0 C1138.7 9.7 1137.1 41.4 1136.2 58.1 C1135.4 74.8 1135.2 84.1 1134.2 100.1 C1133.2 116.1 1130.9 145.0 1130.2 154.0" fill="none" stroke="#0b0e10" stroke-width="2.4" stroke-linecap="round" stroke-linejoin="round"/>
<path d="M1151.3 78.1 L1148.3 154.0" fill="none" stroke="#0b0e10" stroke-width="2" stroke-linecap="round" stroke-linejoin="round"/>
<path d="M1169.3 79.1 L1166.3 154.0" fill="none" stroke="#0b0e10" stroke-width="2" stroke-linecap="round" stroke-linejoin="round"/>
<path d="M1046.1 58.1 C1048.0 65.7 1056.5 90.4 1057.1 104.1 C1057.8 117.8 1052.0 131.9 1050.1 140.2 C1048.3 148.5 1046.8 151.7 1046.1 154.0" fill="none" stroke="#0b0e10" stroke-width="2" stroke-linecap="round" stroke-linejoin="round"/>
<path d="M942.0 72.1 L943.0 154.0" fill="none" stroke="#0b0e10" stroke-width="2" stroke-linecap="round" stroke-linejoin="round"/>
<path d="M942.0 144.2 C944.0 143.5 947.2 141.0 954.0 140.2 C960.9 139.3 978.2 139.3 983.1 139.2" fill="none" stroke="#0b0e10" stroke-width="2" stroke-linecap="round" stroke-linejoin="round"/>
<path d="M0.0 186.0 C11.7 186.4 46.7 187.2 70.1 188.0 C93.5 188.9 115.1 189.9 140.2 191.0 C165.2 192.2 198.6 194.1 220.3 195.1 C242.0 196.1 253.7 196.0 270.3 197.1 C287.0 198.2 311.7 200.9 320.0 201.7" fill="none" stroke="#0b0e10" stroke-width="2.6" stroke-linecap="round" stroke-linejoin="round"/>
<path d="M30.0 154.0 C30.0 159.3 28.9 170.4 30.0 186.0 C31.2 201.7 34.5 227.8 37.0 248.1 C39.5 268.4 43.7 298.0 45.1 308.0" fill="none" stroke="#0b0e10" stroke-width="2.4" stroke-linecap="round" stroke-linejoin="round"/>
<path d="M133.8 154.0 C134.5 160.3 136.6 177.7 138.2 192.0 C139.7 206.4 142.3 232.1 143.2 240.1" fill="none" stroke="#0b0e10" stroke-width="2" stroke-linecap="round" stroke-linejoin="round"/>
<path d="M270.3 197.1 C272.7 194.9 281.9 189.2 284.4 184.0 C286.9 178.9 285.2 169.0 285.4 166.0" fill="none" stroke="#1a1e22" stroke-width="1.2" stroke-linecap="round" stroke-linejoin="round"/>
<path d="M270.3 197.1 C273.0 198.9 283.4 203.6 286.4 208.1 C289.4 212.6 288.0 221.4 288.4 224.1" fill="none" stroke="#1a1e22" stroke-width="1.2" stroke-linecap="round" stroke-linejoin="round"/>
<path d="M320.0 201.7 C315.7 202.7 299.1 202.7 294.4 208.1 C289.6 213.5 291.9 229.8 291.4 234.1" fill="none" stroke="#1a1e22" stroke-width="1.2" stroke-linecap="round" stroke-linejoin="round"/>
<path d="M320.0 201.7 C316.7 199.7 305.3 195.3 300.4 190.0 C295.4 184.8 292.0 173.4 290.4 170.0" fill="none" stroke="#1a1e22" stroke-width="1.2" stroke-linecap="round" stroke-linejoin="round"/>
<path d="M304.4 240.1 C304.7 236.8 303.8 225.8 306.4 220.1 C309.0 214.4 317.7 208.4 320.0 206.1" fill="none" stroke="#1a1e22" stroke-width="1.2" stroke-linecap="round" stroke-linejoin="round"/>
<path d="M0.0 392.8 C3.7 393.6 14.0 395.9 22.0 397.4 C30.0 399.0 43.8 401.3 48.2 402.1" fill="none" stroke="#0b0e10" stroke-width="2" stroke-linecap="round" stroke-linejoin="round"/>
<path d="M0.0 476.4 L48.2 478.1" fill="none" stroke="#15191a" stroke-width="2.2" stroke-linecap="round" stroke-linejoin="round"/>
<path d="M0.0 689.3 L48.2 686.5" fill="none" stroke="#0b0e10" stroke-width="2.4" stroke-linecap="round" stroke-linejoin="round"/>
<path d="M42.7 648.0 C40.6 654.6 33.9 673.9 30.3 687.9 C26.6 701.8 22.2 724.4 20.6 731.7" fill="none" stroke="#0b0e10" stroke-width="2.2" stroke-linecap="round" stroke-linejoin="round"/>
<path d="M127.2 708.9 L122.8 734.2" fill="none" stroke="#0b0e10" stroke-width="2.2" stroke-linecap="round" stroke-linejoin="round"/>
<path d="M536.3 154.0 C541.3 158.7 559.0 173.7 566.3 182.0 C573.7 190.4 575.0 195.9 580.3 204.1 C585.7 212.2 593.3 223.8 598.3 231.1 C603.4 238.4 603.4 240.3 610.4 248.1 C617.3 256.0 632.6 268.0 640.0 278.2 C647.4 288.3 652.3 304.0 654.8 309.2" fill="none" stroke="#0b0e10" stroke-width="2.6" stroke-linecap="round" stroke-linejoin="round"/>
<path d="M588.3 154.0 C585.3 156.8 574.0 166.3 570.3 171.0 C566.6 175.7 567.0 180.2 566.3 182.0" fill="none" stroke="#0b0e10" stroke-width="2" stroke-linecap="round" stroke-linejoin="round"/>
<path d="M562.3 154.0 L570.3 171.0" fill="none" stroke="#0b0e10" stroke-width="2" stroke-linecap="round" stroke-linejoin="round"/>
<path d="M384.1 154.0 C387.4 157.7 396.8 167.7 404.1 176.0 C411.4 184.4 421.5 197.1 428.1 204.1 C434.8 211.1 438.8 214.4 444.2 218.1 C449.5 221.8 453.8 224.3 460.2 226.1 C466.5 227.9 476.2 227.4 482.2 229.1 C488.2 230.8 492.5 234.3 496.2 236.1 C499.9 237.9 502.9 239.4 504.2 240.1" fill="none" stroke="#0b0e10" stroke-width="2.6" stroke-linecap="round" stroke-linejoin="round"/>
<path d="M320.0 202.1 C324.3 202.2 338.4 205.7 346.0 203.1 C353.7 200.4 358.7 192.2 366.1 186.0 C373.4 179.9 386.1 169.4 390.1 166.0" fill="none" stroke="#0b0e10" stroke-width="2.4" stroke-linecap="round" stroke-linejoin="round"/>
<path d="M598.3 231.1 L572.3 246.1" fill="none" stroke="#101a3a" stroke-width="2.4" stroke-linecap="round" stroke-linejoin="round"/>
<path d="M600.4 230.1 C603.7 230.8 613.8 230.1 620.4 234.1 C627.0 238.1 636.7 250.8 640.0 254.1" fill="none" stroke="#0b0e10" stroke-width="2.4" stroke-linecap="round" stroke-linejoin="round"/>
<path d="M720.1 155.0 C733.5 155.3 777.8 156.5 800.2 157.0 C822.6 157.5 837.6 157.5 854.3 158.0 C871.0 158.5 882.7 159.5 900.3 160.0 C917.9 160.5 950.1 160.8 960.0 161.0" fill="none" stroke="#0b0e10" stroke-width="2.8" stroke-linecap="round" stroke-linejoin="round"/>
<path d="M801.2 154.0 L800.2 207.1" fill="none" stroke="#0b0e10" stroke-width="2.4" stroke-linecap="round" stroke-linejoin="round"/>
<path d="M666.0 154.0 C670.0 160.7 683.4 180.7 690.1 194.1 C696.7 207.4 702.9 222.1 706.1 234.1 C709.3 246.1 708.1 256.5 709.1 266.1 C710.1 275.8 708.9 286.8 712.1 292.2 C715.3 297.5 717.9 296.8 728.1 298.2 C738.3 299.5 765.7 299.8 773.2 300.2" fill="none" stroke="#0b0e10" stroke-width="2" stroke-linecap="round" stroke-linejoin="round"/>
<path d="M642.0 154.0 C642.7 156.0 639.7 158.0 646.0 166.0 C652.3 174.0 670.0 190.0 680.1 202.1 C690.1 214.1 701.7 232.1 706.1 238.1" fill="none" stroke="#0b0e10" stroke-width="2" stroke-linecap="round" stroke-linejoin="round"/>
<path d="M710.1 154.0 C710.1 159.0 708.4 174.7 710.1 184.0 C711.8 193.4 715.4 201.9 720.1 210.1 C724.8 218.2 735.1 229.3 738.1 233.1" fill="none" stroke="#0b0e10" stroke-width="2" stroke-linecap="round" stroke-linejoin="round"/>
<path d="M727.1 154.0 C726.9 159.0 723.6 176.9 726.1 184.0 C728.6 191.2 737.8 191.0 742.1 197.1 C746.5 203.1 749.1 214.6 752.1 220.1 C755.1 225.6 756.6 227.1 760.2 230.1 C763.7 233.1 771.0 236.8 773.2 238.1" fill="none" stroke="#0b0e10" stroke-width="2" stroke-linecap="round" stroke-linejoin="round"/>
<path d="M640.0 250.1 C645.0 249.8 661.4 247.8 670.0 248.1 C678.7 248.5 686.1 253.1 692.1 252.1 C698.1 251.1 700.7 245.1 706.1 242.1 C711.4 239.1 718.1 235.6 724.1 234.1 C730.1 232.6 736.1 233.6 742.1 233.1 C748.1 232.6 757.1 231.4 760.2 231.1" fill="none" stroke="#0b0e10" stroke-width="2" stroke-linecap="round" stroke-linejoin="round"/>
<path d="M640.0 278.2 C641.3 279.5 644.7 285.5 648.0 286.2 C651.3 286.8 653.7 285.5 660.0 282.2 C666.4 278.8 678.4 272.8 686.1 266.1 C693.7 259.5 702.7 246.1 706.1 242.1" fill="none" stroke="#0b0e10" stroke-width="2" stroke-linecap="round" stroke-linejoin="round"/>
<path d="M854.3 158.0 C854.4 161.3 854.6 170.9 855.3 178.0 C855.9 185.2 854.8 197.2 858.3 201.1 C861.8 204.9 871.3 202.1 876.3 201.1 C881.3 200.1 884.3 196.7 888.3 195.1 C892.3 193.4 894.3 192.5 900.3 191.0 C906.3 189.5 914.4 188.2 924.4 186.0 C934.3 183.9 954.1 179.4 960.0 178.0" fill="none" stroke="#0b0e10" stroke-width="2" stroke-linecap="round" stroke-linejoin="round"/>
<path d="M901.3 160.0 L900.3 207.1" fill="none" stroke="#0b0e10" stroke-width="2" stroke-linecap="round" stroke-linejoin="round"/>
<path d="M942.0 161.0 C948.7 161.0 967.4 160.7 982.1 161.0 C996.7 161.3 1012.8 162.2 1030.1 163.0 C1047.5 163.8 1066.8 165.0 1086.2 166.0 C1105.5 167.0 1136.2 168.5 1146.3 169.0" fill="none" stroke="#0b0e10" stroke-width="2.8" stroke-linecap="round" stroke-linejoin="round"/>
<path d="M942.0 180.0 C948.0 180.2 964.0 180.4 978.0 181.0 C992.1 181.7 1018.1 183.5 1026.1 184.0" fill="none" stroke="#0b0e10" stroke-width="2.4" stroke-linecap="round" stroke-linejoin="round"/>
<path d="M980.0 154.0 L978.0 207.1" fill="none" stroke="#0b0e10" stroke-width="2.6" stroke-linecap="round" stroke-linejoin="round"/>
<path d="M1030.1 163.0 C1029.9 165.2 1030.1 172.2 1029.1 176.0 C1028.1 179.9 1024.9 184.4 1024.1 186.0" fill="none" stroke="#0b0e10" stroke-width="2" stroke-linecap="round" stroke-linejoin="round"/>
<path d="M1083.2 154.0 C1084.3 162.3 1087.7 187.4 1090.2 204.1 C1092.7 220.8 1095.5 236.8 1098.2 254.1 C1100.9 271.4 1104.9 299.0 1106.2 308.0" fill="none" stroke="#0b0e10" stroke-width="2.8" stroke-linecap="round" stroke-linejoin="round"/>
<path d="M1147.3 154.0 C1146.8 164.0 1145.6 188.4 1144.3 214.1 C1142.9 239.7 1140.1 292.3 1139.2 308.0" fill="none" stroke="#0b0e10" stroke-width="2.4" stroke-linecap="round" stroke-linejoin="round"/>
<path d="M1164.3 154.0 C1163.8 165.0 1162.4 194.4 1161.3 220.1 C1160.1 245.7 1157.9 293.3 1157.3 308.0" fill="none" stroke="#0b0e10" stroke-width="2.4" stroke-linecap="round" stroke-linejoin="round"/>
<path d="M1131.2 154.0 C1131.1 159.0 1131.2 174.4 1130.2 184.0 C1129.2 193.7 1126.1 207.4 1125.2 212.1" fill="none" stroke="#0b0e10" stroke-width="2" stroke-linecap="round" stroke-linejoin="round"/>
<path d="M1144.3 209.1 C1152.3 209.6 1172.7 211.2 1192.3 212.1 C1211.9 212.9 1250.4 213.7 1262.0 214.1" fill="none" stroke="#0b0e10" stroke-width="2" stroke-linecap="round" stroke-linejoin="round"/>
<path d="M1095.2 223.1 L1160.3 225.1" fill="none" stroke="#0b0e10" stroke-width="2" stroke-linecap="round" stroke-linejoin="round"/>
<path d="M1118.2 274.2 C1128.9 274.6 1158.3 275.5 1182.3 276.6 C1206.3 277.6 1248.7 279.9 1262.0 280.6" fill="none" stroke="#0b0e10" stroke-width="2.4" stroke-linecap="round" stroke-linejoin="round"/>
<path d="M1185.3 154.0 C1185.5 167.4 1185.5 208.4 1186.3 234.1 C1187.1 259.8 1189.6 295.7 1190.3 308.0" fill="none" stroke="#171c1b" stroke-width="2.4" stroke-linecap="round" stroke-linejoin="round"/>
<path d="M1044.1 262.1 L1051.1 308.0" fill="none" stroke="#0b0e10" stroke-width="2" stroke-linecap="round" stroke-linejoin="round"/>
<path d="M572.0 327.0 C574.7 330.2 582.4 339.2 588.0 346.0 C593.7 352.9 599.7 360.4 606.1 368.1 C612.4 375.8 619.7 384.1 626.1 392.1 C632.4 400.1 639.4 408.5 644.1 416.1 C648.8 423.8 651.6 430.5 654.1 438.2 C656.6 445.8 658.3 458.0 659.1 462.0" fill="none" stroke="#0b0e10" stroke-width="2.6" stroke-linecap="round" stroke-linejoin="round"/>
<path d="M606.1 367.1 C609.4 362.9 620.4 347.2 626.1 342.0 C631.8 336.9 634.1 339.5 640.1 336.0 C646.1 332.5 658.5 323.5 662.1 321.0" fill="none" stroke="#0b0e10" stroke-width="2" stroke-linecap="round" stroke-linejoin="round"/>
<path d="M662.1 321.0 C669.5 321.4 694.5 322.5 706.2 323.0 C717.9 323.5 721.2 323.5 732.2 324.0 C743.2 324.5 765.6 325.7 772.3 326.0" fill="none" stroke="#0b0e10" stroke-width="2.4" stroke-linecap="round" stroke-linejoin="round"/>
<path d="M654.1 308.0 C655.8 311.3 660.8 319.7 664.1 328.0 C667.5 336.4 670.8 348.1 674.1 358.1 C677.5 368.1 680.5 378.4 684.2 388.1 C687.8 397.8 692.8 408.8 696.2 416.1 C699.5 423.5 700.2 427.1 704.2 432.2 C708.2 437.2 714.2 442.5 720.2 446.2 C726.2 449.8 730.2 451.5 740.2 454.2 C750.2 456.8 773.6 460.7 780.3 462.0" fill="none" stroke="#0b0e10" stroke-width="3" stroke-linecap="round" stroke-linejoin="round"/>
<path d="M729.2 359.1 C736.4 359.4 756.7 360.2 772.3 361.1 C787.8 361.9 804.4 363.2 822.3 364.1 C840.3 364.9 870.4 365.7 880.0 366.1" fill="none" stroke="#0b0e10" stroke-width="2.4" stroke-linecap="round" stroke-linejoin="round"/>
<path d="M730.2 308.0 C730.5 310.7 732.4 315.5 732.2 324.0 C732.0 332.5 729.9 348.1 729.2 359.1 C728.5 370.1 728.0 384.9 727.8 390.1" fill="none" stroke="#0b0e10" stroke-width="2.2" stroke-linecap="round" stroke-linejoin="round"/>
<path d="M727.8 390.1 C743.6 390.9 798.6 393.8 822.3 395.1 C846.1 396.4 860.8 396.9 870.4 398.1 C880.0 399.3 878.4 401.5 880.0 402.1" fill="none" stroke="#0b0e10" stroke-width="2.2" stroke-linecap="round" stroke-linejoin="round"/>
<path d="M826.3 340.0 C825.8 349.2 824.3 374.8 823.3 395.1 C822.3 415.4 820.8 450.8 820.3 462.0" fill="none" stroke="#0b0e10" stroke-width="2.2" stroke-linecap="round" stroke-linejoin="round"/>
<path d="M854.4 342.0 C854.7 345.0 853.4 354.4 856.4 360.1 C859.4 365.7 868.5 372.7 872.4 376.1 C876.3 379.4 878.7 379.4 880.0 380.1" fill="none" stroke="#0b0e10" stroke-width="2.4" stroke-linecap="round" stroke-linejoin="round"/>
<path d="M782.3 446.2 L781.3 462.0" fill="none" stroke="#0b0e10" stroke-width="2" stroke-linecap="round" stroke-linejoin="round"/>
<path d="M820.3 444.2 C824.3 444.5 837.7 444.5 844.4 446.2 C851.0 447.8 854.4 451.5 860.4 454.2 C866.3 456.8 876.7 460.7 880.0 462.0" fill="none" stroke="#0b0e10" stroke-width="2" stroke-linecap="round" stroke-linejoin="round"/>
<path d="M704.2 432.2 C710.2 433.5 727.2 437.9 740.2 440.2 C753.2 442.4 768.9 445.1 782.3 445.8 C795.6 446.4 814.0 444.4 820.3 444.2" fill="none" stroke="#222b27" stroke-width="2.6" stroke-linecap="round" stroke-linejoin="round"/>
<path d="M994.1 340.0 C1005.2 340.5 1039.2 342.0 1060.2 343.0 C1081.3 344.0 1097.0 344.9 1120.3 346.0 C1143.6 347.2 1186.7 349.4 1200.0 350.1" fill="none" stroke="#0b0e10" stroke-width="2.6" stroke-linecap="round" stroke-linejoin="round"/>
<path d="M1000.2 312.0 C1010.2 312.3 1037.2 313.3 1060.2 314.0 C1083.3 314.7 1125.3 315.7 1138.3 316.0" fill="none" stroke="#0b0e10" stroke-width="2.2" stroke-linecap="round" stroke-linejoin="round"/>
<path d="M880.0 368.1 C889.3 368.6 918.0 370.2 936.1 371.1 C954.1 371.9 970.8 372.1 988.1 373.1 C1005.5 374.1 1018.2 374.8 1040.2 377.1 C1062.2 379.4 1093.7 384.4 1120.3 387.1 C1146.9 389.8 1186.7 392.1 1200.0 393.1" fill="none" stroke="#0b0e10" stroke-width="2.4" stroke-linecap="round" stroke-linejoin="round"/>
<path d="M1051.2 308.0 C1052.7 316.3 1057.4 341.4 1060.2 358.1 C1063.1 374.8 1065.9 390.8 1068.2 408.1 C1070.6 425.4 1073.2 453.0 1074.2 462.0" fill="none" stroke="#0b0e10" stroke-width="2.4" stroke-linecap="round" stroke-linejoin="round"/>
<path d="M1106.3 308.0 C1107.6 316.3 1111.6 341.4 1114.3 358.1 C1117.0 374.8 1119.6 390.8 1122.3 408.1 C1125.0 425.4 1129.0 453.0 1130.3 462.0" fill="none" stroke="#0b0e10" stroke-width="2.6" stroke-linecap="round" stroke-linejoin="round"/>
<path d="M1137.3 308.0 C1137.8 316.3 1138.5 341.4 1140.3 358.1 C1142.2 374.8 1146.0 390.8 1148.3 408.1 C1150.7 425.4 1153.3 453.0 1154.3 462.0" fill="none" stroke="#0b0e10" stroke-width="2.2" stroke-linecap="round" stroke-linejoin="round"/>
<path d="M1156.3 308.0 C1156.5 314.7 1156.0 333.0 1157.3 348.1 C1158.7 363.1 1162.5 381.4 1164.4 398.1 C1166.2 414.8 1167.7 439.8 1168.4 448.2" fill="none" stroke="#0b0e10" stroke-width="2.2" stroke-linecap="round" stroke-linejoin="round"/>
<path d="M890.0 342.0 L891.0 368.1" fill="none" stroke="#0b0e10" stroke-width="2" stroke-linecap="round" stroke-linejoin="round"/>
<path d="M937.1 372.1 C937.6 378.1 938.2 395.4 940.1 408.1 C941.9 420.8 946.8 441.5 948.1 448.2" fill="none" stroke="#0b0e10" stroke-width="2" stroke-linecap="round" stroke-linejoin="round"/>
<path d="M950.1 372.1 C951.1 378.1 953.4 393.1 956.1 408.1 C958.8 423.1 964.4 453.0 966.1 462.0" fill="none" stroke="#0b0e10" stroke-width="2" stroke-linecap="round" stroke-linejoin="round"/>
<path d="M880.0 378.1 C883.3 379.8 893.4 383.1 900.0 388.1 C906.7 393.1 914.4 400.8 920.1 408.1 C925.7 415.5 930.7 423.2 934.1 432.2 C937.4 441.1 939.1 457.0 940.1 462.0" fill="none" stroke="#0b0e10" stroke-width="2.6" stroke-linecap="round" stroke-linejoin="round"/>
<path d="M880.0 408.1 C882.7 408.5 890.0 409.1 896.0 410.1 C902.0 411.1 912.7 413.5 916.0 414.1" fill="none" stroke="#0b0e10" stroke-width="2" stroke-linecap="round" stroke-linejoin="round"/>
<path d="M958.1 342.0 C959.4 349.7 962.4 368.1 966.1 388.1 C969.8 408.1 977.8 449.7 980.1 462.0" fill="none" stroke="#1a1f1d" stroke-width="2" stroke-linecap="round" stroke-linejoin="round"/>
<path d="M1182.0 349.0 C1190.0 349.3 1217.3 350.3 1230.0 351.0 C1242.7 351.7 1253.3 352.7 1258.0 353.0" fill="none" stroke="#0b0e10" stroke-width="2.6" stroke-linecap="round" stroke-linejoin="round"/>
<path d="M1162.0 390.0 C1168.0 390.7 1182.0 392.8 1198.0 394.0 C1214.0 395.2 1248.0 396.5 1258.0 397.0" fill="none" stroke="#0b0e10" stroke-width="2.4" stroke-linecap="round" stroke-linejoin="round"/>
<path d="M1230.0 351.0 C1229.5 360.5 1228.0 389.5 1227.0 408.0 C1226.0 426.5 1224.5 452.8 1224.0 461.8" fill="none" stroke="#0b0e10" stroke-width="2.4" stroke-linecap="round" stroke-linejoin="round"/>
<path d="M1230.0 351.0 C1232.0 348.8 1237.7 343.2 1242.0 338.0 C1246.3 332.8 1253.7 323.0 1256.0 320.0" fill="none" stroke="#0b0e10" stroke-width="2.4" stroke-linecap="round" stroke-linejoin="round"/>
<path d="M1256.0 308.0 C1256.0 318.0 1255.7 351.3 1256.0 368.0 C1256.3 384.7 1257.7 401.3 1258.0 408.0" fill="none" stroke="#16224a" stroke-width="2.4" stroke-linecap="round" stroke-linejoin="round"/>
<path d="M586.0 482.0 C591.7 480.4 608.7 475.4 620.1 472.0 C631.4 468.7 648.4 463.7 654.1 462.0" fill="none" stroke="#0b0e10" stroke-width="2.4" stroke-linecap="round" stroke-linejoin="round"/>
<path d="M660.1 462.0 C662.1 464.3 667.5 470.0 672.1 476.0 C676.8 482.0 682.8 490.7 688.2 498.0 C693.5 505.4 699.2 514.4 704.2 520.1 C709.2 525.7 715.9 530.1 718.2 532.1" fill="none" stroke="#0b0e10" stroke-width="2.4" stroke-linecap="round" stroke-linejoin="round"/>
<path d="M572.0 502.1 C574.7 509.4 584.2 532.8 588.0 546.1 C591.9 559.5 592.5 570.5 595.0 582.2 C597.5 593.8 601.7 610.4 603.1 616.0" fill="none" stroke="#0b0e10" stroke-width="2.4" stroke-linecap="round" stroke-linejoin="round"/>
<path d="M572.0 574.1 C577.7 574.6 594.0 578.5 606.1 577.1 C618.1 575.8 630.8 569.3 644.1 566.1 C657.5 563.0 678.8 560.8 686.2 558.1 C693.5 555.5 683.8 552.4 688.2 550.1 C692.5 547.8 708.2 545.1 712.2 544.1" fill="none" stroke="#0b0e10" stroke-width="2.4" stroke-linecap="round" stroke-linejoin="round"/>
<path d="M720.2 538.1 C726.9 541.8 746.9 555.8 760.3 560.1 C773.6 564.5 780.3 563.1 800.3 564.1 C820.3 565.1 866.7 565.8 880.0 566.1" fill="none" stroke="#0b0e10" stroke-width="2.4" stroke-linecap="round" stroke-linejoin="round"/>
<path d="M760.3 462.0 C766.9 464.0 787.0 469.0 800.3 474.0 C813.7 479.0 827.1 486.0 840.4 492.0 C853.6 498.0 873.4 507.1 880.0 510.1" fill="none" stroke="#0b0e10" stroke-width="2.6" stroke-linecap="round" stroke-linejoin="round"/>
<path d="M818.3 462.0 C818.0 468.7 818.0 488.7 816.3 502.1 C814.7 515.4 809.5 530.1 808.3 542.1 C807.1 554.1 808.1 568.1 809.3 574.1 C810.5 580.1 813.3 578.1 815.3 578.1 C817.3 578.1 820.5 576.1 821.3 574.1 C822.2 572.1 820.5 567.5 820.3 566.1" fill="none" stroke="#0b0e10" stroke-width="2" stroke-linecap="round" stroke-linejoin="round"/>
<path d="M773.3 468.0 C773.1 470.3 769.4 478.7 772.3 482.0 C775.1 485.4 785.3 484.4 790.3 488.0 C795.3 491.7 797.6 500.7 802.3 504.1 C807.0 507.4 815.7 507.4 818.3 508.1" fill="none" stroke="#0b0e10" stroke-width="2" stroke-linecap="round" stroke-linejoin="round"/>
<path d="M864.4 568.1 L872.4 616.0" fill="none" stroke="#0b0e10" stroke-width="2.4" stroke-linecap="round" stroke-linejoin="round"/>
<path d="M692.2 443.4 C692.0 446.5 689.9 456.4 690.9 462.1 C692.0 467.8 693.8 471.4 698.4 477.7 C703.1 484.0 711.6 493.1 718.8 499.9 C726.0 506.7 737.8 515.5 741.6 518.6" fill="none" stroke="#1d2126" stroke-width="1.3" stroke-linecap="round" stroke-linejoin="round"/>
<path d="M695.9 445.5 C695.7 448.1 693.6 455.9 694.7 461.0 C695.7 466.2 697.6 470.6 702.2 476.6 C706.7 482.7 714.6 490.6 721.9 497.4 C729.2 504.1 741.8 513.8 745.8 517.1" fill="none" stroke="#1d2126" stroke-width="1.3" stroke-linecap="round" stroke-linejoin="round"/>
<path d="M772.8 466.2 C772.4 468.7 767.9 477.0 770.7 480.8 C773.5 484.6 784.2 485.3 789.4 489.1 C794.6 492.9 797.4 500.5 801.9 503.6 C806.4 506.7 814.0 507.1 816.4 507.8" fill="none" stroke="#0b0e10" stroke-width="2" stroke-linecap="round" stroke-linejoin="round"/>
<path d="M822.6 514.0 C823.7 514.9 828.5 516.4 828.9 519.2 C829.2 522.0 827.1 528.0 824.7 530.6 C822.3 533.2 816.1 534.1 814.3 534.8" fill="none" stroke="#1d2126" stroke-width="1.2" stroke-linecap="round" stroke-linejoin="round"/>
<path d="M880.0 508.1 C883.3 510.4 893.4 518.7 900.0 522.1 C906.7 525.4 912.7 526.4 920.1 528.1 C927.4 529.8 936.7 531.4 944.1 532.1 C951.4 532.8 957.4 533.8 964.1 532.1 C970.8 530.4 980.8 523.7 984.1 522.1" fill="none" stroke="#0b0e10" stroke-width="2.8" stroke-linecap="round" stroke-linejoin="round"/>
<path d="M976.1 538.1 C980.1 539.3 989.5 543.8 1000.2 545.1 C1010.8 546.4 1026.9 545.6 1040.2 546.1 C1053.6 546.6 1067.6 547.8 1080.3 548.1 C1092.9 548.4 1102.9 549.1 1116.3 548.1 C1129.6 547.1 1146.4 544.1 1160.4 542.1 C1174.3 540.1 1193.4 537.1 1200.0 536.1" fill="none" stroke="#0b0e10" stroke-width="2.8" stroke-linecap="round" stroke-linejoin="round"/>
<path d="M992.1 542.1 C991.1 544.8 987.5 551.4 986.1 558.1 C984.8 564.8 983.6 574.1 984.1 582.2 C984.6 590.2 988.3 602.2 989.1 606.2" fill="none" stroke="#0b0e10" stroke-width="2.4" stroke-linecap="round" stroke-linejoin="round"/>
<path d="M880.0 568.1 C886.7 568.6 907.4 570.1 920.1 571.1 C932.7 572.1 945.4 573.3 956.1 574.1 C966.8 575.0 979.5 575.8 984.1 576.1" fill="none" stroke="#0b0e10" stroke-width="2.4" stroke-linecap="round" stroke-linejoin="round"/>
<path d="M880.0 466.0 C891.7 466.3 931.7 467.5 950.1 468.0 C968.4 468.5 975.1 468.5 990.1 469.0 C1005.2 469.5 1031.9 470.7 1040.2 471.0" fill="none" stroke="#0b0e10" stroke-width="2.4" stroke-linecap="round" stroke-linejoin="round"/>
<path d="M1081.3 488.0 L1080.3 550.1" fill="none" stroke="#0b0e10" stroke-width="2.4" stroke-linecap="round" stroke-linejoin="round"/>
<path d="M1050.2 484.0 C1055.4 485.5 1069.6 491.7 1081.3 493.0 C1092.9 494.4 1111.8 492.5 1120.3 492.0 C1128.8 491.5 1130.3 490.4 1132.3 490.0" fill="none" stroke="#0b0e10" stroke-width="2.4" stroke-linecap="round" stroke-linejoin="round"/>
<path d="M1028.2 548.1 C1036.9 548.8 1066.6 549.8 1080.3 552.1 C1093.9 554.4 1100.3 560.8 1110.3 562.1 C1120.3 563.5 1125.4 562.1 1140.3 560.1 C1155.3 558.1 1190.1 551.8 1200.0 550.1" fill="none" stroke="#0b0e10" stroke-width="2.4" stroke-linecap="round" stroke-linejoin="round"/>
<path d="M924.1 616.0 C933.4 614.4 957.4 609.8 980.1 606.2 C1002.8 602.5 1036.9 597.5 1060.2 594.2 C1083.6 590.8 1097.0 589.2 1120.3 586.2 C1143.6 583.2 1186.7 577.8 1200.0 576.1" fill="none" stroke="#0b0e10" stroke-width="2.4" stroke-linecap="round" stroke-linejoin="round"/>
<path d="M1152.3 600.2 L1200.0 596.2" fill="none" stroke="#0b0e10" stroke-width="2.2" stroke-linecap="round" stroke-linejoin="round"/>
<path d="M1129.3 462.0 C1131.1 472.0 1136.8 502.1 1140.3 522.1 C1143.8 542.1 1147.7 566.5 1150.3 582.2 C1153.0 597.8 1155.3 610.4 1156.3 616.0" fill="none" stroke="#0b0e10" stroke-width="2.8" stroke-linecap="round" stroke-linejoin="round"/>
<path d="M1118.3 482.0 C1120.0 492.0 1125.6 524.7 1128.3 542.1 C1131.0 559.5 1132.8 573.8 1134.3 586.2 C1135.8 598.5 1136.8 611.0 1137.3 616.0" fill="none" stroke="#0b0e10" stroke-width="2.4" stroke-linecap="round" stroke-linejoin="round"/>
<path d="M1156.3 462.0 C1156.7 470.3 1156.3 495.4 1158.3 512.1 C1160.4 528.8 1165.4 544.8 1168.4 562.1 C1171.4 579.4 1175.0 607.0 1176.4 616.0" fill="none" stroke="#0b0e10" stroke-width="2.4" stroke-linecap="round" stroke-linejoin="round"/>
<path d="M1172.4 482.0 C1172.7 488.7 1172.4 505.4 1174.4 522.1 C1176.4 538.8 1181.7 566.5 1184.4 582.2 C1187.1 597.8 1189.4 610.4 1190.4 616.0" fill="none" stroke="#0b0e10" stroke-width="2.2" stroke-linecap="round" stroke-linejoin="round"/>
<path d="M1138.3 516.1 L1200.0 514.1" fill="none" stroke="#0b0e10" stroke-width="2.2" stroke-linecap="round" stroke-linejoin="round"/>
<path d="M1140.3 530.1 L1200.0 528.1" fill="none" stroke="#0b0e10" stroke-width="2" stroke-linecap="round" stroke-linejoin="round"/>
<path d="M572.0 653.7 C578.7 653.3 590.7 652.4 612.1 651.1 C633.4 649.8 675.5 647.6 700.2 646.1 C724.9 644.6 739.6 644.2 760.3 642.1 C780.9 639.9 804.4 636.1 824.3 633.1 C844.3 630.1 870.7 625.6 880.0 624.1" fill="none" stroke="#0b0e10" stroke-width="2.8" stroke-linecap="round" stroke-linejoin="round"/>
<path d="M596.0 582.0 C598.4 591.3 607.2 624.7 610.1 638.1 C612.9 651.4 611.7 646.4 613.1 662.1 C614.4 677.8 617.2 720.5 618.1 732.2" fill="none" stroke="#0b0e10" stroke-width="2.4" stroke-linecap="round" stroke-linejoin="round"/>
<path d="M866.4 582.0 C867.4 588.7 870.1 608.7 872.4 622.1 C874.7 635.4 878.7 655.4 880.0 662.1" fill="none" stroke="#0b0e10" stroke-width="2.4" stroke-linecap="round" stroke-linejoin="round"/>
<path d="M734.2 732.2 C745.2 729.5 778.3 721.8 800.3 716.2 C822.3 710.5 853.1 701.6 866.4 698.1 C879.7 694.6 877.7 695.6 880.0 695.1" fill="none" stroke="#0b0e10" stroke-width="2.2" stroke-linecap="round" stroke-linejoin="round"/>
<path d="M816.3 622.1 C819.7 626.4 830.7 638.7 836.3 648.1 C842.0 657.4 848.0 673.1 850.4 678.1" fill="none" stroke="#1d2226" stroke-width="1" stroke-linecap="round" stroke-linejoin="round"/>
<path d="M826.3 618.0 C829.3 622.7 838.7 636.1 844.4 646.1 C850.0 656.1 857.7 672.8 860.4 678.1" fill="none" stroke="#1d2226" stroke-width="1" stroke-linecap="round" stroke-linejoin="round"/>
<path d="M880.0 625.1 C888.3 623.7 911.7 620.0 930.1 617.0 C948.4 614.0 965.1 610.9 990.1 607.0 C1015.2 603.2 1058.6 597.4 1080.3 594.0 C1101.9 590.7 1100.3 590.3 1120.3 587.0 C1140.3 583.7 1186.7 576.2 1200.0 574.0" fill="none" stroke="#0b0e10" stroke-width="2.4" stroke-linecap="round" stroke-linejoin="round"/>
<path d="M880.0 658.1 C890.0 656.6 921.4 651.9 940.1 649.1 C958.8 646.2 975.5 643.9 992.1 641.1 C1008.8 638.2 1023.5 634.7 1040.2 632.1 C1056.9 629.4 1081.3 626.4 1092.3 625.1 C1103.3 623.7 1100.6 623.1 1106.3 624.1 C1112.0 625.1 1110.7 630.6 1126.3 631.1 C1141.9 631.6 1187.7 627.7 1200.0 627.1" fill="none" stroke="#0b0e10" stroke-width="2.4" stroke-linecap="round" stroke-linejoin="round"/>
<path d="M938.1 660.1 C948.4 658.6 982.1 654.1 1000.2 651.1 C1018.2 648.1 1031.2 644.4 1046.2 642.1 C1061.2 639.7 1077.9 636.4 1090.3 637.1 C1102.6 637.7 1102.0 645.6 1120.3 646.1 C1138.6 646.6 1186.7 641.1 1200.0 640.1" fill="none" stroke="#0b0e10" stroke-width="2.2" stroke-linecap="round" stroke-linejoin="round"/>
<path d="M880.0 694.1 C890.0 691.8 920.1 685.0 940.1 680.1 C960.1 675.3 986.8 668.4 1000.2 665.1 C1013.5 661.8 1016.8 660.9 1020.2 660.1" fill="none" stroke="#0b0e10" stroke-width="2.4" stroke-linecap="round" stroke-linejoin="round"/>
<path d="M984.1 582.0 L989.1 606.0" fill="none" stroke="#0b0e10" stroke-width="2.4" stroke-linecap="round" stroke-linejoin="round"/>
<path d="M930.1 618.0 C931.4 625.1 936.4 649.8 938.1 660.1 C939.7 670.4 939.7 676.8 940.1 680.1" fill="none" stroke="#0b0e10" stroke-width="2" stroke-linecap="round" stroke-linejoin="round"/>
<path d="M980.1 610.0 C982.1 618.7 989.5 648.8 992.1 662.1 C994.8 675.5 995.5 685.5 996.1 690.1" fill="none" stroke="#0b0e10" stroke-width="2" stroke-linecap="round" stroke-linejoin="round"/>
<path d="M1000.2 640.1 L1008.2 690.1" fill="none" stroke="#0b0e10" stroke-width="2" stroke-linecap="round" stroke-linejoin="round"/>
<path d="M1036.2 602.0 L1046.2 656.1" fill="none" stroke="#0b0e10" stroke-width="2" stroke-linecap="round" stroke-linejoin="round"/>
<path d="M1024.2 606.0 L1032.2 658.1" fill="none" stroke="#0b0e10" stroke-width="2" stroke-linecap="round" stroke-linejoin="round"/>
<path d="M1088.3 594.0 L1092.3 636.1" fill="none" stroke="#0b0e10" stroke-width="2" stroke-linecap="round" stroke-linejoin="round"/>
<path d="M1126.3 582.0 C1127.0 585.3 1130.3 593.8 1130.3 602.0 C1130.3 610.2 1127.0 626.2 1126.3 631.1" fill="none" stroke="#0b0e10" stroke-width="2" stroke-linecap="round" stroke-linejoin="round"/>
<path d="M1148.3 582.0 C1149.7 592.0 1154.3 625.4 1156.3 642.1 C1158.3 658.8 1158.7 667.1 1160.4 682.1 C1162.0 697.1 1165.4 723.8 1166.4 732.2" fill="none" stroke="#0b0e10" stroke-width="2.8" stroke-linecap="round" stroke-linejoin="round"/>
<path d="M1134.3 582.0 C1135.3 590.3 1138.3 618.7 1140.3 632.1 C1142.3 645.4 1145.3 657.1 1146.3 662.1" fill="none" stroke="#0b0e10" stroke-width="2.4" stroke-linecap="round" stroke-linejoin="round"/>
<path d="M1166.4 582.0 C1167.7 592.0 1171.0 617.0 1174.4 642.1 C1177.7 667.1 1184.4 717.2 1186.4 732.2" fill="none" stroke="#0b0e10" stroke-width="2.4" stroke-linecap="round" stroke-linejoin="round"/>
<path d="M1178.4 582.0 C1180.7 595.4 1188.8 642.1 1192.4 662.1 C1196.0 682.1 1198.7 695.5 1200.0 702.2" fill="none" stroke="#0b0e10" stroke-width="2.4" stroke-linecap="round" stroke-linejoin="round"/>
<path d="M880.0 662.1 L888.0 732.2" fill="none" stroke="#0b0e10" stroke-width="2" stroke-linecap="round" stroke-linejoin="round"/>
<path d="M1182.0 462.0 C1179.3 464.0 1169.7 469.0 1166.0 474.0 C1162.3 479.0 1161.0 484.3 1160.0 492.0 C1159.0 499.7 1160.0 515.3 1160.0 520.0" fill="none" stroke="#343848" stroke-width="4" stroke-linecap="round" stroke-linejoin="round"/>
<path d="M1140.0 530.0 L1220.0 521.0" fill="none" stroke="#0b0e10" stroke-width="2.2" stroke-linecap="round" stroke-linejoin="round"/>
<path d="M1172.0 515.0 L1220.0 516.0" fill="none" stroke="#0b0e10" stroke-width="2.4" stroke-linecap="round" stroke-linejoin="round"/>
<path d="M1142.0 544.0 C1148.7 543.2 1168.7 540.8 1182.0 539.0 C1195.3 537.2 1209.3 535.3 1222.0 533.0 C1234.7 530.7 1252.0 526.3 1258.0 525.0" fill="none" stroke="#0b0e10" stroke-width="2.4" stroke-linecap="round" stroke-linejoin="round"/>
<path d="M1142.0 556.0 C1149.3 555.2 1172.7 552.8 1186.0 551.0 C1199.3 549.2 1210.0 547.0 1222.0 545.0 C1234.0 543.0 1252.0 540.0 1258.0 539.0" fill="none" stroke="#0b0e10" stroke-width="2.4" stroke-linecap="round" stroke-linejoin="round"/>
<path d="M1162.0 578.0 C1170.7 576.8 1198.0 573.2 1214.0 571.0 C1230.0 568.8 1250.7 566.0 1258.0 565.0" fill="none" stroke="#0b0e10" stroke-width="2.8" stroke-linecap="round" stroke-linejoin="round"/>
<path d="M1152.0 600.0 C1159.7 599.0 1186.7 595.3 1198.0 594.0 C1209.3 592.7 1216.3 592.3 1220.0 592.0" fill="none" stroke="#0b0e10" stroke-width="2.2" stroke-linecap="round" stroke-linejoin="round"/>
<path d="M1172.0 611.0 L1222.0 606.0" fill="none" stroke="#0b0e10" stroke-width="2.2" stroke-linecap="round" stroke-linejoin="round"/>
<path d="M1158.0 520.0 C1159.0 527.0 1161.7 546.0 1164.0 562.0 C1166.3 578.0 1170.7 606.8 1172.0 615.8" fill="none" stroke="#0b0e10" stroke-width="2.4" stroke-linecap="round" stroke-linejoin="round"/>
<path d="M1172.0 488.0 C1172.0 493.7 1171.0 509.0 1172.0 522.0 C1173.0 535.0 1176.0 550.4 1178.0 566.0 C1180.0 581.6 1183.0 607.5 1184.0 615.8" fill="none" stroke="#0b0e10" stroke-width="2.4" stroke-linecap="round" stroke-linejoin="round"/>
<path d="M1224.0 462.0 C1223.7 467.3 1222.7 482.3 1222.0 494.0 C1221.3 505.7 1220.0 519.3 1220.0 532.0 C1220.0 544.7 1221.3 556.0 1222.0 570.0 C1222.7 584.0 1223.7 608.2 1224.0 615.8" fill="none" stroke="#0b0e10" stroke-width="2.4" stroke-linecap="round" stroke-linejoin="round"/>
<path d="M1212.0 534.0 L1218.0 574.0" fill="none" stroke="#0b0e10" stroke-width="2" stroke-linecap="round" stroke-linejoin="round"/>
<path d="M1172.0 612.0 C1180.3 611.2 1207.7 608.7 1222.0 607.0 C1236.3 605.3 1252.0 602.8 1258.0 602.0" fill="none" stroke="#0b0e10" stroke-width="2.2" stroke-linecap="round" stroke-linejoin="round"/>
<path d="M1128.0 630.0 C1137.0 629.2 1166.3 626.5 1182.0 625.0 C1197.7 623.5 1209.3 622.3 1222.0 621.0 C1234.7 619.7 1252.0 617.7 1258.0 617.0" fill="none" stroke="#0b0e10" stroke-width="2.4" stroke-linecap="round" stroke-linejoin="round"/>
<path d="M1122.0 642.0 C1132.0 641.0 1164.7 638.0 1182.0 636.0 C1199.3 634.0 1213.3 631.8 1226.0 630.0 C1238.7 628.2 1252.7 625.8 1258.0 625.0" fill="none" stroke="#0b0e10" stroke-width="2.4" stroke-linecap="round" stroke-linejoin="round"/>
<path d="M1122.0 656.0 C1132.0 655.0 1164.3 652.0 1182.0 650.0 C1199.7 648.0 1215.3 646.0 1228.0 644.0 C1240.7 642.0 1253.0 639.0 1258.0 638.0" fill="none" stroke="#0b0e10" stroke-width="2.2" stroke-linecap="round" stroke-linejoin="round"/>
<path d="M1192.0 672.0 L1258.0 676.0" fill="none" stroke="#0b0e10" stroke-width="2.4" stroke-linecap="round" stroke-linejoin="round"/>
<path d="M1180.0 582.0 C1181.3 590.3 1185.7 618.7 1188.0 632.0 C1190.3 645.3 1193.0 657.0 1194.0 662.0" fill="none" stroke="#0b0e10" stroke-width="2.4" stroke-linecap="round" stroke-linejoin="round"/>
<path d="M1219.0 582.0 C1220.2 590.3 1223.8 618.0 1226.0 632.0 C1228.2 646.0 1231.0 660.3 1232.0 666.0" fill="none" stroke="#0b0e10" stroke-width="2.4" stroke-linecap="round" stroke-linejoin="round"/>
<path d="M1248.0 582.0 L1256.0 622.0" fill="none" stroke="#0b0e10" stroke-width="2" stroke-linecap="round" stroke-linejoin="round"/>
<path d="M1162.0 682.0 L1166.0 710.0" fill="none" stroke="#0b0e10" stroke-width="2.6" stroke-linecap="round" stroke-linejoin="round"/>
<path d="M1182.0 682.0 L1188.0 712.0" fill="none" stroke="#0b0e10" stroke-width="2.4" stroke-linecap="round" stroke-linejoin="round"/>
</g>
<g id="L-mwcase">
<path d="M264.3 0.0 C265.2 6.0 267.6 24.4 269.3 36.0 C271.1 47.7 272.7 56.1 274.7 70.1 C276.7 84.1 279.6 106.2 281.4 120.2 C283.1 134.1 284.7 148.4 285.4 154.0" fill="none" stroke="#0a0c0e" stroke-width="6.9" stroke-linecap="round" stroke-linejoin="round"/>
<path d="M889.3 0.0 C890.5 4.0 893.8 15.7 896.3 24.0 C898.8 32.4 901.3 39.0 904.3 50.1 C907.3 61.1 911.3 77.8 914.3 90.1 C917.3 102.5 920.0 113.5 922.4 124.2 C924.7 134.8 927.4 149.0 928.4 154.0" fill="none" stroke="#0a0c0e" stroke-width="6.9" stroke-linecap="round" stroke-linejoin="round"/>
<path d="M1188.3 0.0 C1188.1 6.7 1187.0 28.4 1187.3 40.1 C1187.6 51.7 1187.8 60.7 1190.3 70.1 C1192.8 79.4 1196.3 87.8 1202.3 96.1 C1208.3 104.5 1216.4 111.5 1226.4 120.2 C1236.3 128.8 1256.1 143.5 1262.0 148.2" fill="none" stroke="#0a0c0e" stroke-width="7.4" stroke-linecap="round" stroke-linejoin="round"/>
<path d="M285.4 154.0 C285.9 160.7 287.7 179.7 288.4 194.1 C289.0 208.4 289.2 232.4 289.4 240.1" fill="none" stroke="#0a0c0e" stroke-width="7.4" stroke-linecap="round" stroke-linejoin="round"/>
<path d="M0.0 434.1 L48.2 436.8" fill="none" stroke="#0a0c0e" stroke-width="6.4" stroke-linecap="round" stroke-linejoin="round"/>
<path d="M278.6 710.6 L275.2 734.2" fill="none" stroke="#0a0c0e" stroke-width="6.4" stroke-linecap="round" stroke-linejoin="round"/>
<path d="M926.4 154.0 C926.9 159.0 928.4 175.2 929.4 184.0 C930.4 192.9 931.9 203.2 932.4 207.1" fill="none" stroke="#0a0c0e" stroke-width="6.4" stroke-linecap="round" stroke-linejoin="round"/>
<path d="M968.1 342.0 C970.4 344.4 978.6 351.1 982.1 356.1 C985.6 361.1 987.9 365.4 989.1 372.1 C990.4 378.8 989.5 388.1 989.7 396.1 C990.0 404.1 990.3 413.1 990.5 420.1 C990.8 427.1 991.1 431.2 991.3 438.2 C991.6 445.1 992.0 458.0 992.1 462.0" fill="none" stroke="#0a0c0e" stroke-width="7.4" stroke-linecap="round" stroke-linejoin="round"/>
<path d="M1136.0 463.0 C1142.0 461.2 1161.7 454.8 1172.0 452.0 C1182.3 449.2 1191.0 449.3 1198.0 446.0 C1205.0 442.7 1206.7 436.3 1214.0 432.0 C1221.3 427.7 1234.7 422.5 1242.0 420.0 C1249.3 417.5 1255.3 417.5 1258.0 417.0" fill="none" stroke="#0a0c0e" stroke-width="7.4" stroke-linecap="round" stroke-linejoin="round"/>
<path d="M1172.0 452.4 C1173.7 453.1 1179.0 454.6 1182.0 456.4 C1185.0 458.2 1188.7 461.9 1190.0 463.0" fill="none" stroke="#0a0c0e" stroke-width="6.4" stroke-linecap="round" stroke-linejoin="round"/>
<path d="M572.0 481.0 C580.0 484.5 605.4 496.2 620.1 502.1 C634.8 507.9 646.8 511.7 660.1 516.1 C673.5 520.4 690.2 525.6 700.2 528.1 C710.2 530.6 713.5 531.8 720.2 531.1 C726.9 530.4 733.6 526.1 740.2 524.1 C746.9 522.1 753.6 520.1 760.3 519.1 C766.9 518.1 771.9 517.9 780.3 518.1 C788.6 518.2 800.3 518.6 810.3 520.1 C820.3 521.6 828.7 523.4 840.4 527.1 C852.0 530.8 873.4 539.6 880.0 542.1" fill="none" stroke="#0a0c0e" stroke-width="7.9" stroke-linecap="round" stroke-linejoin="round"/>
<path d="M660.1 516.1 C664.8 518.1 678.8 523.9 688.2 528.1 C697.5 532.3 707.5 536.4 716.2 541.1 C724.9 545.8 732.9 551.3 740.2 556.1 C747.6 561.0 754.9 566.1 760.3 570.1 C765.6 574.1 767.3 575.5 772.3 580.1 C777.3 584.8 784.6 592.2 790.3 598.2 C796.0 604.1 803.6 613.0 806.3 616.0" fill="none" stroke="#0a0c0e" stroke-width="7.4" stroke-linecap="round" stroke-linejoin="round"/>
<path d="M880.0 544.1 C885.0 546.4 900.0 555.8 910.0 558.1 C920.1 560.5 931.1 560.1 940.1 558.1 C949.1 556.1 956.4 552.1 964.1 546.1 C971.8 540.1 976.8 530.4 986.1 522.1 C995.5 513.7 1010.2 503.1 1020.2 496.0 C1030.2 489.0 1036.9 483.4 1046.2 480.0 C1055.6 476.7 1065.6 477.0 1076.2 476.0 C1086.9 475.1 1099.9 476.6 1110.3 474.4 C1120.6 472.2 1133.7 464.9 1138.3 463.0" fill="none" stroke="#0a0c0e" stroke-width="7.9" stroke-linecap="round" stroke-linejoin="round"/>
<path d="M992.1 462.0 C992.0 465.3 991.1 475.4 991.1 482.0 C991.1 488.7 991.6 495.4 992.1 502.1 C992.6 508.7 993.1 515.4 994.1 522.1 C995.1 528.8 996.5 535.4 998.1 542.1 C999.8 548.8 1002.2 555.5 1004.2 562.1 C1006.2 568.8 1008.8 576.1 1010.2 582.2 C1011.5 588.2 1010.8 592.5 1012.2 598.2 C1013.5 603.8 1017.2 613.0 1018.2 616.0" fill="none" stroke="#0a0c0e" stroke-width="6.9" stroke-linecap="round" stroke-linejoin="round"/>
<path d="M780.3 582.0 C783.6 585.7 793.0 595.7 800.3 604.0 C807.6 612.4 817.0 622.4 824.3 632.1 C831.7 641.7 839.3 653.8 844.4 662.1 C849.4 670.4 850.7 675.8 854.4 682.1 C858.0 688.5 862.1 694.8 866.4 700.1 C870.7 705.5 877.7 711.8 880.0 714.2" fill="none" stroke="#0a0c0e" stroke-width="7.4" stroke-linecap="round" stroke-linejoin="round"/>
<path d="M880.0 712.2 C883.3 713.5 892.3 718.8 900.0 720.2 C907.7 721.5 914.4 722.8 926.1 720.2 C937.7 717.5 954.4 708.5 970.1 704.2 C985.8 699.8 1006.8 697.8 1020.2 694.1 C1033.5 690.5 1040.2 686.1 1050.2 682.1 C1060.2 678.1 1070.2 672.8 1080.3 670.1 C1090.3 667.4 1100.3 666.4 1110.3 666.1 C1120.3 665.8 1125.4 667.3 1140.3 668.1 C1155.3 668.9 1190.1 670.6 1200.0 671.1" fill="none" stroke="#0a0c0e" stroke-width="8.4" stroke-linecap="round" stroke-linejoin="round"/>
<path d="M1011.2 582.0 C1012.0 588.7 1014.7 608.7 1016.2 622.1 C1017.7 635.4 1018.2 650.1 1020.2 662.1 C1022.2 674.1 1025.5 684.5 1028.2 694.1 C1030.9 703.8 1034.9 715.8 1036.2 720.2" fill="none" stroke="#0a0c0e" stroke-width="6.4" stroke-linecap="round" stroke-linejoin="round"/>
<path d="M1188.0 460.0 C1191.0 463.0 1200.3 473.0 1206.0 478.0 C1211.7 483.0 1216.0 487.7 1222.0 490.0 C1228.0 492.3 1236.0 492.7 1242.0 492.0 C1248.0 491.3 1255.3 487.0 1258.0 486.0" fill="none" stroke="#0a0c0e" stroke-width="6.4" stroke-linecap="round" stroke-linejoin="round"/>
<path d="M1182.0 668.0 C1188.7 666.8 1209.3 663.2 1222.0 661.0 C1234.7 658.8 1252.0 656.0 1258.0 655.0" fill="none" stroke="#0a0c0e" stroke-width="8.4" stroke-linecap="round" stroke-linejoin="round"/>
</g>
<g id="L-mw">
<path d="M264.3 0.0 C265.2 6.0 267.6 24.4 269.3 36.0 C271.1 47.7 272.7 56.1 274.7 70.1 C276.7 84.1 279.6 106.2 281.4 120.2 C283.1 134.1 284.7 148.4 285.4 154.0" fill="none" stroke="#262935" stroke-width="4.9" stroke-linecap="round" stroke-linejoin="round"/>
<path d="M889.3 0.0 C890.5 4.0 893.8 15.7 896.3 24.0 C898.8 32.4 901.3 39.0 904.3 50.1 C907.3 61.1 911.3 77.8 914.3 90.1 C917.3 102.5 920.0 113.5 922.4 124.2 C924.7 134.8 927.4 149.0 928.4 154.0" fill="none" stroke="#262935" stroke-width="4.9" stroke-linecap="round" stroke-linejoin="round"/>
<path d="M1188.3 0.0 C1188.1 6.7 1187.0 28.4 1187.3 40.1 C1187.6 51.7 1187.8 60.7 1190.3 70.1 C1192.8 79.4 1196.3 87.8 1202.3 96.1 C1208.3 104.5 1216.4 111.5 1226.4 120.2 C1236.3 128.8 1256.1 143.5 1262.0 148.2" fill="none" stroke="#262935" stroke-width="5.4" stroke-linecap="round" stroke-linejoin="round"/>
<path d="M285.4 154.0 C285.9 160.7 287.7 179.7 288.4 194.1 C289.0 208.4 289.2 232.4 289.4 240.1" fill="none" stroke="#262935" stroke-width="5.4" stroke-linecap="round" stroke-linejoin="round"/>
<path d="M0.0 434.1 L48.2 436.8" fill="none" stroke="#262935" stroke-width="4.6" stroke-linecap="round" stroke-linejoin="round"/>
<path d="M278.6 710.6 L275.2 734.2" fill="none" stroke="#262935" stroke-width="4.4" stroke-linecap="round" stroke-linejoin="round"/>
<path d="M926.4 154.0 C926.9 159.0 928.4 175.2 929.4 184.0 C930.4 192.9 931.9 203.2 932.4 207.1" fill="none" stroke="#262935" stroke-width="4.4" stroke-linecap="round" stroke-linejoin="round"/>
<path d="M968.1 342.0 C970.4 344.4 978.6 351.1 982.1 356.1 C985.6 361.1 987.9 365.4 989.1 372.1 C990.4 378.8 989.5 388.1 989.7 396.1 C990.0 404.1 990.3 413.1 990.5 420.1 C990.8 427.1 991.1 431.2 991.3 438.2 C991.6 445.1 992.0 458.0 992.1 462.0" fill="none" stroke="#262935" stroke-width="5.4" stroke-linecap="round" stroke-linejoin="round"/>
<path d="M994.5 426.1 C996.1 429.2 999.9 439.5 1004.2 444.2 C1008.4 448.8 1014.7 451.2 1020.2 454.2 C1025.7 457.2 1034.4 460.7 1037.2 462.0" fill="none" stroke="#262935" stroke-width="3.2" stroke-linecap="round" stroke-linejoin="round"/>
<path d="M1136.0 463.0 C1142.0 461.2 1161.7 454.8 1172.0 452.0 C1182.3 449.2 1191.0 449.3 1198.0 446.0 C1205.0 442.7 1206.7 436.3 1214.0 432.0 C1221.3 427.7 1234.7 422.5 1242.0 420.0 C1249.3 417.5 1255.3 417.5 1258.0 417.0" fill="none" stroke="#262935" stroke-width="5.4" stroke-linecap="round" stroke-linejoin="round"/>
<path d="M1172.0 452.4 C1173.7 453.1 1179.0 454.6 1182.0 456.4 C1185.0 458.2 1188.7 461.9 1190.0 463.0" fill="none" stroke="#262935" stroke-width="4.4" stroke-linecap="round" stroke-linejoin="round"/>
<path d="M572.0 481.0 C580.0 484.5 605.4 496.2 620.1 502.1 C634.8 507.9 646.8 511.7 660.1 516.1 C673.5 520.4 690.2 525.6 700.2 528.1 C710.2 530.6 713.5 531.8 720.2 531.1 C726.9 530.4 733.6 526.1 740.2 524.1 C746.9 522.1 753.6 520.1 760.3 519.1 C766.9 518.1 771.9 517.9 780.3 518.1 C788.6 518.2 800.3 518.6 810.3 520.1 C820.3 521.6 828.7 523.4 840.4 527.1 C852.0 530.8 873.4 539.6 880.0 542.1" fill="none" stroke="#262935" stroke-width="5.9" stroke-linecap="round" stroke-linejoin="round"/>
<path d="M660.1 516.1 C664.8 518.1 678.8 523.9 688.2 528.1 C697.5 532.3 707.5 536.4 716.2 541.1 C724.9 545.8 732.9 551.3 740.2 556.1 C747.6 561.0 754.9 566.1 760.3 570.1 C765.6 574.1 767.3 575.5 772.3 580.1 C777.3 584.8 784.6 592.2 790.3 598.2 C796.0 604.1 803.6 613.0 806.3 616.0" fill="none" stroke="#262935" stroke-width="5.4" stroke-linecap="round" stroke-linejoin="round"/>
<path d="M880.0 544.1 C885.0 546.4 900.0 555.8 910.0 558.1 C920.1 560.5 931.1 560.1 940.1 558.1 C949.1 556.1 956.4 552.1 964.1 546.1 C971.8 540.1 976.8 530.4 986.1 522.1 C995.5 513.7 1010.2 503.1 1020.2 496.0 C1030.2 489.0 1036.9 483.4 1046.2 480.0 C1055.6 476.7 1065.6 477.0 1076.2 476.0 C1086.9 475.1 1099.9 476.6 1110.3 474.4 C1120.6 472.2 1133.7 464.9 1138.3 463.0" fill="none" stroke="#262935" stroke-width="5.9" stroke-linecap="round" stroke-linejoin="round"/>
<path d="M1036.2 462.0 C1036.6 464.0 1037.5 470.7 1038.6 474.0 C1039.7 477.4 1041.9 480.7 1042.6 482.0" fill="none" stroke="#262935" stroke-width="3.2" stroke-linecap="round" stroke-linejoin="round"/>
<path d="M992.1 462.0 C992.0 465.3 991.1 475.4 991.1 482.0 C991.1 488.7 991.6 495.4 992.1 502.1 C992.6 508.7 993.1 515.4 994.1 522.1 C995.1 528.8 996.5 535.4 998.1 542.1 C999.8 548.8 1002.2 555.5 1004.2 562.1 C1006.2 568.8 1008.8 576.1 1010.2 582.2 C1011.5 588.2 1010.8 592.5 1012.2 598.2 C1013.5 603.8 1017.2 613.0 1018.2 616.0" fill="none" stroke="#262935" stroke-width="4.9" stroke-linecap="round" stroke-linejoin="round"/>
<path d="M780.3 582.0 C783.6 585.7 793.0 595.7 800.3 604.0 C807.6 612.4 817.0 622.4 824.3 632.1 C831.7 641.7 839.3 653.8 844.4 662.1 C849.4 670.4 850.7 675.8 854.4 682.1 C858.0 688.5 862.1 694.8 866.4 700.1 C870.7 705.5 877.7 711.8 880.0 714.2" fill="none" stroke="#262935" stroke-width="5.4" stroke-linecap="round" stroke-linejoin="round"/>
<path d="M880.0 712.2 C883.3 713.5 892.3 718.8 900.0 720.2 C907.7 721.5 914.4 722.8 926.1 720.2 C937.7 717.5 954.4 708.5 970.1 704.2 C985.8 699.8 1006.8 697.8 1020.2 694.1 C1033.5 690.5 1040.2 686.1 1050.2 682.1 C1060.2 678.1 1070.2 672.8 1080.3 670.1 C1090.3 667.4 1100.3 666.4 1110.3 666.1 C1120.3 665.8 1125.4 667.3 1140.3 668.1 C1155.3 668.9 1190.1 670.6 1200.0 671.1" fill="none" stroke="#262935" stroke-width="6.4" stroke-linecap="round" stroke-linejoin="round"/>
<path d="M1020.2 697.1 C1025.2 696.8 1041.9 697.5 1050.2 695.1 C1058.6 692.8 1062.6 687.1 1070.2 683.1 C1077.9 679.1 1091.9 673.1 1096.3 671.1" fill="none" stroke="#262935" stroke-width="3" stroke-linecap="round" stroke-linejoin="round"/>
<path d="M1011.2 582.0 C1012.0 588.7 1014.7 608.7 1016.2 622.1 C1017.7 635.4 1018.2 650.1 1020.2 662.1 C1022.2 674.1 1025.5 684.5 1028.2 694.1 C1030.9 703.8 1034.9 715.8 1036.2 720.2" fill="none" stroke="#262935" stroke-width="4.4" stroke-linecap="round" stroke-linejoin="round"/>
<path d="M1188.0 460.0 C1191.0 463.0 1200.3 473.0 1206.0 478.0 C1211.7 483.0 1216.0 487.7 1222.0 490.0 C1228.0 492.3 1236.0 492.7 1242.0 492.0 C1248.0 491.3 1255.3 487.0 1258.0 486.0" fill="none" stroke="#262935" stroke-width="4.4" stroke-linecap="round" stroke-linejoin="round"/>
<path d="M1182.0 668.0 C1188.7 666.8 1209.3 663.2 1222.0 661.0 C1234.7 658.8 1252.0 656.0 1258.0 655.0" fill="none" stroke="#262935" stroke-width="6.4" stroke-linecap="round" stroke-linejoin="round"/>
</g>
<g id="L-mwblue">
<path d="M264.3 0.0 C265.2 6.0 267.6 24.4 269.3 36.0 C271.1 47.7 272.7 56.1 274.7 70.1 C276.7 84.1 279.6 106.2 281.4 120.2 C283.1 134.1 284.7 148.4 285.4 154.0" fill="none" stroke="#0d0f12" stroke-width="1.0" stroke-linecap="round" stroke-linejoin="round"/>
<path d="M889.3 0.0 C890.5 4.0 893.8 15.7 896.3 24.0 C898.8 32.4 901.3 39.0 904.3 50.1 C907.3 61.1 911.3 77.8 914.3 90.1 C917.3 102.5 920.0 113.5 922.4 124.2 C924.7 134.8 927.4 149.0 928.4 154.0" fill="none" stroke="#0d0f12" stroke-width="1.0" stroke-linecap="round" stroke-linejoin="round"/>
<path d="M1188.3 0.0 C1188.1 6.7 1187.0 28.4 1187.3 40.1 C1187.6 51.7 1187.8 60.7 1190.3 70.1 C1192.8 79.4 1196.3 87.8 1202.3 96.1 C1208.3 104.5 1216.4 111.5 1226.4 120.2 C1236.3 128.8 1256.1 143.5 1262.0 148.2" fill="none" stroke="#0d0f12" stroke-width="1.0" stroke-linecap="round" stroke-linejoin="round"/>
<path d="M285.4 154.0 C285.9 160.7 287.7 179.7 288.4 194.1 C289.0 208.4 289.2 232.4 289.4 240.1" fill="none" stroke="#0d0f12" stroke-width="1.0" stroke-linecap="round" stroke-linejoin="round"/>
<path d="M278.6 710.6 L275.2 734.2" fill="none" stroke="#0d0f12" stroke-width="1.0" stroke-linecap="round" stroke-linejoin="round"/>
<path d="M926.4 154.0 C926.9 159.0 928.4 175.2 929.4 184.0 C930.4 192.9 931.9 203.2 932.4 207.1" fill="none" stroke="#0d0f12" stroke-width="1.0" stroke-linecap="round" stroke-linejoin="round"/>
<circle cx="926.8" cy="162.0" r="2.2" fill="#2a3f9a"/>
<circle cx="929.6" cy="185.0" r="2.2" fill="#2a3f9a"/>
<path d="M968.1 342.0 C970.4 344.4 978.6 351.1 982.1 356.1 C985.6 361.1 987.9 365.4 989.1 372.1 C990.4 378.8 989.5 388.1 989.7 396.1 C990.0 404.1 990.3 413.1 990.5 420.1 C990.8 427.1 991.1 431.2 991.3 438.2 C991.6 445.1 992.0 458.0 992.1 462.0" fill="none" stroke="#0d0f12" stroke-width="1.0" stroke-linecap="round" stroke-linejoin="round"/>
<path d="M1136.0 463.0 C1142.0 461.2 1161.7 454.8 1172.0 452.0 C1182.3 449.2 1191.0 449.3 1198.0 446.0 C1205.0 442.7 1206.7 436.3 1214.0 432.0 C1221.3 427.7 1234.7 422.5 1242.0 420.0 C1249.3 417.5 1255.3 417.5 1258.0 417.0" fill="none" stroke="#0d0f12" stroke-width="1.0" stroke-linecap="round" stroke-linejoin="round"/>
<path d="M1172.0 452.4 C1173.7 453.1 1179.0 454.6 1182.0 456.4 C1185.0 458.2 1188.7 461.9 1190.0 463.0" fill="none" stroke="#0d0f12" stroke-width="1.0" stroke-linecap="round" stroke-linejoin="round"/>
<path d="M572.0 481.0 C580.0 484.5 605.4 496.2 620.1 502.1 C634.8 507.9 646.8 511.7 660.1 516.1 C673.5 520.4 690.2 525.6 700.2 528.1 C710.2 530.6 713.5 531.8 720.2 531.1 C726.9 530.4 733.6 526.1 740.2 524.1 C746.9 522.1 753.6 520.1 760.3 519.1 C766.9 518.1 771.9 517.9 780.3 518.1 C788.6 518.2 800.3 518.6 810.3 520.1 C820.3 521.6 828.7 523.4 840.4 527.1 C852.0 530.8 873.4 539.6 880.0 542.1" fill="none" stroke="#0d0f12" stroke-width="1.0" stroke-linecap="round" stroke-linejoin="round"/>
<path d="M660.1 516.1 C664.8 518.1 678.8 523.9 688.2 528.1 C697.5 532.3 707.5 536.4 716.2 541.1 C724.9 545.8 732.9 551.3 740.2 556.1 C747.6 561.0 754.9 566.1 760.3 570.1 C765.6 574.1 767.3 575.5 772.3 580.1 C777.3 584.8 784.6 592.2 790.3 598.2 C796.0 604.1 803.6 613.0 806.3 616.0" fill="none" stroke="#0d0f12" stroke-width="1.0" stroke-linecap="round" stroke-linejoin="round"/>
<rect x="577.5" y="481.6" width="7" height="4" fill="#3a3f5a" transform="rotate(20 581.0 483.6)"/>
<rect x="706.7" y="529.1" width="7" height="4" fill="#3a3f5a" transform="rotate(20 710.2 531.1)"/>
<rect x="732.7" y="524.1" width="7" height="4" fill="#3a3f5a" transform="rotate(20 736.2 526.1)"/>
<rect x="714.7" y="539.1" width="7" height="4" fill="#3a3f5a" transform="rotate(20 718.2 541.1)"/>
<rect x="831.8" y="524.1" width="7" height="4" fill="#3a3f5a" transform="rotate(20 835.3 526.1)"/>
<rect x="766.8" y="576.1" width="7" height="4" fill="#3a3f5a" transform="rotate(20 770.3 578.1)"/>
<path d="M880.0 544.1 C885.0 546.4 900.0 555.8 910.0 558.1 C920.1 560.5 931.1 560.1 940.1 558.1 C949.1 556.1 956.4 552.1 964.1 546.1 C971.8 540.1 976.8 530.4 986.1 522.1 C995.5 513.7 1010.2 503.1 1020.2 496.0 C1030.2 489.0 1036.9 483.4 1046.2 480.0 C1055.6 476.7 1065.6 477.0 1076.2 476.0 C1086.9 475.1 1099.9 476.6 1110.3 474.4 C1120.6 472.2 1133.7 464.9 1138.3 463.0" fill="none" stroke="#0d0f12" stroke-width="1.0" stroke-linecap="round" stroke-linejoin="round"/>
<path d="M992.1 462.0 C992.0 465.3 991.1 475.4 991.1 482.0 C991.1 488.7 991.6 495.4 992.1 502.1 C992.6 508.7 993.1 515.4 994.1 522.1 C995.1 528.8 996.5 535.4 998.1 542.1 C999.8 548.8 1002.2 555.5 1004.2 562.1 C1006.2 568.8 1008.8 576.1 1010.2 582.2 C1011.5 588.2 1010.8 592.5 1012.2 598.2 C1013.5 603.8 1017.2 613.0 1018.2 616.0" fill="none" stroke="#0d0f12" stroke-width="1.0" stroke-linecap="round" stroke-linejoin="round"/>
<path d="M984.1 558.1 L1000.2 528.1" fill="none" stroke="#2a3f9a" stroke-width="1.3" stroke-linecap="round" stroke-linejoin="round"/>
<path d="M970.1 550.1 L980.1 540.1" fill="none" stroke="#2a3f9a" stroke-width="1.3" stroke-linecap="round" stroke-linejoin="round"/>
<path d="M1118.3 474.0 L1132.3 468.0" fill="none" stroke="#2a3f9a" stroke-width="1.3" stroke-linecap="round" stroke-linejoin="round"/>
<path d="M1156.3 468.0 L1160.4 522.1" fill="none" stroke="#2a3f9a" stroke-width="1.3" stroke-linecap="round" stroke-linejoin="round"/>
<path d="M1032.2 474.0 L1048.2 470.0" fill="none" stroke="#2a3f9a" stroke-width="1.3" stroke-linecap="round" stroke-linejoin="round"/>
<path d="M1130.3 470.0 L1136.3 510.1" fill="none" stroke="#2a3f9a" stroke-width="1.3" stroke-linecap="round" stroke-linejoin="round"/>
<path d="M1000.2 546.1 L1024.2 547.1" fill="none" stroke="#2a3f9a" stroke-width="1.3" stroke-linecap="round" stroke-linejoin="round"/>
<rect x="963.6" y="538.9" width="9" height="4.4" fill="#3a3f5a" transform="rotate(-45 968.1 541.1)"/>
<rect x="987.6" y="513.9" width="9" height="4.4" fill="#3a3f5a" transform="rotate(-40 992.1 516.1)"/>
<rect x="1017.7" y="491.8" width="9" height="4.4" fill="#3a3f5a" transform="rotate(-40 1022.2 494.0)"/>
<rect x="1039.7" y="477.8" width="9" height="4.4" fill="#3a3f5a" transform="rotate(-25 1044.2 480.0)"/>
<rect x="1072.7" y="473.8" width="9" height="4.4" fill="#3a3f5a" transform="rotate(0 1077.2 476.0)"/>
<rect x="1001.7" y="567.9" width="9" height="4.4" fill="#3a3f5a" transform="rotate(70 1006.2 570.1)"/>
<rect x="880.5" y="544.9" width="9" height="4.4" fill="#3a3f5a" transform="rotate(25 885.0 547.1)"/>
<path d="M780.3 582.0 C783.6 585.7 793.0 595.7 800.3 604.0 C807.6 612.4 817.0 622.4 824.3 632.1 C831.7 641.7 839.3 653.8 844.4 662.1 C849.4 670.4 850.7 675.8 854.4 682.1 C858.0 688.5 862.1 694.8 866.4 700.1 C870.7 705.5 877.7 711.8 880.0 714.2" fill="none" stroke="#0d0f12" stroke-width="1.0" stroke-linecap="round" stroke-linejoin="round"/>
<circle cx="824.7" cy="633.1" r="2.6" fill="#2f3a7a"/>
<circle cx="845.4" cy="663.1" r="2.6" fill="#2f3a7a"/>
<circle cx="866.4" cy="699.1" r="2.6" fill="#2f3a7a"/>
<path d="M880.0 712.2 C883.3 713.5 892.3 718.8 900.0 720.2 C907.7 721.5 914.4 722.8 926.1 720.2 C937.7 717.5 954.4 708.5 970.1 704.2 C985.8 699.8 1006.8 697.8 1020.2 694.1 C1033.5 690.5 1040.2 686.1 1050.2 682.1 C1060.2 678.1 1070.2 672.8 1080.3 670.1 C1090.3 667.4 1100.3 666.4 1110.3 666.1 C1120.3 665.8 1125.4 667.3 1140.3 668.1 C1155.3 668.9 1190.1 670.6 1200.0 671.1" fill="none" stroke="#0d0f12" stroke-width="1.0" stroke-linecap="round" stroke-linejoin="round"/>
<path d="M1011.2 582.0 C1012.0 588.7 1014.7 608.7 1016.2 622.1 C1017.7 635.4 1018.2 650.1 1020.2 662.1 C1022.2 674.1 1025.5 684.5 1028.2 694.1 C1030.9 703.8 1034.9 715.8 1036.2 720.2" fill="none" stroke="#0d0f12" stroke-width="1.0" stroke-linecap="round" stroke-linejoin="round"/>
<circle cx="1018.2" cy="637.1" r="2.8" fill="#343a5e"/>
<circle cx="1019.2" cy="648.1" r="2.8" fill="#343a5e"/>
<circle cx="1020.8" cy="661.1" r="2.8" fill="#343a5e"/>
<circle cx="944.1" cy="711.2" r="2.8" fill="#343a5e"/>
<circle cx="952.5" cy="708.6" r="2.8" fill="#343a5e"/>
<path d="M884.0 715.2 L900.0 721.2" fill="none" stroke="#2a3f9a" stroke-width="1.4" stroke-linecap="round" stroke-linejoin="round"/>
<path d="M1020.2 688.1 L1040.2 684.1" fill="none" stroke="#2a3f9a" stroke-width="1.4" stroke-linecap="round" stroke-linejoin="round"/>
<path d="M1050.2 680.1 L1072.2 672.1" fill="none" stroke="#2a3f9a" stroke-width="1.4" stroke-linecap="round" stroke-linejoin="round"/>
<path d="M1092.3 667.1 L1104.3 665.1" fill="none" stroke="#2a3f9a" stroke-width="1.4" stroke-linecap="round" stroke-linejoin="round"/>
<path d="M1112.3 661.1 L1122.3 659.1" fill="none" stroke="#2a3f9a" stroke-width="1.4" stroke-linecap="round" stroke-linejoin="round"/>
<path d="M1024.2 698.1 L1046.2 697.1" fill="none" stroke="#2a3f9a" stroke-width="1.4" stroke-linecap="round" stroke-linejoin="round"/>
<path d="M1028.2 702.2 L1034.2 718.2" fill="none" stroke="#2a3f9a" stroke-width="1.4" stroke-linecap="round" stroke-linejoin="round"/>
<path d="M1146.3 669.1 L1148.3 672.1" fill="none" stroke="#2a3f9a" stroke-width="1.4" stroke-linecap="round" stroke-linejoin="round"/>
<path d="M1158.3 668.1 L1160.4 672.1" fill="none" stroke="#2a3f9a" stroke-width="1.4" stroke-linecap="round" stroke-linejoin="round"/>
<path d="M1104.3 588.0 L1120.3 590.0" fill="none" stroke="#2a3f9a" stroke-width="1.4" stroke-linecap="round" stroke-linejoin="round"/>
<path d="M1096.3 636.1 L1120.3 645.1" fill="none" stroke="#2a3f9a" stroke-width="1.4" stroke-linecap="round" stroke-linejoin="round"/>
<path d="M1108.3 624.1 L1124.3 631.1" fill="none" stroke="#2a3f9a" stroke-width="1.4" stroke-linecap="round" stroke-linejoin="round"/>
<path d="M1188.0 460.0 C1191.0 463.0 1200.3 473.0 1206.0 478.0 C1211.7 483.0 1216.0 487.7 1222.0 490.0 C1228.0 492.3 1236.0 492.7 1242.0 492.0 C1248.0 491.3 1255.3 487.0 1258.0 486.0" fill="none" stroke="#0d0f12" stroke-width="1.0" stroke-linecap="round" stroke-linejoin="round"/>
<path d="M1155.0 466.0 C1155.5 470.3 1157.7 483.0 1158.0 492.0 C1158.3 501.0 1157.2 515.3 1157.0 520.0" fill="none" stroke="#2a3f9a" stroke-width="1.3" stroke-linecap="round" stroke-linejoin="round"/>
<path d="M1162.0 474.0 L1161.0 520.0" fill="none" stroke="#2a3f9a" stroke-width="1.3" stroke-linecap="round" stroke-linejoin="round"/>
<path d="M1166.0 472.0 L1172.0 482.0" fill="none" stroke="#2a3f9a" stroke-width="1.3" stroke-linecap="round" stroke-linejoin="round"/>
<path d="M1190.0 462.0 L1202.0 476.0" fill="none" stroke="#2a3f9a" stroke-width="1.3" stroke-linecap="round" stroke-linejoin="round"/>
<path d="M1242.0 490.0 L1258.0 484.0" fill="none" stroke="#2a3f9a" stroke-width="1.3" stroke-linecap="round" stroke-linejoin="round"/>
<path d="M1182.0 668.0 C1188.7 666.8 1209.3 663.2 1222.0 661.0 C1234.7 658.8 1252.0 656.0 1258.0 655.0" fill="none" stroke="#0d0f12" stroke-width="1.0" stroke-linecap="round" stroke-linejoin="round"/>
<path d="M1228.0 658.0 L1230.0 664.0" fill="none" stroke="#2a3f9a" stroke-width="1.4" stroke-linecap="round" stroke-linejoin="round"/>
<path d="M1234.0 656.0 L1242.0 659.0" fill="none" stroke="#2a3f9a" stroke-width="1.4" stroke-linecap="round" stroke-linejoin="round"/>
<path d="M1190.0 665.0 L1196.0 667.0" fill="none" stroke="#2a3f9a" stroke-width="1.4" stroke-linecap="round" stroke-linejoin="round"/>
</g>
<g id="L-shield">
<rect x="71.2" y="4.8" width="9" height="6.4" rx="1" fill="#5e645e" opacity=".75"/><text x="75.7" y="10.0" font-size="5.5" fill="#2a2f2a" text-anchor="middle" font-family="Liberation Sans" font-weight="bold">29</text>
<path d="M279.4 145.2 h8 q.6 3 -1 5.4 q-2 1.8 -3 2.2 q-1 -.4 -3 -2.2 q-1.6 -2.4 -1 -5.4z" fill="#3a3a86"/><path d="M279.4 145.2 h8 l.1 1.6 h-8.2z" fill="#8a3440"/><text x="283.4" y="151.4" font-size="5" fill="#b8b8d8" text-anchor="middle" font-family="Liberation Sans" font-weight="bold">270</text>
<rect x="327.9" y="105.9" width="9" height="6.4" rx="1" fill="#5e645e" opacity=".75"/><text x="332.4" y="111.1" font-size="5.5" fill="#2a2f2a" text-anchor="middle" font-family="Liberation Sans" font-weight="bold">29</text>
<rect x="665.1" y="37.9" width="9" height="6.4" rx="1" fill="#5e645e" opacity=".75"/><text x="669.6" y="43.1" font-size="5.5" fill="#2a2f2a" text-anchor="middle" font-family="Liberation Sans" font-weight="bold">33</text>
<rect x="904.8" y="70.9" width="9" height="6.4" rx="1" fill="#5e645e" opacity=".75"/><text x="909.3" y="76.1" font-size="5.5" fill="#2a2f2a" text-anchor="middle" font-family="Liberation Sans" font-weight="bold">315</text>
<rect x="1133.7" y="13.8" width="9" height="6.4" rx="1" fill="#5e645e" opacity=".75"/><text x="1138.2" y="19.0" font-size="5.5" fill="#2a2f2a" text-anchor="middle" font-family="Liberation Sans" font-weight="bold">23</text>
<rect x="25.5" y="165.8" width="9" height="6.4" rx="1" fill="#5e645e" opacity=".75"/><text x="30.0" y="171.0" font-size="5.5" fill="#2a2f2a" text-anchor="middle" font-family="Liberation Sans" font-weight="bold">33</text>
<rect x="26.6" y="474.1" width="9" height="6.4" rx="1" fill="#5e645e" opacity=".75"/><text x="31.1" y="479.3" font-size="5.5" fill="#2a2f2a" text-anchor="middle" font-family="Liberation Sans" font-weight="bold">22</text>
<path d="M275.2 702.2 h8 q.6 3 -1 5.4 q-2 1.8 -3 2.2 q-1 -.4 -3 -2.2 q-1.6 -2.4 -1 -5.4z" fill="#3a3a86"/><path d="M275.2 702.2 h8 l.1 1.6 h-8.2z" fill="#8a3440"/><text x="279.2" y="708.4" font-size="5" fill="#b8b8d8" text-anchor="middle" font-family="Liberation Sans" font-weight="bold">270</text>
<rect x="124.4" y="701.6" width="9" height="6.4" rx="1" fill="#5e645e" opacity=".75"/><text x="128.9" y="706.8" font-size="5.5" fill="#2a2f2a" text-anchor="middle" font-family="Liberation Sans" font-weight="bold">33</text>
<rect x="1153.8" y="271.4" width="9" height="6.4" rx="1" fill="#5e645e" opacity=".75"/><text x="1158.3" y="276.6" font-size="5.5" fill="#2a2f2a" text-anchor="middle" font-family="Liberation Sans" font-weight="bold">23</text>
<rect x="677.7" y="377.3" width="9" height="6.4" rx="1" fill="#5e645e" opacity=".75"/><text x="682.2" y="382.5" font-size="5.5" fill="#2a2f2a" text-anchor="middle" font-family="Liberation Sans" font-weight="bold">33</text>
<rect x="985.6" y="409.3" width="9" height="6.4" rx="1" fill="#5e645e" opacity=".75"/><text x="990.1" y="414.5" font-size="5.5" fill="#2a2f2a" text-anchor="middle" font-family="Liberation Sans" font-weight="bold">315</text>
<path d="M1180.4 446.4 h8 q.6 3 -1 5.4 q-2 1.8 -3 2.2 q-1 -.4 -3 -2.2 q-1.6 -2.4 -1 -5.4z" fill="#3a3a86"/><path d="M1180.4 446.4 h8 l.1 1.6 h-8.2z" fill="#8a3440"/><text x="1184.4" y="452.6" font-size="5" fill="#b8b8d8" text-anchor="middle" font-family="Liberation Sans" font-weight="bold">670</text>
<path d="M1251.0 327.0 h8 q.6 3 -1 5.4 q-2 1.8 -3 2.2 q-1 -.4 -3 -2.2 q-1.6 -2.4 -1 -5.4z" fill="#3a3a86"/><path d="M1251.0 327.0 h8 l.1 1.6 h-8.2z" fill="#8a3440"/><text x="1255.0" y="333.2" font-size="5" fill="#b8b8d8" text-anchor="middle" font-family="Liberation Sans" font-weight="bold">71</text>
<path d="M653.5 510.1 h8 q.6 3 -1 5.4 q-2 1.8 -3 2.2 q-1 -.4 -3 -2.2 q-1.6 -2.4 -1 -5.4z" fill="#3a3a86"/><path d="M653.5 510.1 h8 l.1 1.6 h-8.2z" fill="#8a3440"/><text x="657.5" y="516.3" font-size="5" fill="#b8b8d8" text-anchor="middle" font-family="Liberation Sans" font-weight="bold">670</text>
<path d="M683.8 525.7 h8 q.6 3 -1 5.4 q-2 1.8 -3 2.2 q-1 -.4 -3 -2.2 q-1.6 -2.4 -1 -5.4z" fill="#3a3a86"/><path d="M683.8 525.7 h8 l.1 1.6 h-8.2z" fill="#8a3440"/><text x="687.8" y="531.9" font-size="5" fill="#b8b8d8" text-anchor="middle" font-family="Liberation Sans" font-weight="bold">70</text>
<path d="M777.7 515.1 h8 q.6 3 -1 5.4 q-2 1.8 -3 2.2 q-1 -.4 -3 -2.2 q-1.6 -2.4 -1 -5.4z" fill="#3a3a86"/><path d="M777.7 515.1 h8 l.1 1.6 h-8.2z" fill="#8a3440"/><text x="781.7" y="521.3" font-size="5" fill="#b8b8d8" text-anchor="middle" font-family="Liberation Sans" font-weight="bold">670</text>
<path d="M776.9 583.2 h8 q.6 3 -1 5.4 q-2 1.8 -3 2.2 q-1 -.4 -3 -2.2 q-1.6 -2.4 -1 -5.4z" fill="#3a3a86"/><path d="M776.9 583.2 h8 l.1 1.6 h-8.2z" fill="#8a3440"/><text x="780.9" y="589.4" font-size="5" fill="#b8b8d8" text-anchor="middle" font-family="Liberation Sans" font-weight="bold">70</text>
<rect x="781.4" y="465.8" width="9" height="6.4" rx="1" fill="#5e645e" opacity=".75"/><text x="785.9" y="471.0" font-size="5.5" fill="#2a2f2a" text-anchor="middle" font-family="Liberation Sans" font-weight="bold">33</text>
<rect x="988.6" y="479.4" width="9" height="6.4" rx="1" fill="#5e645e" opacity=".75"/><text x="993.1" y="484.6" font-size="5.5" fill="#2a2f2a" text-anchor="middle" font-family="Liberation Sans" font-weight="bold">315</text>
<rect x="996.3" y="542.9" width="9" height="6.4" rx="1" fill="#5e645e" opacity=".75"/><text x="1000.8" y="548.1" font-size="5.5" fill="#2a2f2a" text-anchor="middle" font-family="Liberation Sans" font-weight="bold">33</text>
<rect x="610.0" y="648.5" width="9" height="6.4" rx="1" fill="#5e645e" opacity=".75"/><text x="614.5" y="653.7" font-size="5.5" fill="#2a2f2a" text-anchor="middle" font-family="Liberation Sans" font-weight="bold">40</text>
<rect x="887.5" y="619.9" width="9" height="6.4" rx="1" fill="#5e645e" opacity=".75"/><text x="892.0" y="625.1" font-size="5.5" fill="#2a2f2a" text-anchor="middle" font-family="Liberation Sans" font-weight="bold">40</text>
<path d="M970.1 697.1 h8 q.6 3 -1 5.4 q-2 1.8 -3 2.2 q-1 -.4 -3 -2.2 q-1.6 -2.4 -1 -5.4z" fill="#3a3a86"/><path d="M970.1 697.1 h8 l.1 1.6 h-8.2z" fill="#8a3440"/><text x="974.1" y="703.3" font-size="5" fill="#b8b8d8" text-anchor="middle" font-family="Liberation Sans" font-weight="bold">70</text>
<rect x="1022.7" y="676.5" width="9" height="6.4" rx="1" fill="#5e645e" opacity=".75"/><text x="1027.2" y="681.7" font-size="5.5" fill="#2a2f2a" text-anchor="middle" font-family="Liberation Sans" font-weight="bold">315</text>
<path d="M1174.4 663.7 h8 q.6 3 -1 5.4 q-2 1.8 -3 2.2 q-1 -.4 -3 -2.2 q-1.6 -2.4 -1 -5.4z" fill="#3a3a86"/><path d="M1174.4 663.7 h8 l.1 1.6 h-8.2z" fill="#8a3440"/><text x="1178.4" y="669.9" font-size="5" fill="#b8b8d8" text-anchor="middle" font-family="Liberation Sans" font-weight="bold">70-71</text>
<rect x="1159.5" y="692.5" width="9" height="6.4" rx="1" fill="#5e645e" opacity=".75"/><text x="1164.0" y="697.7" font-size="5.5" fill="#2a2f2a" text-anchor="middle" font-family="Liberation Sans" font-weight="bold">23</text>
<path d="M1246.4 654.0 h8 q.6 3 -1 5.4 q-2 1.8 -3 2.2 q-1 -.4 -3 -2.2 q-1.6 -2.4 -1 -5.4z" fill="#3a3a86"/><path d="M1246.4 654.0 h8 l.1 1.6 h-8.2z" fill="#8a3440"/><text x="1250.4" y="660.2" font-size="5" fill="#b8b8d8" text-anchor="middle" font-family="Liberation Sans" font-weight="bold">71</text>
</g>
<g id="L-label">
<text x="143.4" y="15.0" font-size="8.5" font-family="Liberation Serif" font-style="italic" font-weight="normal" fill="#e4e6e4" text-anchor="middle" letter-spacing="0.3" opacity="1" stroke="#1c2b19" stroke-width="1.8" paint-order="stroke" transform="rotate(84 143.4 15.0)">Leap Rd</text>
<text x="273.9" y="69.1" font-size="8.5" font-family="Liberation Serif" font-style="italic" font-weight="normal" fill="#e4e6e4" text-anchor="middle" letter-spacing="0.3" opacity="1" stroke="#1c2b19" stroke-width="1.8" paint-order="stroke" transform="rotate(80 273.9 69.1)">Jack Nicklaus Fwy</text>
<text x="544.7" y="67.1" font-size="10.5" font-family="Liberation Sans" font-style="normal" font-weight="normal" fill="#c2c8c2" text-anchor="middle" letter-spacing="0.2" opacity="1" stroke="#1c2b19" stroke-width="1.6" paint-order="stroke">Eastcleft</text>
<text x="461.2" y="33.0" font-size="6.5" font-family="Liberation Serif" font-style="italic" font-weight="normal" fill="#a4d2f2" text-anchor="middle" letter-spacing="0.3" opacity="1" stroke="#1c2b19" stroke-width="0" paint-order="stroke" transform="rotate(-76 461.2 33.0)">Scioto River</text>
<text x="485.8" y="45.7" font-size="8" font-family="Liberation Serif" font-style="italic" font-weight="normal" fill="#e4e6e4" text-anchor="middle" letter-spacing="0.3" opacity="1" stroke="#1c2b19" stroke-width="1.8" paint-order="stroke" transform="rotate(76 485.8 45.7)">Riverside Dr</text>
<text x="587.3" y="101.1" font-size="8.5" font-family="Liberation Serif" font-style="italic" font-weight="normal" fill="#e4e6e4" text-anchor="middle" letter-spacing="0.3" opacity="1" stroke="#1c2b19" stroke-width="1.8" paint-order="stroke" transform="rotate(4 587.3 101.1)">Canterbury Rd</text>
<text x="625.0" y="47.1" font-size="8" font-family="Liberation Serif" font-style="italic" font-weight="normal" fill="#e4e6e4" text-anchor="middle" letter-spacing="0.3" opacity="1" stroke="#1c2b19" stroke-width="1.8" paint-order="stroke" transform="rotate(-84 625.0 47.1)">Mountview Rd</text>
<text x="771.2" y="42.5" font-size="8.5" font-family="Liberation Serif" font-style="italic" font-weight="normal" fill="#e4e6e4" text-anchor="middle" letter-spacing="0.3" opacity="1" stroke="#1c2b19" stroke-width="1.8" paint-order="stroke" transform="rotate(3 771.2 42.5)">Zollinger Rd</text>
<text x="661.6" y="72.5" font-size="8.5" font-family="Liberation Serif" font-style="italic" font-weight="normal" fill="#e4e6e4" text-anchor="middle" letter-spacing="0.3" opacity="1" stroke="#1c2b19" stroke-width="1.8" paint-order="stroke" transform="rotate(3 661.6 72.5)">Ridgeview Rd</text>
<text x="771.2" y="89.1" font-size="8.5" font-family="Liberation Serif" font-style="italic" font-weight="normal" fill="#e4e6e4" text-anchor="middle" letter-spacing="0.3" opacity="1" stroke="#1c2b19" stroke-width="1.8" paint-order="stroke" transform="rotate(5 771.2 89.1)">Ridgeview Rd</text>
<text x="659.0" y="107.1" font-size="8.5" font-family="Liberation Serif" font-style="italic" font-weight="normal" fill="#e4e6e4" text-anchor="middle" letter-spacing="0.3" opacity="1" stroke="#1c2b19" stroke-width="1.8" paint-order="stroke" transform="rotate(3 659.0 107.1)">Northam Rd</text>
<text x="678.0" y="150.6" font-size="8.5" font-family="Liberation Serif" font-style="italic" font-weight="normal" fill="#e4e6e4" text-anchor="middle" letter-spacing="0.3" opacity="1" stroke="#1c2b19" stroke-width="1.8" paint-order="stroke" transform="rotate(3 678.0 150.6)">W Lane Ave</text>
<text x="802.6" y="66.1" font-size="8" font-family="Liberation Serif" font-style="italic" font-weight="normal" fill="#e4e6e4" text-anchor="middle" letter-spacing="0.3" opacity="1" stroke="#1c2b19" stroke-width="1.8" paint-order="stroke" transform="rotate(-88 802.6 66.1)">N Star Rd</text>
<text x="868.3" y="42.5" font-size="8.5" font-family="Liberation Serif" font-style="italic" font-weight="normal" fill="#e4e6e4" text-anchor="middle" letter-spacing="0.3" opacity="1" stroke="#1c2b19" stroke-width="1.8" paint-order="stroke" transform="rotate(66 868.3 42.5)">Kenny Rd</text>
<text x="895.9" y="143.2" font-size="8.5" font-family="Liberation Serif" font-style="italic" font-weight="normal" fill="#e4e6e4" text-anchor="middle" letter-spacing="0.3" opacity="1" stroke="#1c2b19" stroke-width="1.8" paint-order="stroke" transform="rotate(76 895.9 143.2)">Kenny</text>
<text x="643.0" y="40.1" font-size="8" font-family="Liberation Serif" font-style="italic" font-weight="normal" fill="#e4e6e4" text-anchor="middle" letter-spacing="0.3" opacity="1" stroke="#1c2b19" stroke-width="1.8" paint-order="stroke" transform="rotate(-85 643.0 40.1)">Redding Rd</text>
<text x="892.7" y="8.0" font-size="8" font-family="Liberation Serif" font-style="italic" font-weight="normal" fill="#e4e6e4" text-anchor="middle" letter-spacing="0.3" opacity="1" stroke="#1c2b19" stroke-width="1.8" paint-order="stroke" transform="rotate(78 892.7 8.0)">Fwy</text>
<text x="796.2" y="104.5" font-size="6.9" font-family="Liberation Sans" font-style="normal" font-weight="bold" fill="#b4bab4" text-anchor="middle" letter-spacing="0.5" opacity="1" stroke="#1c2b19" stroke-width="1.6" paint-order="stroke">MONTICELLO</text>
<text x="733.1" y="114.5" font-size="6.9" font-family="Liberation Sans" font-style="normal" font-weight="bold" fill="#b4bab4" text-anchor="middle" letter-spacing="0.5" opacity="1" stroke="#1c2b19" stroke-width="1.6" paint-order="stroke">BRANDON</text>
<text x="733.1" y="124.2" font-size="6.9" font-family="Liberation Sans" font-style="normal" font-weight="bold" fill="#b4bab4" text-anchor="middle" letter-spacing="0.5" opacity="1" stroke="#1c2b19" stroke-width="1.6" paint-order="stroke">HEIGHTS</text>
<text x="790.6" y="127.2" font-size="6.9" font-family="Liberation Sans" font-style="normal" font-weight="bold" fill="#b4bab4" text-anchor="middle" letter-spacing="0.5" opacity="1" stroke="#1c2b19" stroke-width="1.6" paint-order="stroke">WESTMINSTER</text>
<text x="668.4" y="125.8" font-size="6.9" font-family="Liberation Sans" font-style="normal" font-weight="bold" fill="#b4bab4" text-anchor="middle" letter-spacing="0.5" opacity="1" stroke="#1c2b19" stroke-width="1.6" paint-order="stroke">GUILFORD</text>
<text x="668.4" y="135.2" font-size="6.9" font-family="Liberation Sans" font-style="normal" font-weight="bold" fill="#b4bab4" text-anchor="middle" letter-spacing="0.5" opacity="1" stroke="#1c2b19" stroke-width="1.6" paint-order="stroke">PLACE</text>
<text x="988.1" y="43.1" font-size="8.3" font-family="Liberation Sans" font-style="normal" font-weight="normal" fill="#c2c8c2" text-anchor="middle" letter-spacing="0.1" opacity="1" stroke="#1c2b19" stroke-width="1.6" paint-order="stroke">Union Cemetery</text>
<text x="1100.2" y="56.1" font-size="8.5" font-family="Liberation Serif" font-style="italic" font-weight="normal" fill="#e4e6e4" text-anchor="middle" letter-spacing="0.3" opacity="1" stroke="#1c2b19" stroke-width="1.8" paint-order="stroke" transform="rotate(3 1100.2 56.1)">Arcadia Ave</text>
<text x="1157.3" y="64.1" font-size="6.9" font-family="Liberation Sans" font-style="normal" font-weight="bold" fill="#b4bab4" text-anchor="middle" letter-spacing="0.43" opacity="1" stroke="#1c2b19" stroke-width="1.6" paint-order="stroke">GLEN ECHO</text>
<text x="1069.2" y="82.5" font-size="6.9" font-family="Liberation Sans" font-style="normal" font-weight="bold" fill="#b4bab4" text-anchor="middle" letter-spacing="0.43" opacity="1" stroke="#1c2b19" stroke-width="1.6" paint-order="stroke">OLD NORTH</text>
<text x="1069.2" y="92.1" font-size="6.9" font-family="Liberation Sans" font-style="normal" font-weight="bold" fill="#b4bab4" text-anchor="middle" letter-spacing="0.43" opacity="1" stroke="#1c2b19" stroke-width="1.6" paint-order="stroke">COLUMBUS</text>
<text x="1051.7" y="115.5" font-size="6.9" font-family="Liberation Sans" font-style="normal" font-weight="bold" fill="#b4bab4" text-anchor="middle" letter-spacing="0.43" opacity="1" stroke="#1c2b19" stroke-width="1.6" paint-order="stroke">TUTTLE PARK</text>
<text x="1105.2" y="134.6" font-size="6.9" font-family="Liberation Sans" font-style="normal" font-weight="bold" fill="#b4bab4" text-anchor="middle" letter-spacing="0.43" opacity="1" stroke="#1c2b19" stroke-width="1.6" paint-order="stroke">NORTHWOOD</text>
<text x="1105.2" y="144.2" font-size="6.9" font-family="Liberation Sans" font-style="normal" font-weight="bold" fill="#b4bab4" text-anchor="middle" letter-spacing="0.43" opacity="1" stroke="#1c2b19" stroke-width="1.6" paint-order="stroke">PARK</text>
<text x="1051.1" y="143.2" font-size="8" font-family="Liberation Serif" font-style="italic" font-weight="normal" fill="#e4e6e4" text-anchor="middle" letter-spacing="0.3" opacity="1" stroke="#1c2b19" stroke-width="1.8" paint-order="stroke" transform="rotate(-80 1051.1 143.2)">Neil Ave</text>
<path d="M986.5 29.6 h3 v3.6 h-3z M986.5 29.6 a1.5 1.5 0 0 1 3 0z" fill="#e8ece8"/>
<text x="167.2" y="194.1" font-size="8.5" font-family="Liberation Serif" font-style="italic" font-weight="normal" fill="#e4e6e4" text-anchor="middle" letter-spacing="0.3" opacity="1" stroke="#1c2b19" stroke-width="1.8" paint-order="stroke" transform="rotate(4 167.2 194.1)">Roberts Rd</text>
<text x="137.2" y="184.0" font-size="8" font-family="Liberation Serif" font-style="italic" font-weight="normal" fill="#e4e6e4" text-anchor="middle" letter-spacing="0.3" opacity="1" stroke="#1c2b19" stroke-width="1.8" paint-order="stroke" transform="rotate(84 137.2 184.0)">Walcutt Rd</text>
<text x="39.6" y="278.2" font-size="8" font-family="Liberation Serif" font-style="italic" font-weight="normal" fill="#e4e6e4" text-anchor="middle" letter-spacing="0.3" opacity="1" stroke="#1c2b19" stroke-width="1.8" paint-order="stroke" transform="rotate(82 39.6 278.2)">Hilliard-Rome Rd</text>
<text x="554.3" y="732.6" font-size="6.9" font-family="Liberation Sans" font-style="normal" font-weight="bold" fill="#b4bab4" text-anchor="middle" letter-spacing="0.43" opacity="1" stroke="#1c2b19" stroke-width="1.6" paint-order="stroke">WESTGATE</text>
<text x="343.1" y="715.7" font-size="7.5" font-family="Liberation Serif" font-style="italic" font-weight="normal" fill="#e4e6e4" text-anchor="middle" letter-spacing="0.3" opacity="1" stroke="#1c2b19" stroke-width="1.8" paint-order="stroke" transform="rotate(-85 343.1 715.7)">Georgesville</text>
<text x="461.4" y="715.7" font-size="7.5" font-family="Liberation Serif" font-style="italic" font-weight="normal" fill="#e4e6e4" text-anchor="middle" letter-spacing="0.3" opacity="1" stroke="#1c2b19" stroke-width="1.8" paint-order="stroke" transform="rotate(86 461.4 715.7)">S Wilson</text>
<text x="429.1" y="207.7" font-size="8.3" font-family="Liberation Sans" font-style="normal" font-weight="normal" fill="#c2c8c2" text-anchor="middle" letter-spacing="0.1" opacity="1" stroke="#1c2b19" stroke-width="1.6" paint-order="stroke">Quarry Trails</text>
<text x="429.1" y="217.3" font-size="8.3" font-family="Liberation Sans" font-style="normal" font-weight="normal" fill="#c2c8c2" text-anchor="middle" letter-spacing="0.1" opacity="1" stroke="#1c2b19" stroke-width="1.6" paint-order="stroke">Metro Park</text>
<text x="608.4" y="200.7" font-size="8.3" font-family="Liberation Sans" font-style="normal" font-weight="normal" fill="#c2c8c2" text-anchor="middle" letter-spacing="0.1" opacity="1" stroke="#1c2b19" stroke-width="1.6" paint-order="stroke">Scioto Country Club</text>
<text x="550.3" y="235.7" font-size="6.9" font-family="Liberation Sans" font-style="normal" font-weight="bold" fill="#b4bab4" text-anchor="middle" letter-spacing="0.43" opacity="1" stroke="#1c2b19" stroke-width="1.6" paint-order="stroke">QUARRY</text>
<text x="365.7" y="190.0" font-size="8.5" font-family="Liberation Serif" font-style="italic" font-weight="normal" fill="#e4e6e4" text-anchor="middle" letter-spacing="0.3" opacity="1" stroke="#1c2b19" stroke-width="1.8" paint-order="stroke" transform="rotate(-40 365.7 190.0)">Roberts Rd</text>
<text x="491.2" y="234.1" font-size="8.5" font-family="Liberation Serif" font-style="italic" font-weight="normal" fill="#e4e6e4" text-anchor="middle" letter-spacing="0.3" opacity="1" stroke="#1c2b19" stroke-width="1.8" paint-order="stroke" transform="rotate(35 491.2 234.1)">Dublin</text>
<text x="553.3" y="171.6" font-size="8.5" font-family="Liberation Serif" font-style="italic" font-weight="normal" fill="#e4e6e4" text-anchor="middle" letter-spacing="0.3" opacity="1" stroke="#1c2b19" stroke-width="1.8" paint-order="stroke" transform="rotate(50 553.3 171.6)">Riverside Dr</text>
<text x="622.4" y="261.1" font-size="8.5" font-family="Liberation Serif" font-style="italic" font-weight="normal" fill="#e4e6e4" text-anchor="middle" letter-spacing="0.3" opacity="1" stroke="#1c2b19" stroke-width="1.8" paint-order="stroke" transform="rotate(50 622.4 261.1)">Riverside Dr</text>
<text x="539.9" y="187.6" font-size="6.5" font-family="Liberation Serif" font-style="italic" font-weight="normal" fill="#a4d2f2" text-anchor="middle" letter-spacing="0.3" opacity="1" stroke="#1c2b19" stroke-width="0" paint-order="stroke" transform="rotate(62 539.9 187.6)">Scioto River</text>
<text x="634.0" y="291.2" font-size="6.5" font-family="Liberation Serif" font-style="italic" font-weight="normal" fill="#a4d2f2" text-anchor="middle" letter-spacing="0.3" opacity="1" stroke="#1c2b19" stroke-width="0" paint-order="stroke" transform="rotate(40 634.0 291.2)">Scioto</text>
<circle cx="429.1" cy="194.1" r="1.9" fill="#e8ece8"/><rect x="428.6" y="195.1" width="1" height="3" fill="#e8ece8"/>
<text x="772.6" y="187.6" font-size="6.9" font-family="Liberation Sans" font-style="normal" font-weight="bold" fill="#b4bab4" text-anchor="middle" letter-spacing="0.43" opacity="1" stroke="#1c2b19" stroke-width="1.6" paint-order="stroke">THE</text>
<text x="772.6" y="197.3" font-size="6.9" font-family="Liberation Sans" font-style="normal" font-weight="bold" fill="#b4bab4" text-anchor="middle" letter-spacing="0.43" opacity="1" stroke="#1c2b19" stroke-width="1.6" paint-order="stroke">UNIVERSITY</text>
<text x="901.3" y="193.6" font-size="6.9" font-family="Liberation Sans" font-style="normal" font-weight="bold" fill="#b4bab4" text-anchor="middle" letter-spacing="0.43" opacity="1" stroke="#1c2b19" stroke-width="1.6" paint-order="stroke">CARMENTON</text>
<text x="697.1" y="278.6" font-size="10.5" font-family="Liberation Sans" font-style="normal" font-weight="normal" fill="#c2c8c2" text-anchor="middle" letter-spacing="0.2" opacity="1" stroke="#1c2b19" stroke-width="1.6" paint-order="stroke">Upper Arlington</text>
<text x="689.7" y="221.1" font-size="8.5" font-family="Liberation Serif" font-style="italic" font-weight="normal" fill="#e4e6e4" text-anchor="middle" letter-spacing="0.3" opacity="1" stroke="#1c2b19" stroke-width="1.8" paint-order="stroke" transform="rotate(57 689.7 221.1)">Arlington Ave</text>
<text x="711.7" y="167.6" font-size="8" font-family="Liberation Serif" font-style="italic" font-weight="normal" fill="#e4e6e4" text-anchor="middle" letter-spacing="0.3" opacity="1" stroke="#1c2b19" stroke-width="1.8" paint-order="stroke" transform="rotate(-85 711.7 167.6)">Andover</text>
<text x="768.2" y="156.8" font-size="8.5" font-family="Liberation Serif" font-style="italic" font-weight="normal" fill="#e4e6e4" text-anchor="middle" letter-spacing="0.3" opacity="1" stroke="#1c2b19" stroke-width="1.8" paint-order="stroke" transform="rotate(3 768.2 156.8)">W Lane Ave</text>
<text x="901.3" y="160.4" font-size="8" font-family="Liberation Serif" font-style="italic" font-weight="normal" fill="#e4e6e4" text-anchor="middle" letter-spacing="0.3" opacity="1" stroke="#1c2b19" stroke-width="1.8" paint-order="stroke" transform="rotate(75 901.3 160.4)">Rd</text>
<text x="1115.8" y="168.4" font-size="8.5" font-family="Liberation Serif" font-style="italic" font-weight="normal" fill="#e4e6e4" text-anchor="middle" letter-spacing="0.3" opacity="1" stroke="#1c2b19" stroke-width="1.8" paint-order="stroke" transform="rotate(4 1115.8 168.4)">E Lane Ave</text>
<text x="1143.3" y="225.1" font-size="8" font-family="Liberation Serif" font-style="italic" font-weight="normal" fill="#e4e6e4" text-anchor="middle" letter-spacing="0.3" opacity="1" stroke="#1c2b19" stroke-width="1.8" paint-order="stroke" transform="rotate(-84 1143.3 225.1)">Summit St</text>
<text x="1160.7" y="235.1" font-size="8" font-family="Liberation Serif" font-style="italic" font-weight="normal" fill="#e4e6e4" text-anchor="middle" letter-spacing="0.3" opacity="1" stroke="#1c2b19" stroke-width="1.8" paint-order="stroke" transform="rotate(-84 1160.7 235.1)">N 4th St</text>
<text x="1215.3" y="214.5" font-size="8.5" font-family="Liberation Serif" font-style="italic" font-weight="normal" fill="#e4e6e4" text-anchor="middle" letter-spacing="0.3" opacity="1" stroke="#1c2b19" stroke-width="1.8" paint-order="stroke" transform="rotate(3 1215.3 214.5)">17th Ave</text>
<text x="1093.6" y="220.7" font-size="6.9" font-family="Liberation Sans" font-style="normal" font-weight="bold" fill="#b4bab4" text-anchor="middle" letter-spacing="1.43" opacity="1" stroke="#1c2b19" stroke-width="1.6" paint-order="stroke">UNIVERSITY</text>
<text x="1093.6" y="230.7" font-size="6.9" font-family="Liberation Sans" font-style="normal" font-weight="bold" fill="#b4bab4" text-anchor="middle" letter-spacing="1.43" opacity="1" stroke="#1c2b19" stroke-width="1.6" paint-order="stroke">DISTRICT</text>
<text x="1101.2" y="275.2" font-size="6.9" font-family="Liberation Sans" font-style="normal" font-weight="bold" fill="#b4bab4" text-anchor="middle" letter-spacing="0.43" opacity="1" stroke="#1c2b19" stroke-width="1.6" paint-order="stroke">GATEWAY</text>
<text x="1148.3" y="301.2" font-size="6.9" font-family="Liberation Sans" font-style="normal" font-weight="bold" fill="#b4bab4" text-anchor="middle" letter-spacing="0.43" opacity="1" stroke="#1c2b19" stroke-width="1.6" paint-order="stroke">WEINLAND</text>
<text x="1148.3" y="310.2" font-size="6.9" font-family="Liberation Sans" font-style="normal" font-weight="bold" fill="#b4bab4" text-anchor="middle" letter-spacing="0.43" opacity="1" stroke="#1c2b19" stroke-width="1.6" paint-order="stroke">PARK</text>
<text x="1028.1" y="306.2" font-size="6.9" font-family="Liberation Sans" font-style="normal" font-weight="bold" fill="#b4bab4" text-anchor="middle" letter-spacing="0.43" opacity="1" stroke="#1c2b19" stroke-width="1.6" paint-order="stroke">NECKO</text>
<text x="994.5" y="201.1" font-size="8" font-family="Liberation Serif" font-style="italic" font-weight="normal" fill="#e4e6e4" text-anchor="middle" letter-spacing="0.3" opacity="1" stroke="#1c2b19" stroke-width="1.8" paint-order="stroke" transform="rotate(-80 994.5 201.1)">Dr</text>
<text x="703.2" y="352.5" font-size="10.5" font-family="Liberation Sans" font-style="normal" font-weight="normal" fill="#c2c8c2" text-anchor="middle" letter-spacing="0.2" opacity="1" stroke="#1c2b19" stroke-width="1.6" paint-order="stroke">Marble Cliff</text>
<text x="854.8" y="411.7" font-size="10.5" font-family="Liberation Sans" font-style="normal" font-weight="normal" fill="#c2c8c2" text-anchor="middle" letter-spacing="0.2" opacity="1" stroke="#1c2b19" stroke-width="1.6" paint-order="stroke">Grandview</text>
<text x="854.8" y="425.1" font-size="10.5" font-family="Liberation Sans" font-style="normal" font-weight="normal" fill="#c2c8c2" text-anchor="middle" letter-spacing="0.2" opacity="1" stroke="#1c2b19" stroke-width="1.6" paint-order="stroke">Heights</text>
<text x="687.2" y="323.6" font-size="8.5" font-family="Liberation Serif" font-style="italic" font-weight="normal" fill="#e4e6e4" text-anchor="middle" letter-spacing="0.3" opacity="1" stroke="#1c2b19" stroke-width="1.8" paint-order="stroke" transform="rotate(3 687.2 323.6)">W 5th Ave</text>
<text x="778.7" y="363.1" font-size="8.5" font-family="Liberation Serif" font-style="italic" font-weight="normal" fill="#e4e6e4" text-anchor="middle" letter-spacing="0.3" opacity="1" stroke="#1c2b19" stroke-width="1.8" paint-order="stroke" transform="rotate(3 778.7 363.1)">W 3rd Ave</text>
<text x="869.4" y="367.7" font-size="8.5" font-family="Liberation Serif" font-style="italic" font-weight="normal" fill="#e4e6e4" text-anchor="middle" letter-spacing="0.3" opacity="1" stroke="#1c2b19" stroke-width="1.8" paint-order="stroke" transform="rotate(3 869.4 367.7)">W 3rd Ave</text>
<text x="825.9" y="366.1" font-size="8" font-family="Liberation Serif" font-style="italic" font-weight="normal" fill="#e4e6e4" text-anchor="middle" letter-spacing="0.3" opacity="1" stroke="#1c2b19" stroke-width="1.8" paint-order="stroke" transform="rotate(-85 825.9 366.1)">Grandview Ave</text>
<text x="869.4" y="457.8" font-size="8.5" font-family="Liberation Serif" font-style="italic" font-weight="normal" fill="#e4e6e4" text-anchor="middle" letter-spacing="0.3" opacity="1" stroke="#1c2b19" stroke-width="1.8" paint-order="stroke" transform="rotate(25 869.4 457.8)">Goodale</text>
<text x="580.0" y="334.0" font-size="8.5" font-family="Liberation Serif" font-style="italic" font-weight="normal" fill="#e4e6e4" text-anchor="middle" letter-spacing="0.3" opacity="1" stroke="#1c2b19" stroke-width="1.8" paint-order="stroke" transform="rotate(62 580.0 334.0)">ley Ave</text>
<text x="1083.3" y="317.0" font-size="8.5" font-family="Liberation Serif" font-style="italic" font-weight="normal" fill="#e4e6e4" text-anchor="middle" letter-spacing="0.3" opacity="1" stroke="#1c2b19" stroke-width="1.8" paint-order="stroke" transform="rotate(3 1083.3 317.0)">King Ave</text>
<text x="1085.9" y="345.6" font-size="8.5" font-family="Liberation Serif" font-style="italic" font-weight="normal" fill="#e4e6e4" text-anchor="middle" letter-spacing="0.3" opacity="1" stroke="#1c2b19" stroke-width="1.8" paint-order="stroke" transform="rotate(3 1085.9 345.6)">W 5th Ave</text>
<text x="1029.2" y="374.1" font-size="6.9" font-family="Liberation Sans" font-style="normal" font-weight="bold" fill="#b4bab4" text-anchor="middle" letter-spacing="0.43" opacity="1" stroke="#1c2b19" stroke-width="1.6" paint-order="stroke">HARRISON</text>
<text x="1027.6" y="383.1" font-size="6.9" font-family="Liberation Sans" font-style="normal" font-weight="bold" fill="#b4bab4" text-anchor="middle" letter-spacing="0.43" opacity="1" stroke="#1c2b19" stroke-width="1.6" paint-order="stroke">WEST</text>
<text x="1083.9" y="384.1" font-size="8.3" font-family="Liberation Sans" font-style="normal" font-weight="normal" fill="#c2c8c2" text-anchor="middle" letter-spacing="0.1" opacity="1" stroke="#1c2b19" stroke-width="1.6" paint-order="stroke">Select Specialty</text>
<text x="1083.9" y="393.7" font-size="8.3" font-family="Liberation Sans" font-style="normal" font-weight="normal" fill="#c2c8c2" text-anchor="middle" letter-spacing="0.1" opacity="1" stroke="#1c2b19" stroke-width="1.6" paint-order="stroke">Hospital</text>
<path d="M1081.2 371.7 h5 M1083.7 369.2 v5" stroke="#e8ece8" stroke-width="0.9"/>
<text x="1149.3" y="391.1" font-size="8.5" font-family="Liberation Serif" font-style="italic" font-weight="normal" fill="#e4e6e4" text-anchor="middle" letter-spacing="0.3" opacity="1" stroke="#1c2b19" stroke-width="1.8" paint-order="stroke" transform="rotate(3 1149.3 391.1)">2nd Ave</text>
<text x="1142.3" y="411.1" font-size="10.5" font-family="Liberation Sans" font-style="normal" font-weight="normal" fill="#c2c8c2" text-anchor="middle" letter-spacing="0.2" opacity="1" stroke="#1c2b19" stroke-width="1.6" paint-order="stroke">Italian Village</text>
<text x="1158.7" y="360.1" font-size="8" font-family="Liberation Serif" font-style="italic" font-weight="normal" fill="#e4e6e4" text-anchor="middle" letter-spacing="0.3" opacity="1" stroke="#1c2b19" stroke-width="1.8" paint-order="stroke" transform="rotate(80 1158.7 360.1)">9th St</text>
<text x="940.1" y="409.1" font-size="8" font-family="Liberation Serif" font-style="italic" font-weight="normal" fill="#e4e6e4" text-anchor="middle" letter-spacing="0.3" opacity="1" stroke="#1c2b19" stroke-width="1.8" paint-order="stroke" transform="rotate(75 940.1 409.1)">Bobcat Ave</text>
<text x="1056.6" y="454.8" font-size="6.9" font-family="Liberation Sans" font-style="normal" font-weight="bold" fill="#b4bab4" text-anchor="middle" letter-spacing="0.43" opacity="1" stroke="#1c2b19" stroke-width="1.6" paint-order="stroke">THURBER</text>
<text x="1056.6" y="464.2" font-size="6.9" font-family="Liberation Sans" font-style="normal" font-weight="bold" fill="#b4bab4" text-anchor="middle" letter-spacing="0.43" opacity="1" stroke="#1c2b19" stroke-width="1.6" paint-order="stroke">VILLAGE</text>
<text x="1148.3" y="310.8" font-size="6.9" font-family="Liberation Sans" font-style="normal" font-weight="bold" fill="#b4bab4" text-anchor="middle" letter-spacing="0.43" opacity="1" stroke="#1c2b19" stroke-width="1.6" paint-order="stroke">PARK</text>
<text x="885.0" y="369.1" font-size="8.5" font-family="Liberation Serif" font-style="italic" font-weight="normal" fill="#e4e6e4" text-anchor="middle" letter-spacing="0.3" opacity="1" stroke="#1c2b19" stroke-width="1.8" paint-order="stroke" transform="rotate(3 885.0 369.1)">Ave</text>
<text x="1215.0" y="352.4" font-size="8.5" font-family="Liberation Serif" font-style="italic" font-weight="normal" fill="#e4e6e4" text-anchor="middle" letter-spacing="0.3" opacity="1" stroke="#1c2b19" stroke-width="1.8" paint-order="stroke" transform="rotate(3 1215.0 352.4)">5th Ave</text>
<text x="1231.0" y="397.4" font-size="8.5" font-family="Liberation Serif" font-style="italic" font-weight="normal" fill="#e4e6e4" text-anchor="middle" letter-spacing="0.3" opacity="1" stroke="#1c2b19" stroke-width="1.8" paint-order="stroke" transform="rotate(3 1231.0 397.4)">2nd Ave</text>
<text x="1225.0" y="458.4" font-size="6.9" font-family="Liberation Sans" font-style="normal" font-weight="bold" fill="#b4bab4" text-anchor="middle" letter-spacing="0.43" opacity="1" stroke="#1c2b19" stroke-width="1.6" paint-order="stroke">FORT HAYES</text>
<text x="616.5" y="474.4" font-size="8.5" font-family="Liberation Serif" font-style="italic" font-weight="normal" fill="#e4e6e4" text-anchor="middle" letter-spacing="0.3" opacity="1" stroke="#1c2b19" stroke-width="1.8" paint-order="stroke" transform="rotate(-17 616.5 474.4)">Fisher Rd</text>
<text x="625.1" y="505.1" font-size="8.5" font-family="Liberation Serif" font-style="italic" font-weight="normal" fill="#e4e6e4" text-anchor="middle" letter-spacing="0.3" opacity="1" stroke="#1c2b19" stroke-width="1.8" paint-order="stroke" transform="rotate(25 625.1 505.1)">West Fwy</text>
<text x="686.6" y="496.4" font-size="8.5" font-family="Liberation Serif" font-style="italic" font-weight="normal" fill="#e4e6e4" text-anchor="middle" letter-spacing="0.3" opacity="1" stroke="#1c2b19" stroke-width="1.8" paint-order="stroke" transform="rotate(55 686.6 496.4)">McKinley Ave</text>
<text x="714.2" y="509.7" font-size="6.5" font-family="Liberation Serif" font-style="italic" font-weight="normal" fill="#a4d2f2" text-anchor="middle" letter-spacing="0.3" opacity="1" stroke="#1c2b19" stroke-width="0" paint-order="stroke" transform="rotate(50 714.2 509.7)">Scioto River</text>
<text x="579.0" y="525.1" font-size="8.5" font-family="Liberation Serif" font-style="italic" font-weight="normal" fill="#e4e6e4" text-anchor="middle" letter-spacing="0.3" opacity="1" stroke="#1c2b19" stroke-width="1.8" paint-order="stroke" transform="rotate(72 579.0 525.1)">Hague Ave</text>
<text x="624.1" y="553.7" font-size="10.5" font-family="Liberation Sans" font-style="normal" font-weight="normal" fill="#c2c8c2" text-anchor="middle" letter-spacing="0.2" opacity="1" stroke="#1c2b19" stroke-width="1.6" paint-order="stroke">Valley View</text>
<text x="802.7" y="607.2" font-size="8.5" font-family="Liberation Serif" font-style="italic" font-weight="normal" fill="#e4e6e4" text-anchor="middle" letter-spacing="0.3" opacity="1" stroke="#1c2b19" stroke-width="1.8" paint-order="stroke" transform="rotate(48 802.7 607.2)">West</text>
<text x="971.1" y="516.5" font-size="8.5" font-family="Liberation Serif" font-style="italic" font-weight="normal" fill="#e4e6e4" text-anchor="middle" letter-spacing="0.3" opacity="1" stroke="#1c2b19" stroke-width="1.8" paint-order="stroke" transform="rotate(-38 971.1 516.5)">Twin Rivers Dr</text>
<text x="929.1" y="574.1" font-size="8.5" font-family="Liberation Serif" font-style="italic" font-weight="normal" fill="#e4e6e4" text-anchor="middle" letter-spacing="0.3" opacity="1" stroke="#1c2b19" stroke-width="1.8" paint-order="stroke" transform="rotate(4 929.1 574.1)">McKinley Ave</text>
<text x="1138.3" y="545.1" font-size="8.5" font-family="Liberation Serif" font-style="italic" font-weight="normal" fill="#e4e6e4" text-anchor="middle" letter-spacing="0.3" opacity="1" stroke="#1c2b19" stroke-width="1.8" paint-order="stroke" transform="rotate(-8 1138.3 545.1)">Spring St</text>
<text x="1188.0" y="551.1" font-size="8.5" font-family="Liberation Serif" font-style="italic" font-weight="normal" fill="#e4e6e4" text-anchor="middle" letter-spacing="0.3" opacity="1" stroke="#1c2b19" stroke-width="1.8" paint-order="stroke" transform="rotate(-8 1188.0 551.1)">E Long</text>
<text x="1187.4" y="598.2" font-size="8.5" font-family="Liberation Serif" font-style="italic" font-weight="normal" fill="#e4e6e4" text-anchor="middle" letter-spacing="0.3" opacity="1" stroke="#1c2b19" stroke-width="1.8" paint-order="stroke" transform="rotate(-5 1187.4 598.2)">State S</text>
<text x="1013.2" y="600.2" font-size="8.5" font-family="Liberation Serif" font-style="italic" font-weight="normal" fill="#e4e6e4" text-anchor="middle" letter-spacing="0.3" opacity="1" stroke="#1c2b19" stroke-width="1.8" paint-order="stroke" transform="rotate(82 1013.2 600.2)">W Innerb</text>
<text x="1136.9" y="606.2" font-size="8.5" font-family="Liberation Serif" font-style="italic" font-weight="normal" fill="#e4e6e4" text-anchor="middle" letter-spacing="0.3" opacity="1" stroke="#1c2b19" stroke-width="1.8" paint-order="stroke" transform="rotate(85 1136.9 606.2)">Front</text>
<text x="1172.0" y="511.1" font-size="8" font-family="Liberation Serif" font-style="italic" font-weight="normal" fill="#e4e6e4" text-anchor="middle" letter-spacing="0.3" opacity="1" stroke="#1c2b19" stroke-width="1.8" paint-order="stroke" transform="rotate(-85 1172.0 511.1)">N 9th St</text>
<text x="1082.3" y="489.0" font-size="6.9" font-family="Liberation Sans" font-style="normal" font-weight="bold" fill="#b4bab4" text-anchor="middle" letter-spacing="0.43" opacity="1" stroke="#1c2b19" stroke-width="1.6" paint-order="stroke">FLYTOWN</text>
<text x="1111.9" y="520.1" font-size="6.9" font-family="Liberation Sans" font-style="normal" font-weight="bold" fill="#b4bab4" text-anchor="middle" letter-spacing="0.43" opacity="1" stroke="#1c2b19" stroke-width="1.6" paint-order="stroke">ARENA</text>
<text x="1111.9" y="529.3" font-size="6.9" font-family="Liberation Sans" font-style="normal" font-weight="bold" fill="#b4bab4" text-anchor="middle" letter-spacing="0.43" opacity="1" stroke="#1c2b19" stroke-width="1.6" paint-order="stroke">DISTRICT</text>
<text x="1117.3" y="598.2" font-size="6.5" font-family="Liberation Serif" font-style="italic" font-weight="normal" fill="#a4d2f2" text-anchor="middle" letter-spacing="0.3" opacity="1" stroke="#1c2b19" stroke-width="0" paint-order="stroke" transform="rotate(70 1117.3 598.2)">Scioto River</text>
<text x="892.0" y="466.0" font-size="8.5" font-family="Liberation Serif" font-style="italic" font-weight="normal" fill="#e4e6e4" text-anchor="middle" letter-spacing="0.3" opacity="1" stroke="#1c2b19" stroke-width="1.8" paint-order="stroke" transform="rotate(3 892.0 466.0)">e Blvd</text>
<text x="807.3" y="613.6" font-size="8.5" font-family="Liberation Serif" font-style="italic" font-weight="normal" fill="#e4e6e4" text-anchor="middle" letter-spacing="0.3" opacity="1" stroke="#1c2b19" stroke-width="1.8" paint-order="stroke" transform="rotate(52 807.3 613.6)">West Fwy</text>
<text x="818.3" y="695.7" font-size="8.3" font-family="Liberation Sans" font-style="normal" font-weight="normal" fill="#c2c8c2" text-anchor="middle" letter-spacing="0.1" opacity="1" stroke="#1c2b19" stroke-width="1.6" paint-order="stroke">Columbus</text>
<text x="818.3" y="705.8" font-size="8.3" font-family="Liberation Sans" font-style="normal" font-weight="normal" fill="#c2c8c2" text-anchor="middle" letter-spacing="0.1" opacity="1" stroke="#1c2b19" stroke-width="1.6" paint-order="stroke">Developmental</text>
<text x="818.3" y="715.8" font-size="8.3" font-family="Liberation Sans" font-style="normal" font-weight="normal" fill="#c2c8c2" text-anchor="middle" letter-spacing="0.1" opacity="1" stroke="#1c2b19" stroke-width="1.6" paint-order="stroke">Center</text>
<text x="617.1" y="734.2" font-size="6.9" font-family="Liberation Sans" font-style="normal" font-weight="bold" fill="#b4bab4" text-anchor="middle" letter-spacing="0.43" opacity="0.6" stroke="#1c2b19" stroke-width="1.6" paint-order="stroke">HILLTOP</text>
<text x="568.0" y="733.2" font-size="6.9" font-family="Liberation Sans" font-style="normal" font-weight="bold" fill="#b4bab4" text-anchor="middle" letter-spacing="0.43" opacity="0.6" stroke="#1c2b19" stroke-width="1.6" paint-order="stroke">ATE</text>
<text x="962.1" y="633.7" font-size="6.9" font-family="Liberation Sans" font-style="normal" font-weight="bold" fill="#b4bab4" text-anchor="middle" letter-spacing="0.62" opacity="1" stroke="#1c2b19" stroke-width="1.6" paint-order="stroke">FRANKLINTON</text>
<text x="1129.9" y="640.5" font-size="6.9" font-family="Liberation Sans" font-style="normal" font-weight="bold" fill="#b4bab4" text-anchor="middle" letter-spacing="0.43" opacity="1" stroke="#1c2b19" stroke-width="1.6" paint-order="stroke">RIVER SOUTH</text>
<text x="981.7" y="655.1" font-size="8.5" font-family="Liberation Serif" font-style="italic" font-weight="normal" fill="#e4e6e4" text-anchor="middle" letter-spacing="0.3" opacity="1" stroke="#1c2b19" stroke-width="1.8" paint-order="stroke" transform="rotate(-8 981.7 655.1)">W Rich St</text>
<text x="936.1" y="684.5" font-size="8.5" font-family="Liberation Serif" font-style="italic" font-weight="normal" fill="#e4e6e4" text-anchor="middle" letter-spacing="0.3" opacity="1" stroke="#1c2b19" stroke-width="1.8" paint-order="stroke" transform="rotate(-12 936.1 684.5)">Sullivant Ave</text>
<text x="1014.2" y="605.0" font-size="8.5" font-family="Liberation Serif" font-style="italic" font-weight="normal" fill="#e4e6e4" text-anchor="middle" letter-spacing="0.3" opacity="1" stroke="#1c2b19" stroke-width="1.8" paint-order="stroke" transform="rotate(82 1014.2 605.0)">W Innerbelt</text>
<text x="1138.3" y="614.0" font-size="8.5" font-family="Liberation Serif" font-style="italic" font-weight="normal" fill="#e4e6e4" text-anchor="middle" letter-spacing="0.3" opacity="1" stroke="#1c2b19" stroke-width="1.8" paint-order="stroke" transform="rotate(80 1138.3 614.0)">Front St</text>
<text x="1118.3" y="601.0" font-size="6.5" font-family="Liberation Serif" font-style="italic" font-weight="normal" fill="#a4d2f2" text-anchor="middle" letter-spacing="0.3" opacity="1" stroke="#1c2b19" stroke-width="0" paint-order="stroke" transform="rotate(72 1118.3 601.0)">Scioto River</text>
<text x="1187.4" y="598.4" font-size="8.5" font-family="Liberation Serif" font-style="italic" font-weight="normal" fill="#e4e6e4" text-anchor="middle" letter-spacing="0.3" opacity="1" stroke="#1c2b19" stroke-width="1.8" paint-order="stroke" transform="rotate(-5 1187.4 598.4)">State S</text>
<text x="1152.3" y="714.6" font-size="6.9" font-family="Liberation Sans" font-style="normal" font-weight="bold" fill="#b4bab4" text-anchor="middle" letter-spacing="0.43" opacity="0.7" stroke="#1c2b19" stroke-width="1.6" paint-order="stroke">BREWERY</text>
<text x="1192.0" y="550.4" font-size="8.5" font-family="Liberation Serif" font-style="italic" font-weight="normal" fill="#e4e6e4" text-anchor="middle" letter-spacing="0.3" opacity="1" stroke="#1c2b19" stroke-width="1.8" paint-order="stroke" transform="rotate(-8 1192.0 550.4)">E Long St</text>
<text x="1244.0" y="569.0" font-size="8.5" font-family="Liberation Serif" font-style="italic" font-weight="normal" fill="#e4e6e4" text-anchor="middle" letter-spacing="0.3" opacity="1" stroke="#1c2b19" stroke-width="1.8" paint-order="stroke" transform="rotate(-8 1244.0 569.0)">Broad St</text>
<text x="1189.6" y="598.0" font-size="8.5" font-family="Liberation Serif" font-style="italic" font-weight="normal" fill="#e4e6e4" text-anchor="middle" letter-spacing="0.3" opacity="1" stroke="#1c2b19" stroke-width="1.8" paint-order="stroke" transform="rotate(-7 1189.6 598.0)">State St</text>
<text x="1172.4" y="511.0" font-size="8" font-family="Liberation Serif" font-style="italic" font-weight="normal" fill="#e4e6e4" text-anchor="middle" letter-spacing="0.3" opacity="1" stroke="#1c2b19" stroke-width="1.8" paint-order="stroke" transform="rotate(-85 1172.4 511.0)">N 9th St</text>
<text x="1242.0" y="596.0" font-size="6.9" font-family="Liberation Sans" font-style="normal" font-weight="bold" fill="#b4bab4" text-anchor="middle" letter-spacing="0.43" opacity="1" stroke="#1c2b19" stroke-width="1.6" paint-order="stroke">EAST TOWN</text>
<text x="1240.0" y="605.2" font-size="6.9" font-family="Liberation Sans" font-style="normal" font-weight="bold" fill="#b4bab4" text-anchor="middle" letter-spacing="0.43" opacity="1" stroke="#1c2b19" stroke-width="1.6" paint-order="stroke">STREET HIST</text>
<text x="1248.0" y="614.0" font-size="6.9" font-family="Liberation Sans" font-style="normal" font-weight="bold" fill="#b4bab4" text-anchor="middle" letter-spacing="0.43" opacity="1" stroke="#1c2b19" stroke-width="1.6" paint-order="stroke">DISTRICT</text>
<text x="1206.0" y="633.0" font-size="8.5" font-family="Liberation Serif" font-style="italic" font-weight="normal" fill="#e4e6e4" text-anchor="middle" letter-spacing="0.3" opacity="1" stroke="#1c2b19" stroke-width="1.8" paint-order="stroke" transform="rotate(-10 1206.0 633.0)">Main St</text>
<text x="1216.0" y="645.6" font-size="8.5" font-family="Liberation Serif" font-style="italic" font-weight="normal" fill="#e4e6e4" text-anchor="middle" letter-spacing="0.3" opacity="1" stroke="#1c2b19" stroke-width="1.8" paint-order="stroke" transform="rotate(-12 1216.0 645.6)">E Mound St</text>
<text x="1245.0" y="713.6" font-size="6.9" font-family="Liberation Sans" font-style="normal" font-weight="bold" fill="#b4bab4" text-anchor="middle" letter-spacing="0.43" opacity="0.7" stroke="#1c2b19" stroke-width="1.6" paint-order="stroke">SCHUMA</text>
<text x="1204.0" y="731.6" font-size="6.9" font-family="Liberation Sans" font-style="normal" font-weight="bold" fill="#b4bab4" text-anchor="middle" letter-spacing="0.43" opacity="0.6" stroke="#1c2b19" stroke-width="1.6" paint-order="stroke">GERMAN</text>
</g>
<g id="L-marker">
<path d="M173.8 77.3 L178.6 77.3" stroke="#f0421a" stroke-width="4.4" fill="none"/>
<path d="M363.1 72.1 L368.9 80.5" stroke="#f5f032" stroke-width="4" fill="none"/>
<path d="M627.4 87.1 L640.0 87.1" stroke="#f5f032" stroke-width="4.2" fill="none"/>
<path d="M597.3 143.4 L598.7 147.4" stroke="#f0421a" stroke-width="2.6" fill="none"/>
<path d="M657.0 31.4 L671.0 31.4" stroke="#f5f032" stroke-width="4.4" fill="none"/>
<path d="M743.1 34.6 L749.7 34.2" stroke="#f5f032" stroke-width="4.6" fill="none"/>
<path d="M684.1 56.1 L696.7 56.5" stroke="#f5f032" stroke-width="4.4" fill="none"/>
<path d="M713.1 126.6 L713.1 140.8" stroke="#f5f032" stroke-width="4.6" fill="none"/>
<path d="M745.1 113.1 L744.5 140.2" stroke="#f0421a" stroke-width="4.6" fill="none"/>
<path d="M640.0 86.1 L641.0 89.3" stroke="#f5f032" stroke-width="3" fill="none"/>
<path d="M985.1 69.7 L990.1 68.5 L993.7 67.7" stroke="#f0421a" stroke-width="5" fill="none" stroke-linejoin="round"/>
<rect x="1045.5" y="57.7" width="4.6" height="5.6" fill="#f5f032"/>
<path d="M1127.2 85.1 L1126.6 99.1" stroke="#f0421a" stroke-width="4.6" fill="none"/>
<rect x="1046.1" y="142.6" width="5.0" height="4.8" fill="#f5f032"/>
<path d="M1074.2 145.8 L1082.2 147.4" stroke="#f5f032" stroke-width="4.6" fill="none"/>
<rect x="1083.0" y="151.6" width="2.0" height="2.4" fill="#f0421a"/>
<rect x="70.1" y="185.0" width="4.6" height="4.4" fill="#f5f032"/>
<rect x="20.0" y="216.1" width="4.8" height="7.6" fill="#f0421a"/>
<rect x="10.5" y="319.6" width="5.5" height="5.0" fill="#f5f032"/>
<path d="M12.4 413.7 L17.1 417.5 L19.3 423.0" stroke="#f0421a" stroke-width="4.2" fill="none" stroke-linejoin="round"/>
<path d="M30.3 443.4 L35.2 448.4 L39.4 452.8" stroke="#f0421a" stroke-width="4.2" fill="none" stroke-linejoin="round"/>
<rect x="185.6" y="706.2" width="4.7" height="13.9" fill="#f0421a"/>
<rect x="556.3" y="710.6" width="4.1" height="3.4" fill="#f0421a"/>
<ellipse cx="471.0" cy="203.9" rx="1.7" ry="6.6" fill="#f0421a" transform="rotate(-20 471.0 203.9)"/>
<rect x="595.3" y="229.7" width="3.0" height="4.0" fill="#f0421a"/>
<rect x="599.3" y="229.3" width="3.0" height="4.0" fill="#f0421a"/>
<rect x="320.0" y="196.1" width="4.4" height="6.4" fill="#f5f032"/>
<path d="M787.2 182.6 L800.8 183.6" stroke="#f5f032" stroke-width="4.6" fill="none"/>
<rect x="741.1" y="196.1" width="4.0" height="4.4" fill="#f0421a"/>
<rect x="739.7" y="232.7" width="4.4" height="4.4" fill="#f5f032"/>
<path d="M695.1 266.5 L705.1 259.1" stroke="#f5f032" stroke-width="5" fill="none"/>
<path d="M888.7 196.1 L894.3 193.0 L900.3 191.4" stroke="#f5f032" stroke-width="4.4" fill="none" stroke-linejoin="round"/>
<rect x="640.0" y="303.2" width="4.0" height="4.8" fill="#f5f032"/>
<path d="M1021.7 191.4 L1035.1 190.2" stroke="#f5f032" stroke-width="4.6" fill="none"/>
<rect x="1067.8" y="190.0" width="5.4" height="4.4" fill="#f5f032"/>
<rect x="1119.8" y="209.7" width="6.4" height="4.4" fill="#f5f032"/>
<rect x="1076.6" y="229.1" width="5.2" height="5.4" fill="#f5f032"/>
<rect x="1121.8" y="242.1" width="2.0" height="5.0" fill="#f5f032"/>
<path d="M1183.3 268.5 L1183.3 277.8" stroke="#f5f032" stroke-width="4.6" fill="none"/>
<rect x="1024.5" y="240.1" width="2.6" height="4.4" fill="#f0421a"/>
<path d="M1022.1 295.2 L1023.7 291.2 L1025.1 286.2" stroke="#f0421a" stroke-width="4.5" fill="none" stroke-linejoin="round"/>
<rect x="1083.2" y="154.0" width="2.0" height="1.6" fill="#f0421a"/>
<path d="M774.7 328.0 L773.9 362.1" stroke="#f0421a" stroke-width="4.6" fill="none"/>
<path d="M874.8 341.0 L874.4 354.1" stroke="#f5f032" stroke-width="4.6" fill="none"/>
<rect x="640.1" y="308.0" width="5.0" height="1.6" fill="#f5f032"/>
<path d="M1040.2 356.1 L1039.8 370.1" stroke="#f5f032" stroke-width="4.6" fill="none"/>
<path d="M1039.6 370.1 L1039.2 383.7" stroke="#f0421a" stroke-width="4.6" fill="none"/>
<rect x="1155.3" y="377.1" width="4.4" height="4.6" fill="#f0421a"/>
<path d="M1154.7 407.1 L1155.9 417.1" stroke="#f5f032" stroke-width="4.6" fill="none"/>
<path d="M1191.4 412.1 L1192.8 422.1 L1188.4 429.2" stroke="#f5f032" stroke-width="4.4" fill="none" stroke-linejoin="round"/>
<path d="M1139.7 431.2 L1149.3 429.8" stroke="#f0421a" stroke-width="4.4" fill="none"/>
<path d="M999.1 433.2 L1006.6 441.8" stroke="#f0421a" stroke-width="5" fill="none"/>
<path d="M1056.2 457.2 L1062.6 453.8" stroke="#f0421a" stroke-width="4.4" fill="none"/>
<path d="M1017.2 456.2 L1018.2 462.0" stroke="#f0421a" stroke-width="4" fill="none"/>
<path d="M1163.4 458.2 L1168.4 462.0" stroke="#f5f032" stroke-width="4" fill="none"/>
<path d="M851.4 464.4 L849.4 476.4" stroke="#f5f032" stroke-width="4.6" fill="none"/>
<path d="M833.9 487.0 L833.3 495.0 L829.9 498.0" stroke="#f5f032" stroke-width="4.4" fill="none" stroke-linejoin="round"/>
<rect x="593.6" y="611.2" width="3.6" height="4.8" fill="#f5f032"/>
<rect x="948.1" y="473.0" width="4.4" height="3.4" fill="#f5f032"/>
<rect x="1011.2" y="466.4" width="7.0" height="4.6" fill="#f5f032"/>
<path d="M1032.2 480.0 L1038.2 485.6 L1045.2 488.0" stroke="#f0421a" stroke-width="5" fill="none" stroke-linejoin="round"/>
<rect x="1123.3" y="480.0" width="9.0" height="4.4" fill="#f5f032"/>
<rect x="1169.4" y="483.6" width="5.0" height="4.0" fill="#f5f032"/>
<rect x="1087.3" y="507.1" width="4.6" height="3.4" fill="#f0421a"/>
<path d="M1101.3 544.1 L1113.3 537.1" stroke="#f5f032" stroke-width="4.6" fill="none"/>
<rect x="1132.3" y="568.7" width="13.0" height="4.4" fill="#d0301a"/>
<rect x="1178.0" y="608.2" width="6.0" height="4.4" fill="#f5f032"/>
<rect x="1137.3" y="516.1" width="1.4" height="4.0" fill="#f0421a"/>
<rect x="945.1" y="614.2" width="4.0" height="1.8" fill="#f5f032"/>
<rect x="1046.2" y="471.0" width="2.0" height="4.0" fill="#f5f032"/>
<path d="M595.6 612.0 L597.2 625.7" stroke="#f5f032" stroke-width="4.6" fill="none"/>
<rect x="560.0" y="711.2" width="1.2" height="2.6" fill="#f0421a"/>
<rect x="945.1" y="614.4" width="4.6" height="5.2" fill="#f5f032"/>
<path d="M1006.8 639.1 L1009.8 649.7" stroke="#f5f032" stroke-width="4.6" fill="none"/>
<path d="M997.1 691.7 L1007.2 690.1" stroke="#f5f032" stroke-width="4.6" fill="none"/>
<rect x="1138.7" y="629.7" width="4.0" height="6.0" fill="#f0421a"/>
<rect x="1178.0" y="608.0" width="6.0" height="4.4" fill="#f5f032"/>
<path d="M1155.3 684.1 L1157.3 697.7" stroke="#f5f032" stroke-width="4.6" fill="none"/>
<path d="M1173.4 731.4 L1182.4 732.6" stroke="#f5f032" stroke-width="3" fill="none"/>
<rect x="1169.6" y="483.6" width="4.8" height="4.0" fill="#f5f032"/>
<rect x="1222.0" y="493.0" width="5.6" height="5.0" fill="#f5f032"/>
<rect x="1214.6" y="572.0" width="4.8" height="8.0" fill="#f5f032"/>
<rect x="1177.6" y="608.0" width="6.4" height="4.4" fill="#f5f032"/>
<rect x="1137.2" y="516.0" width="1.6" height="4.4" fill="#f0421a"/>
<rect x="1257.0" y="497.0" width="2.0" height="4.0" fill="#f0421a"/>
<rect x="1123.0" y="479.6" width="9.4" height="4.8" fill="#f5f032"/>
<rect x="1177.6" y="608.0" width="6.4" height="4.4" fill="#f5f032"/>
<rect x="1199.0" y="634.0" width="5.0" height="2.0" fill="#f5f032"/>
<rect x="1203.0" y="652.4" width="4.6" height="6.6" fill="#f5f032"/>
<rect x="1203.0" y="706.0" width="5.0" height="2.0" fill="#f5f032"/>
<rect x="1218.0" y="706.0" width="14.0" height="4.4" fill="#f5f032"/>
<rect x="1241.6" y="699.6" width="4.4" height="10.4" fill="#f5f032"/>
<rect x="1172.0" y="731.0" width="11.0" height="2.0" fill="#f5f032"/>
<path d="M1154.4 684.0 L1157.0 697.6" stroke="#f5f032" stroke-width="4.6" fill="none"/>
</g>
</svg>
<!--MAPSVG-END-->
</div>

<!-- HEADER -->
<div class="abs" id="hdr"></div>
<!--LOGO-START-->
<svg class="abs" style="left:0;top:0" width="100" height="34" viewBox="0 0 100 34">
<defs><linearGradient id="lg1" x1="0" y1="0" x2="1" y2="0"><stop offset="0" stop-color="#55b4ea"/><stop offset=".45" stop-color="#2467c4"/><stop offset="1" stop-color="#2a1a96"/></linearGradient>
<linearGradient id="lg2" x1="0" y1="0" x2="1" y2="0"><stop offset="0" stop-color="#2b4fd0"/><stop offset=".45" stop-color="#1a0a60"/><stop offset=".8" stop-color="#1a0f10"/></linearGradient></defs>
<path d="M33.8 8.9 C40 5.6 45 3.3 50.4 3.6 C56 4 60 8.6 67.6 12.4 C76 14 84.5 16 85.6 20.4 C86 23 84 25 81.8 26.4" fill="none" stroke="url(#lg1)" stroke-width="1.25" stroke-linecap="round"/>
<path d="M33.8 8.9 C40 10.8 52 12.2 67.6 12.6" fill="none" stroke="url(#lg1)" stroke-width="1.1" stroke-linecap="round"/>
<circle cx="6.5" cy="11.7" r="1.75" fill="#2335b5"/>
<rect x="5.1" y="15.6" width="2.9" height="15" fill="#1a0f10"/>
<rect x="13" y="22.2" width="4" height="1.9" fill="#1a0f10"/>
<path d="M16.2 11.7 H27.6 C32 11.7 33.7 14.6 33.7 17.7 C33.7 21 31.6 23.2 27.6 23.2 H23.6" fill="none" stroke="url(#lg2)" stroke-width="2.7" stroke-linecap="round"/>
<rect x="21" y="14.5" width="2.7" height="16.1" fill="#1a0f10"/>
<path d="M36.1 22 V30.6 M36.1 26.8 C36.1 24 38.4 22.8 41.2 23.4" fill="none" stroke="#8a8a8a" stroke-width="2.7"/>
<ellipse cx="46.9" cy="26.3" rx="3.6" ry="3.1" fill="none" stroke="#1a0f10" stroke-width="2.7"/>
<path d="M53.9 16.9 V30.6" stroke="#8a8a8a" stroke-width="2.7" fill="none"/>
<ellipse cx="57.4" cy="26.3" rx="3.2" ry="3.1" fill="none" stroke="#8a8a8a" stroke-width="2.7"/>
<path d="M64.6 26.5 H71.7 C71.7 24.2 70.4 23.1 68.2 23.1 C65.8 23.1 64.4 24.5 64.4 26.4 C64.4 28.4 65.9 29.5 68.2 29.5 C69.8 29.5 70.9 29 71.8 28" fill="none" stroke="#1a0f10" stroke-width="2.5"/>
</svg>
<!--LOGO-END-->

<!-- SIDEBAR -->
<div class="abs" style="left:3px;top:34px;width:333px;height:733px;background:#fff;"></div>
<div class="abs" id="tabs"></div>
<div class="abs" id="tabact"></div>
<div class="abs" id="collapse"></div>
<!--SIDEBAR-START-->
<svg width="0" height="0" style="position:absolute">
<defs>
<g id="i-eye"><path d="M-6.7 0 C-4.6 -3.6 -2.4 -5.1 0 -5.1 C2.4 -5.1 4.6 -3.6 6.7 0 C4.6 3.6 2.4 5.1 0 5.1 C-2.4 5.1 -4.6 3.6 -6.7 0Z" fill="#555"/><circle r="3.5" fill="#fff"/><circle r="2.3" fill="#555"/><circle cx="-0.9" cy="-0.9" r="1.15" fill="#fff"/></g>
<g id="i-eyes"><path d="M-6.3 0.3 C-4.4 -3.5 -2.3 -4.9 0 -4.9 C2.4 -4.9 4.6 -3.4 6.7 0.2 C4.6 3.8 2.4 5.2 0 5.2 C-2.4 5.2 -4.4 3.8 -6.3 0.3Z" fill="#555"/><circle cx="0.2" cy="0.2" r="3.3" fill="#fff"/><circle cx="0.2" cy="0.2" r="2.1" fill="#555"/><path d="M-8 -5.2 L-6.6 -6.6 L8 5 L6.6 6.4Z" fill="#fff"/><path d="M-7.4 -5.6 L7.4 6" stroke="#555" stroke-width="1.25" fill="none"/></g>
<g id="i-gear"><path fill-rule="evenodd" fill="#555" d="M-1.37 -4.08 L-1.15 -5.69 L1.15 -5.69 L1.37 -4.08 L2.84 -3.23 L4.35 -3.84 L5.50 -1.85 L4.22 -0.85 L4.22 0.85 L5.50 1.85 L4.35 3.84 L2.84 3.23 L1.37 4.08 L1.15 5.69 L-1.15 5.69 L-1.37 4.08 L-2.84 3.23 L-4.35 3.84 L-5.50 1.85 L-4.22 0.85 L-4.22 -0.85 L-5.50 -1.85 L-4.35 -3.84 L-2.84 -3.23Z M2.00 0 A2.00 2.00 0 1 0 -2.00 0 A2.00 2.00 0 1 0 2.00 0Z" stroke="#555" stroke-width="0.6" stroke-linejoin="round"/></g>
<g id="i-info"><circle r="6" fill="#555"/><rect x="-0.9" y="-3.6" width="1.9" height="1.8" fill="#fff"/><path d="M-1.5 -0.9 H1 V2.3 H1.7 V3.5 H-1.7 V2.3 H-0.9 V0.3 H-1.5Z" fill="#fff"/></g>
<g id="i-cd"><path d="M-3 -1.5 L0 1.5 L3 -1.5" fill="none" stroke="#555" stroke-width="1.25"/></g>
<g id="i-cu"><path d="M-3 1.5 L0 -1.5 L3 1.5" fill="none" stroke="#555" stroke-width="1.25"/></g>
</defs>
</svg>

<!-- tab icons -->
<svg class="abs" style="left:22px;top:47px" width="12" height="12" viewBox="0 0 12 12"><path d="M6 0 L12 2.7 L6 5.4 L0 2.7Z" fill="#1f4fa0"/><path d="M0.2 5.2 L1.9 4.4 L6 6.3 L10.1 4.4 L11.8 5.2 L6 7.9Z" fill="#1f4fa0"/><path d="M0.2 8.2 L1.9 7.4 L6 9.3 L10.1 7.4 L11.8 8.2 L6 10.9Z" fill="#1f4fa0"/></svg>
<svg class="abs" style="left:65px;top:47px" width="12" height="12" viewBox="0 0 12 12" fill="none" stroke="#333" stroke-width="1"><path d="M0.5 2.2 H11.5 M0.5 6 H11.5 M0.5 9.8 H11.5"/><circle cx="4.2" cy="2.2" r="1.3" fill="#f5f5f5"/><circle cx="8" cy="6" r="1.3" fill="#f5f5f5"/><circle cx="3.6" cy="9.8" r="1.3" fill="#f5f5f5"/></svg>
<!-- collapse arrow -->
<svg class="abs" style="left:349px;top:47px" width="12" height="12" viewBox="0 0 12 12"><path d="M10.6 1.3 L1.2 6.2 L10.6 11" fill="none" stroke="#222" stroke-width="1.1"/></svg>

<div class="t" id="ls" style="left:4px;top:75px;font-size:14px;color:#505050;letter-spacing:-0.1px;-webkit-text-stroke:0.3px #555;">Layer Settings</div>

<!-- row 1 : SRMCV Snapshot  (cy 109.6) -->
<svg class="abs" style="left:26px;top:104px" width="11" height="11" viewBox="0 0 11 11"><path class="ic" d="M0 2.8 Q0 1.8 1 1.8 H2.8 L3.5 0.4 H7.5 L8.2 1.8 H10 Q11 1.8 11 2.8 V9.7 Q11 10.7 10 10.7 H1 Q0 10.7 0 9.7Z"/><circle cx="5.5" cy="6.1" r="2.3" fill="#fff"/></svg>
<div class="t row" id="r1" style="left:40px;top:103.5px;letter-spacing:-0.08px"><span class="cap" style="margin-right:-4.2px">SRMCV</span> Snapshot</div>
<!-- row 2 : TAG (cy 144.6)-->
<svg class="abs" style="left:26px;top:139.5px" width="11.5" height="10" viewBox="0 0 11.5 10"><path class="ic" d="M0 0.8 Q0 0 0.8 0 H4.2 L8.6 4.6 Q9 5 8.6 5.4 L5.2 9.2 Q4.8 9.6 4.4 9.2 L0 4.6Z"/><circle cx="2" cy="2.1" r="0.9" fill="#fff"/><path d="M6 0 L10.8 5 L6.6 9.6" fill="none" stroke="#555" stroke-width="1.1"/></svg>
<div class="t row" id="r2" style="left:40.5px;top:138.5px;"><span class="cap" style="transform:scaleX(.9)">TAG</span></div>
<!-- row 3 : SRMCV Distress Data (cy 179.6)-->
<svg class="abs" style="left:26px;top:174px" width="9" height="12" viewBox="0 0 9 12"><path d="M0.6 1.4 Q0.6 0.6 1.4 0.6 H5.4 L8.2 3.4 V10.4 Q8.2 11.2 7.4 11.2 H1.4 Q0.6 11.2 0.6 10.4Z M5.2 0.8 V3.6 H8" fill="none" stroke="#555" stroke-width="1.1"/></svg>
<div class="t row" id="r3" style="left:37px;top:173.5px;letter-spacing:-0.1px"><span class="cap" style="margin-right:-4.2px">SRMCV</span> Distress Data</div>
<!-- row 4 : Alert (cy 214.6)-->
<svg class="abs" style="left:26px;top:208.5px" width="10" height="12" viewBox="0 0 10 12"><path class="ic" d="M5 0 Q5.8 0 5.8 0.9 Q8.4 1.6 8.4 4.6 Q8.4 7.2 9.8 8.4 Q10.2 9.4 9.2 9.5 H0.8 Q-0.2 9.4 0.2 8.4 Q1.6 7.2 1.6 4.6 Q1.6 1.6 4.2 0.9 Q4.2 0 5 0Z M3.6 10.2 H6.4 Q6.2 11.6 5 11.6 Q3.8 11.6 3.6 10.2Z"/></svg>
<div class="t row" id="r4" style="left:39px;top:208.5px;">Alert</div>
<!-- row 5 : Data Comparison (cy 249.6)-->
<svg class="abs" style="left:26px;top:244px" width="14.5" height="11.5" viewBox="0 0 14.5 11.5"><g fill="none" stroke="#555" stroke-width="1.1"><path d="M7.25 0.6 V10 M2.2 2.2 H12.3 M3.2 10.6 H11.3"/><path d="M2.9 2.6 L0.8 7 M2.9 2.6 L5 7 M11.6 2.6 L9.5 7 M11.6 2.6 L13.7 7"/></g><path class="ic" d="M0.3 6.9 H5.5 Q5.2 8.8 2.9 8.8 Q0.6 8.8 0.3 6.9Z M9 6.9 H14.2 Q13.9 8.8 11.6 8.8 Q9.3 8.8 9 6.9Z"/><circle cx="7.25" cy="1.6" r="1.3" class="ic"/></svg>
<div class="t row" id="r5" style="left:43px;top:243.5px;letter-spacing:0.06px">Data Comparison</div>

<div class="t row" id="rsm" style="left:42px;top:278.5px;">RSM for displaying result</div>
<!-- segmented -->
<div class="abs" style="left:42px;top:292px;width:158px;height:31px;border:1px solid #ddd;border-radius:3px;background:#fff;"></div>
<div class="abs" style="left:121.5px;top:293px;width:77.5px;height:29px;background:#e8ecf5;border-radius:0 2px 2px 0;"></div>
<div class="t" id="sa" style="left:56px;top:301.5px;font-size:12px;letter-spacing:0.85px;color:#606060;">Select-A</div>
<div class="t" id="sb" style="left:134px;top:301.5px;font-size:12px;letter-spacing:0.85px;color:#3e66ae;">Select-B</div>
<!-- line width -->
<div class="abs" style="left:6.5px;top:334px;width:326.5px;height:63px;border:1px solid #d6dcea;border-radius:3px;background:#e8ecf5;"></div>
<div class="t row" id="lw" style="left:42px;top:344px;color:#3e66ae;letter-spacing:0.28px">Line width</div>
<div class="abs" style="left:46px;top:363.3px;width:200px;height:1.6px;background:#5f7fbd;"></div>
<div class="abs" style="left:242px;top:360px;width:8.4px;height:8.4px;border-radius:50%;background:#1f4fa0;"></div>
<!-- data download -->
<div class="t row" id="dd" style="left:42px;top:410px;letter-spacing:0.17px">Data Download</div>
<div class="abs" style="left:42px;top:424px;width:53px;height:30px;border:1px solid #ddd;border-radius:3px;background:#fff;"></div>
<div class="t" id="csv" style="left:56px;top:433.5px;font-size:12px;letter-spacing:0.9px;color:#606060;"><span class="cap" style="transform:scaleX(.86)">CSV</span></div>

<!-- row 6 : Roughness Data (cy 481.6)-->
<svg class="abs" style="left:26px;top:476.5px" width="11.5" height="10" viewBox="0 0 11.5 10"><path d="M0.6 0 V9.2 H11.5" fill="none" stroke="#555" stroke-width="1.2"/><path d="M2.9 4.8 V7.6 M5.1 2.6 V7.6 M7.3 4 V7.6 M9.5 1.6 V7.6" stroke="#555" stroke-width="1.3" fill="none"/></svg>
<div class="t row" id="r6" style="left:40px;top:475.5px;letter-spacing:-0.12px">Roughness Data</div>
<!-- row 7 : Mile marker (cy 516.6)-->
<svg class="abs" style="left:26px;top:511px" width="11.6" height="11.6" viewBox="0 0 11.6 11.6"><circle cx="5.8" cy="5.8" r="5.1" fill="none" stroke="#555" stroke-width="1.2"/><circle cx="5.8" cy="5.8" r="2.3" class="ic"/></svg>
<div class="t row" id="r7" style="left:40px;top:510.5px;letter-spacing:0.2px">Mile marker</div>
<!-- row 8 : Base layer (cy 551.6)-->
<svg class="abs" style="left:26px;top:546.5px" width="13" height="10" viewBox="0 0 13 10"><path class="ic" d="M0 1.6 L3.6 0.2 V8.6 L0 10Z M4.4 0.2 L8.6 1.4 V9.8 L4.4 8.6Z M9.4 1.4 L13 0 V8.4 L9.4 9.8Z"/></svg>
<div class="t row" id="r8" style="left:41.5px;top:545.5px;letter-spacing:-0.22px">Base layer</div>

<!-- right-side row icons -->
<svg class="abs" style="left:0;top:0" width="336" height="600">
<use href="#i-eye" x="273.6" y="109.6"/><use href="#i-info" x="304" y="109.7"/><use href="#i-cd" x="319.8" y="109.8"/>
<use href="#i-eye" x="273.6" y="144.6"/><use href="#i-info" x="304" y="144.7"/><use href="#i-cd" x="319.8" y="144.8"/>
<use href="#i-eyes" x="273" y="179.6"/><use href="#i-gear" x="289.1" y="179.8"/><use href="#i-info" x="304" y="179.7"/><use href="#i-cd" x="319.8" y="179.8"/>
<use href="#i-eye" x="273.6" y="214.6"/><use href="#i-gear" x="289.1" y="214.8"/><use href="#i-info" x="304" y="214.7"/><use href="#i-cd" x="319.8" y="214.8"/>
<use href="#i-eye" x="273.6" y="249.6"/><use href="#i-gear" x="289.1" y="249.8"/><use href="#i-info" x="304" y="249.7"/><use href="#i-cu" x="319.8" y="249.4"/>
<use href="#i-eye" x="273.6" y="481.6"/><use href="#i-gear" x="289.1" y="481.8"/><use href="#i-info" x="304" y="481.7"/><use href="#i-cd" x="319.8" y="481.8"/>
<use href="#i-eye" x="273.6" y="516.6"/><use href="#i-info" x="304" y="516.7"/><use href="#i-cd" x="319.8" y="516.8"/>
<use href="#i-eye" x="273.6" y="551.6"/><use href="#i-cd" x="319.8" y="551.8"/>
</svg>

<!--SIDEBAR-END-->

<!--TOOLBAR-START-->
<div class="abs" style="left:1556px;top:46px;width:33px;height:126px;background:#fff;border-radius:4px;"></div>
<svg class="abs" style="left:1568.6px;top:58.6px" width="8" height="11" viewBox="0 0 8 11"><path d="M0.2 0.2 L7.4 6.2 L4.4 6.6 L6 10 L4.6 10.7 L3 7.3 L0.6 9.2Z" fill="#f01818"/></svg>
<svg class="abs" style="left:1565.6px;top:87.4px" width="13.4" height="9.6" viewBox="0 0 13.4 9.6"><rect x="0" y="0.2" width="9.2" height="9.2" rx="1.5" fill="#555"/><path d="M9.9 3.4 L13.4 1.2 V8.4 L9.9 6.2Z" fill="#555"/></svg>
<svg class="abs" style="left:1568.2px;top:114.7px" width="9" height="12" viewBox="0 0 9 12"><path d="M0.6 0.6 H8.4 V11 L4.5 8.2 L0.6 11Z" fill="none" stroke="#555" stroke-width="1.15"/></svg>
<svg class="abs" style="left:1566.6px;top:144px" width="12" height="10.4" viewBox="0 0 12 10.4"><path d="M0.6 0 V9.7 H12" fill="none" stroke="#444" stroke-width="1.2"/><path d="M2.8 6.6 L5.2 4 L7 5.4 L10.6 2" fill="none" stroke="#444" stroke-width="1.3"/></svg>
<!--TOOLBAR-END-->
<!--POPUP-START-->
<style>.ph{background:#4f5b83;border:1px solid #2d3656;color:#fff;font-weight:bold;font-size:14px;line-height:18px;padding-left:3.4px;letter-spacing:-0.45px;text-shadow:0 0 1px #222;white-space:nowrap;overflow:hidden}.pv{background:#fff;border:1px solid #333;color:#222;font-size:14px;line-height:18px;text-align:right;padding-right:3.6px;white-space:nowrap;letter-spacing:-0.2px}</style>
<svg class="abs" style="left:1100px;top:236px" width="245" height="155"><path d="M19 5 H226 Q235 5 235 14 V129.8 Q235 138.8 226 138.8 H37 L8.8 149 L10 126 V14 Q10 5 19 5Z" fill="#fff"/></svg>
<svg class="abs" style="left:1316.6px;top:247.2px" width="8.8" height="8.6" viewBox="0 0 8.8 8.6"><path d="M0.6 0.6 L8.2 8 M8.2 0.6 L0.6 8" stroke="#111" stroke-width="1.5" fill="none"/></svg>
<div class="abs ph" style="left:1115.2px;top:259.8px;width:92.8px;height:19.9px;"><span id="ph0">Direction</span></div>
<div class="abs pv" style="left:1209.6px;top:259.8px;width:120.40000000000009px;height:19.9px;"><span id="pv0">R</span></div>
<div class="abs ph" style="left:1115.2px;top:281.5px;width:92.8px;height:19.9px;"><span id="ph1">Select</span></div>
<div class="abs pv" style="left:1209.6px;top:281.5px;width:59px;height:19.9px;"><span id="pva1" style="letter-spacing:-0.6px">Select-A</span></div>
<div class="abs pv" style="left:1270.2px;top:281.5px;width:59.8px;height:19.9px;"><span id="pvb1" style="letter-spacing:-0.6px">Select-B</span></div>
<div class="abs ph" style="left:1115.2px;top:303.2px;width:92.8px;height:19.9px;"><span id="ph2"><span style="letter-spacing:-1.1px">RSM</span> Max</span></div>
<div class="abs pv" style="left:1209.6px;top:303.2px;width:59px;height:19.9px;"><span id="pva2">598</span></div>
<div class="abs pv" style="left:1270.2px;top:303.2px;width:59.8px;height:19.9px;"><span id="pvb2">1545</span></div>
<div class="abs ph" style="left:1115.2px;top:324.8px;width:92.8px;height:19.9px;"><span id="ph3"><span style="letter-spacing:-1.1px">RSM</span> Average</span></div>
<div class="abs pv" style="left:1209.6px;top:324.8px;width:59px;height:19.9px;"><span id="pva3">412</span></div>
<div class="abs pv" style="left:1270.2px;top:324.8px;width:59.8px;height:19.9px;"><span id="pvb3">1299</span></div>
<div class="abs ph" style="left:1115.2px;top:346.5px;width:92.8px;height:19.9px;"><span id="ph4"><span style="letter-spacing:-1.1px">RSM</span> Median</span></div>
<div class="abs pv" style="left:1209.6px;top:346.5px;width:59px;height:19.9px;"><span id="pva4">598</span></div>
<div class="abs pv" style="left:1270.2px;top:346.5px;width:59.8px;height:19.9px;"><span id="pvb4">1545</span></div>
<!--POPUP-END-->
<!--MODAL-START-->
<style>.sel{width:121.4px;height:24.6px;border:1px solid #ddd;border-radius:3px;background:#f5f5f5;}.lab{font-size:11px;color:#5a5a5a;letter-spacing:-0.08px;}.btn{height:30px;border:1px solid #d9d9d9;border-radius:3px;background:#fff;}</style>
<div class="abs" id="modal" style="left:384px;top:274px;width:524px;height:458px;background:#fff;border-radius:3px;box-shadow:0 1px 4px rgba(0,0,0,.35);"></div>
<div class="abs" style="left:384px;top:274px;width:524px;height:17px;background:#f5f5f5;border-radius:3px 3px 0 0;"></div>
<div class="t" id="mt" style="left:392.5px;top:277.5px;font-size:12px;color:#444;letter-spacing:0.11px">Data comparison settings</div>
<svg class="abs" style="left:884px;top:279.4px" width="8" height="8" viewBox="0 0 8 8"><path d="M1 1 L7 7 M7 1 L1 7" stroke="#222" stroke-width="2" fill="none"/></svg>
<div class="t" id="sA" style="left:395.5px;top:311.5px;font-size:16.6px;color:#555;letter-spacing:-0.25px">Select-A</div>
<div class="t" id="sB" style="left:645.3px;top:311.5px;font-size:16.6px;color:#555;letter-spacing:-0.25px">Select-B</div>
<div class="abs" style="left:396px;top:339px;width:499.5px;height:1px;background:#dcdcdc;"></div>
<div class="t lab" id="l00" style="left:396px;top:368.20000000000005px;">Statistics</div>
<div class="t lab" id="l01" style="left:396px;top:401.40000000000003px;">Date(Local time)</div>
<div class="t lab" id="l02" style="left:396px;top:434.8px;">Data period</div>
<div class="t lab" id="l03" style="left:396px;top:468.1px;">Type</div>
<div class="abs sel" style="left:505.2px;top:360.6px;"></div><div class="t" id="s00" style="left:511.0px;top:367.2px;font-size:12px;color:#444;letter-spacing:-0.3px">RoCoMo</div><svg class="abs" style="left:609.8px;top:367.6px" width="10" height="10" viewBox="-5 -5 10 10"><use href="#i-cd" transform="scale(0.92)"/></svg>
<div class="abs" style="left:505.2px;top:393.8px;width:121.4px;height:24.8px;border:1px solid #ddd;border-radius:3px;background:#fff;overflow:hidden;"><div style="position:absolute;left:97.3px;top:0;width:24px;height:24px;background:#f5f5f5;border-left:1px solid #ddd;"></div></div><div class="t" id="s01" style="left:509.2px;top:401.2px;font-size:12px;color:#555;letter-spacing:0.12px">01/01/2025</div><svg class="abs" style="left:609.0px;top:400.3px" width="11.4" height="11.8" viewBox="0 0 11.4 11.8"><path d="M0 2.4 Q0 1.6 0.8 1.6 H10.6 Q11.4 1.6 11.4 2.4 V4 H0Z" fill="#333"/><rect x="2.2" y="0" width="1.6" height="2.6" rx=".6" fill="#333"/><rect x="7.6" y="0" width="1.6" height="2.6" rx=".6" fill="#333"/><path d="M0.45 4 V10.9 Q0.45 11.35 0.9 11.35 H10.5 Q10.95 11.35 10.95 10.9 V4 M0.4 6.6 H11 M0.4 9 H11 M3.1 4.2 V11.3 M5.7 4.2 V11.3 M8.3 4.2 V11.3" fill="none" stroke="#333" stroke-width="0.9"/></svg>
<div class="abs sel" style="left:505.2px;top:427.2px;"></div><div class="t" id="s02" style="left:511.0px;top:433.8px;font-size:12px;color:#444;letter-spacing:0.5px">Month</div><svg class="abs" style="left:609.8px;top:434.2px" width="10" height="10" viewBox="-5 -5 10 10"><use href="#i-cd" transform="scale(0.92)"/></svg>
<div class="abs sel" style="left:505.2px;top:460.5px;"></div><div class="t" id="s03" style="left:511.0px;top:467.1px;font-size:12px;color:#444;letter-spacing:-0.55px">AVG</div><svg class="abs" style="left:609.8px;top:467.5px" width="10" height="10" viewBox="-5 -5 10 10"><use href="#i-cd" transform="scale(0.92)"/></svg>
<div class="t lab" id="l10" style="left:645.6px;top:368.20000000000005px;">Statistics</div>
<div class="t lab" id="l11" style="left:645.6px;top:401.40000000000003px;">Date(Local time)</div>
<div class="t lab" id="l12" style="left:645.6px;top:434.8px;">Data period</div>
<div class="t lab" id="l13" style="left:645.6px;top:468.1px;">Type</div>
<div class="abs sel" style="left:755px;top:360.6px;"></div><div class="t" id="s10" style="left:760.8px;top:367.2px;font-size:12px;color:#444;letter-spacing:-0.3px">RoCoMo</div><svg class="abs" style="left:859.6px;top:367.6px" width="10" height="10" viewBox="-5 -5 10 10"><use href="#i-cd" transform="scale(0.92)"/></svg>
<div class="abs" style="left:755px;top:393.8px;width:121.4px;height:24.8px;border:1px solid #ddd;border-radius:3px;background:#fff;overflow:hidden;"><div style="position:absolute;left:97.3px;top:0;width:24px;height:24px;background:#f5f5f5;border-left:1px solid #ddd;"></div></div><div class="t" id="s11" style="left:759px;top:401.2px;font-size:12px;color:#555;letter-spacing:0.12px">02/01/2025</div><svg class="abs" style="left:858.8px;top:400.3px" width="11.4" height="11.8" viewBox="0 0 11.4 11.8"><path d="M0 2.4 Q0 1.6 0.8 1.6 H10.6 Q11.4 1.6 11.4 2.4 V4 H0Z" fill="#333"/><rect x="2.2" y="0" width="1.6" height="2.6" rx=".6" fill="#333"/><rect x="7.6" y="0" width="1.6" height="2.6" rx=".6" fill="#333"/><path d="M0.45 4 V10.9 Q0.45 11.35 0.9 11.35 H10.5 Q10.95 11.35 10.95 10.9 V4 M0.4 6.6 H11 M0.4 9 H11 M3.1 4.2 V11.3 M5.7 4.2 V11.3 M8.3 4.2 V11.3" fill="none" stroke="#333" stroke-width="0.9"/></svg>
<div class="abs sel" style="left:755px;top:427.2px;"></div><div class="t" id="s12" style="left:760.8px;top:433.8px;font-size:12px;color:#444;letter-spacing:0.5px">Month</div><svg class="abs" style="left:859.6px;top:434.2px" width="10" height="10" viewBox="-5 -5 10 10"><use href="#i-cd" transform="scale(0.92)"/></svg>
<div class="abs sel" style="left:755px;top:460.5px;"></div><div class="t" id="s13" style="left:760.8px;top:467.1px;font-size:12px;color:#444;letter-spacing:-0.55px">AVG</div><svg class="abs" style="left:859.6px;top:467.5px" width="10" height="10" viewBox="-5 -5 10 10"><use href="#i-cd" transform="scale(0.92)"/></svg>
<div class="t" id="opt" style="left:395.5px;top:530.3px;font-size:16.6px;color:#555;letter-spacing:0.65px">Options</div>
<div class="abs" style="left:396px;top:558px;width:499.5px;height:1px;background:#dcdcdc;"></div>
<div class="t lab" id="lct" style="left:396px;top:587.2px;">Compare type</div>
<div class="t lab" id="lsl" style="left:396px;top:620.4px;">Segment Length</div>
<div class="abs sel" style="left:505.2px;top:579.6px;"></div><div class="t" id="sct" style="left:511.0px;top:586.2px;font-size:11.5px;color:#444;letter-spacing:-0.35px">A+C&lt;=B</div><svg class="abs" style="left:609.8px;top:586.6px" width="10" height="10" viewBox="-5 -5 10 10"><use href="#i-cu" transform="scale(0.92)"/></svg>
<div class="abs sel" style="left:505.2px;top:612.9px;"></div><div class="t" id="ssl" style="left:511.0px;top:619.5px;font-size:12px;color:#444;">0.1mile</div><svg class="abs" style="left:609.8px;top:619.9px" width="10" height="10" viewBox="-5 -5 10 10"><use href="#i-cu" transform="scale(0.92)"/></svg>
<div class="t lab" id="ldc" style="left:645.6px;top:587.2px;">Diff - C</div>
<div class="abs" style="left:755px;top:579.4px;width:121.4px;height:24.8px;border:1px solid #ddd;border-radius:3px;background:#fff;overflow:hidden;"><div style="position:absolute;left:97.3px;top:0;width:24px;height:24px;background:#f5f5f5;border-left:1px solid #ddd;"></div><div style="position:absolute;left:97.3px;top:11.4px;width:24px;height:1px;background:#ddd;"></div></div>
<div class="t" id="n500" style="left:829px;top:586.2px;font-size:12px;color:#555;letter-spacing:0.1px">500</div>
<svg class="abs" style="left:860px;top:581px" width="10" height="22" viewBox="0 0 10 22"><path d="M2.6 6.2 L5 3.8 L7.4 6.2 M2.6 15.4 L5 17.8 L7.4 15.4" fill="none" stroke="#444" stroke-width="1.1"/></svg>
<div class="abs btn" style="left:396.3px;top:654.5px;width:230.3px;"></div>
<div class="abs btn" style="left:646.2px;top:654.5px;width:230.2px;"></div>
<div class="t" id="bv" style="left:496.5px;top:664px;font-size:12px;letter-spacing:0.6px;color:#5c5c5c;">View</div>
<div class="t" id="bd" style="left:715.4px;top:664px;font-size:12px;letter-spacing:0.84px;color:#5c5c5c;">Download CSV</div>
<!--MODAL-END-->
<!--ATTRIB-START-->
<div class="abs" style="left:1351px;top:748px;width:235.5px;height:14.4px;background:#fff;"></div>
<div class="t" id="att" style="left:1352px;top:749.8px;font-size:11.3px;color:#333;letter-spacing:-0.1px">© <span style="color:#4a22e0;text-decoration:underline">Mapbox</span> © <span style="color:#4a22e0;text-decoration:underline">OpenStreetMap</span> <span style="color:#4a22e0;text-decoration:underline;font-weight:bold;letter-spacing:-0.35px">Improve this map</span></div>
<!--ATTRIB-END-->

</div></div>
</body>
</html>
